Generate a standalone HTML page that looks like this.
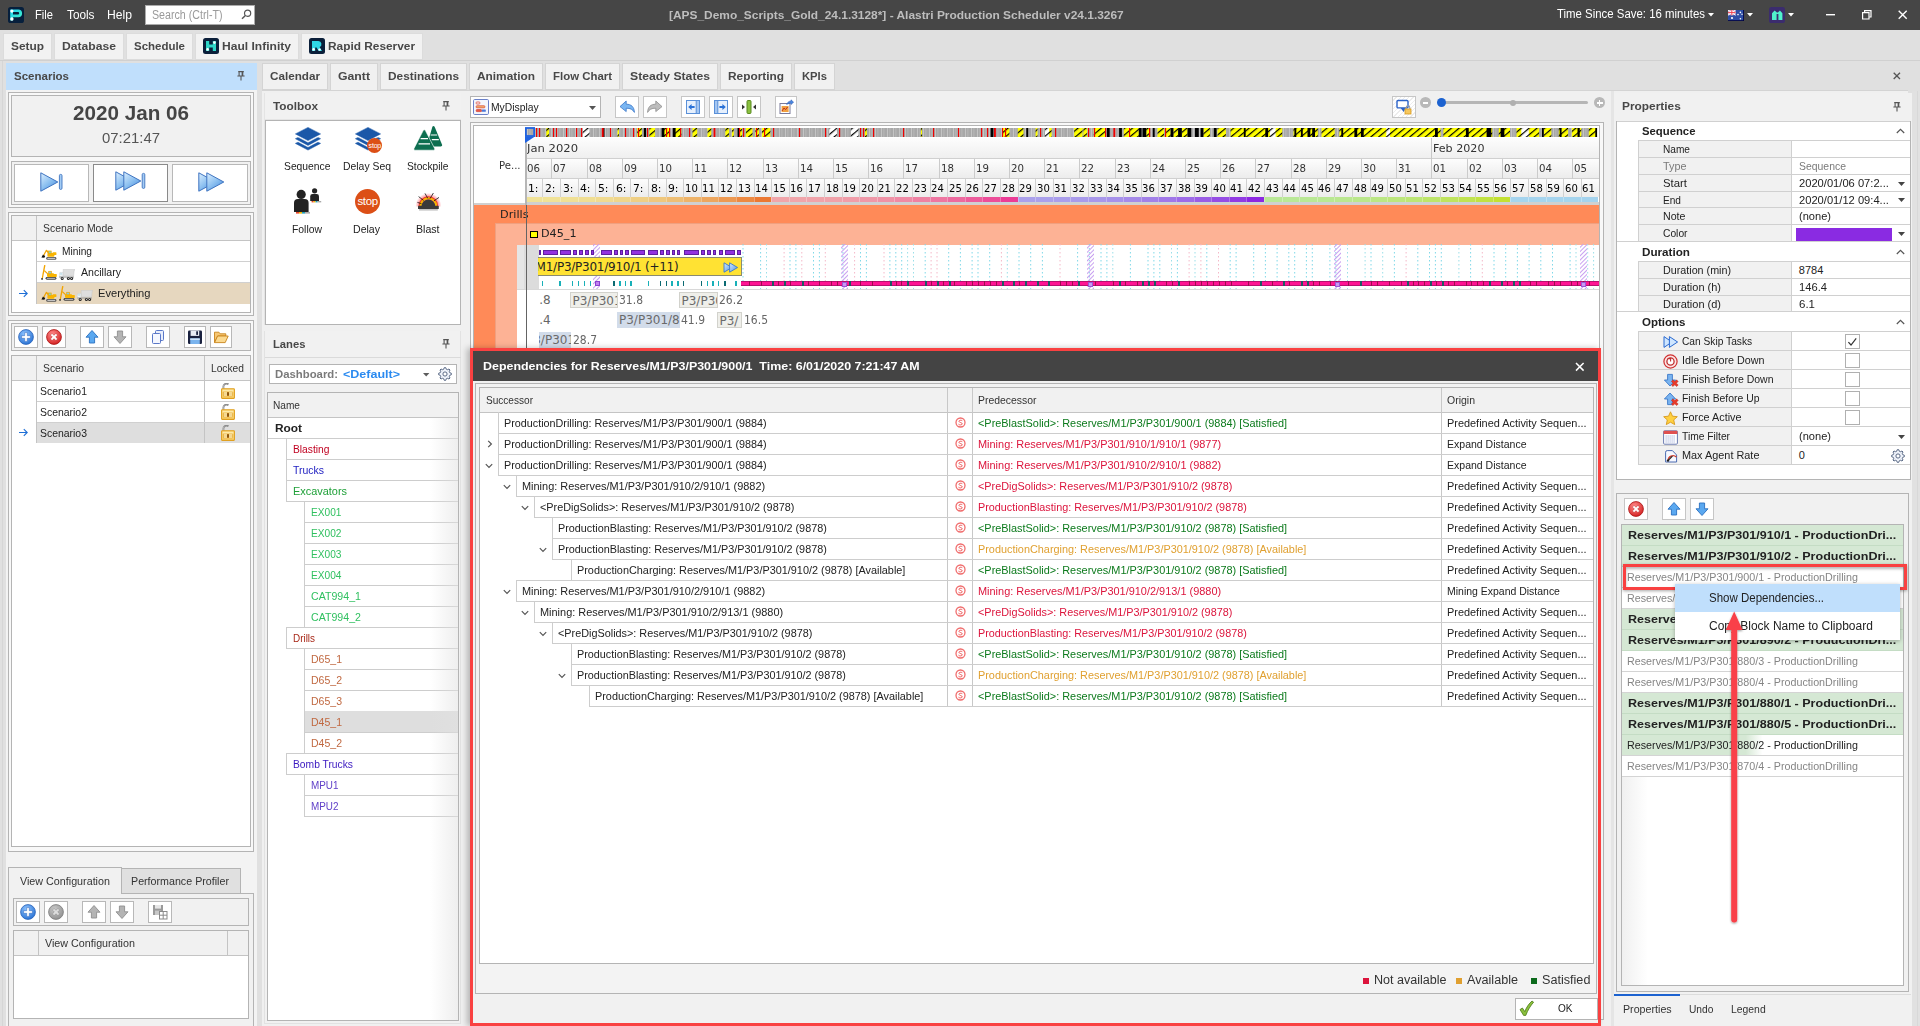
<!DOCTYPE html>
<html><head><meta charset="utf-8"><title>Alastri Production Scheduler</title>
<style>
html,body{margin:0;padding:0;}
body{width:1920px;height:1026px;overflow:hidden;background:#e0e0e0;position:relative;font-family:"Liberation Sans",sans-serif;font-size:11px;color:#222;}
div,span,svg{position:absolute;box-sizing:border-box;}
span{white-space:nowrap;}
</style></head><body>
<div style="left:0px;top:0px;width:1920px;height:30px;background:#464646;"></div>
<svg style="left:8px;top:7px;" width="16" height="16" viewBox="0 0 16 16"><defs><linearGradient id="pg" x1="0" y1="0" x2="1" y2="1"><stop offset="0" stop-color="#20d0f4"/><stop offset="1" stop-color="#44f4c4"/></linearGradient></defs><rect x="0" y="0" width="16" height="16" rx="2.6" fill="#061f3c"/><path d="M2.2 2.4H10.2A3.9 3.9 0 0 1 10.2 10.2H5V13.4H2.2z M5 5.1V7.5H10A1.2 1.2 0 0 0 10 5.1z" fill="url(#pg)" fill-rule="evenodd"/><circle cx="3.9" cy="4.1" r="1.65" fill="#fff"/><circle cx="3.9" cy="12" r="1.7" fill="#fff"/></svg>
<span style="top:4.7px;line-height:19px;font-size:13px;color:#fff;left:35px;transform:scaleX(0.8591);transform-origin:0 50%;">File</span>
<span style="top:4.7px;line-height:19px;font-size:13px;color:#fff;left:66.5px;transform:scaleX(0.9058);transform-origin:0 50%;">Tools</span>
<span style="top:4.7px;line-height:19px;font-size:13px;color:#fff;left:107px;transform:scaleX(0.9346);transform-origin:0 50%;">Help</span>
<div style="left:145px;top:5px;width:110px;height:20px;background:#fff;border:1px solid #ababab;"></div>
<span style="top:5.5px;line-height:18px;font-size:12px;color:#9a9a9a;left:151.5px;transform:scaleX(0.8885);transform-origin:0 50%;">Search (Ctrl-T)</span>
<svg style="left:241px;top:9px;" width="11" height="11" viewBox="0 0 11 11"><circle cx="6.6" cy="4.2" r="3.1" fill="none" stroke="#555" stroke-width="1.2"/><path d="M4.4 6.4L1 9.8" stroke="#555" stroke-width="1.4"/></svg>
<span style="top:6.9px;line-height:17px;font-size:11px;color:#bdbdbd;left:669.3px;font-weight:bold;transform:scaleX(1.0837);transform-origin:0 50%;">[APS_Demo_Scripts_Gold_24.1.3128*] - Alastri Production Scheduler v24.1.3267</span>
<span style="top:5.2px;line-height:18.5px;font-size:12.5px;color:#fff;left:1557px;transform:scaleX(0.9130);transform-origin:0 50%;">Time Since Save: 16 minutes</span>
<svg style="left:1707.5px;top:13px;" width="6" height="4" viewBox="0 0 6 4"><path d="M0 0h6L3 3.4z" fill="#fff"/></svg>
<svg style="left:1746.7px;top:13px;" width="6" height="4" viewBox="0 0 6 4"><path d="M0 0h6L3 3.4z" fill="#fff"/></svg>
<svg style="left:1787.6px;top:13px;" width="6" height="4" viewBox="0 0 6 4"><path d="M0 0h6L3 3.4z" fill="#fff"/></svg>
<svg style="left:1728px;top:10px;" width="16" height="11" viewBox="0 0 16 11"><rect width="16" height="11" fill="#00003c"/><rect width="15.2" height="10.2" fill="#2e4ea6"/><rect width="7.6" height="5.2" fill="#c8a0c0"/><path d="M0 0L7.6 5.2M7.6 0L0 5.2" stroke="#fff" stroke-width="1"/><path d="M3.8 0V5.2M0 2.6H7.6" stroke="#fff" stroke-width="1.8"/><path d="M3.8 0V5.2M0 2.6H7.6" stroke="#f04050" stroke-width="1"/><circle cx="4" cy="8" r="1.1" fill="#fff"/><circle cx="12.4" cy="2.4" r=".8" fill="#fff"/><circle cx="12.4" cy="8.8" r=".8" fill="#fff"/><circle cx="10" cy="4.6" r=".8" fill="#fff"/><circle cx="14" cy="4.2" r=".7" fill="#fff"/></svg>
<svg style="left:1769px;top:7px;" width="16" height="16" viewBox="0 0 16 16"><rect width="16" height="16" rx="2.6" fill="#3b2c6e"/><path d="M3 13V6.2L5.6 3.4 7.9 5.6 8.9 5.6 10.9 3.4 13.4 6.2V13H9.4V7H7.6V13z" fill="#50f2cc"/></svg>
<svg style="left:1826px;top:14px;" width="10" height="2" viewBox="0 0 10 2"><rect width="9" height="1.4" fill="#fff"/></svg>
<svg style="left:1862px;top:10px;" width="10" height="10" viewBox="0 0 10 10"><path d="M0.6 2.6h6.4v6.4h-6.4z" fill="none" stroke="#fff" stroke-width="1.2"/><path d="M2.6 2.4V.6h6.4v6.4H7.2" fill="none" stroke="#fff" stroke-width="1.2"/></svg>
<svg style="left:1898px;top:10px;" width="10" height="10" viewBox="0 0 10 10"><path d="M.7 .7L8.7 8.7M8.7 .7L.7 8.7" stroke="#fff" stroke-width="1.4"/></svg>
<div style="left:0px;top:60px;width:1920px;height:1px;background:#d0d0d0;"></div>
<div style="left:2.6px;top:32.5px;width:49.6px;height:27px;background:#f2f2f2;border:1px solid #dcdcdc;"></div>
<span style="top:37.9px;line-height:17.5px;font-size:11.5px;color:#484848;left:11px;font-weight:bold;transform:scaleX(1.0328);transform-origin:0 50%;">Setup</span>
<div style="left:53.6px;top:32.5px;width:70.6px;height:27px;background:#f2f2f2;border:1px solid #dcdcdc;"></div>
<span style="top:37.9px;line-height:17.5px;font-size:11.5px;color:#484848;left:62px;font-weight:bold;transform:scaleX(1.0562);transform-origin:0 50%;">Database</span>
<div style="left:125.6px;top:32.5px;width:67.6px;height:27px;background:#f2f2f2;border:1px solid #dcdcdc;"></div>
<span style="top:37.9px;line-height:17.5px;font-size:11.5px;color:#484848;left:134px;font-weight:bold;transform:scaleX(0.9976);transform-origin:0 50%;">Schedule</span>
<div style="left:194.6px;top:32.5px;width:104.6px;height:27px;background:#f2f2f2;border:1px solid #dcdcdc;"></div>
<span style="top:37.9px;line-height:17.5px;font-size:11.5px;color:#484848;left:222px;font-weight:bold;transform:scaleX(1.0489);transform-origin:0 50%;">Haul Infinity</span>
<svg style="left:203px;top:38px;" width="16" height="16" viewBox="0 0 16 16"><rect width="16" height="16" rx="2.5" fill="#0b1f3a"/><path d="M3 3h3.2v3.6h3.6V3H13v10H9.8V9.4H6.2V13H3z" fill="#2fd6c8"/><circle cx="4.6" cy="11.4" r="1.3" fill="#fff"/><circle cx="11.4" cy="4.6" r="1.3" fill="#fff"/></svg>
<div style="left:300.6px;top:32.5px;width:122.6px;height:27px;background:#f2f2f2;border:1px solid #dcdcdc;"></div>
<span style="top:37.9px;line-height:17.5px;font-size:11.5px;color:#484848;left:328px;font-weight:bold;transform:scaleX(1.0315);transform-origin:0 50%;">Rapid Reserver</span>
<svg style="left:309px;top:38px;" width="16" height="16" viewBox="0 0 16 16"><rect width="16" height="16" rx="2.5" fill="#0b1f3a"/><path d="M3 3h6.4a3.2 3.2 0 0 1 1.2 6.1L13 13H9.6L7.6 9.6H6.2V13H3z" fill="#2fd6e6"/><circle cx="4.6" cy="11.4" r="1.3" fill="#fff"/><circle cx="10.6" cy="11.6" r="1.2" fill="#fff"/></svg>
<div style="left:262px;top:63px;width:66px;height:27px;background:#f1f1f1;border:1px solid #d4d4d4;"></div>
<span style="top:67.5px;line-height:17.5px;font-size:11.5px;color:#484848;left:270px;font-weight:bold;transform:scaleX(1.0162);transform-origin:0 50%;">Calendar</span>
<div style="left:330px;top:63px;width:48px;height:28px;background:#f0f0f0;border:1px solid #d4d4d4;border-bottom:none;"></div>
<span style="top:67.5px;line-height:17.5px;font-size:11.5px;color:#484848;left:338px;font-weight:bold;transform:scaleX(1.0661);transform-origin:0 50%;">Gantt</span>
<div style="left:380px;top:63px;width:87px;height:27px;background:#f1f1f1;border:1px solid #d4d4d4;"></div>
<span style="top:67.5px;line-height:17.5px;font-size:11.5px;color:#484848;left:388px;font-weight:bold;transform:scaleX(1.0290);transform-origin:0 50%;">Destinations</span>
<div style="left:469px;top:63px;width:74px;height:27px;background:#f1f1f1;border:1px solid #d4d4d4;"></div>
<span style="top:67.5px;line-height:17.5px;font-size:11.5px;color:#484848;left:477px;font-weight:bold;transform:scaleX(1.0317);transform-origin:0 50%;">Animation</span>
<div style="left:545px;top:63px;width:75px;height:27px;background:#f1f1f1;border:1px solid #d4d4d4;"></div>
<span style="top:67.5px;line-height:17.5px;font-size:11.5px;color:#484848;left:553px;font-weight:bold;transform:scaleX(0.9932);transform-origin:0 50%;">Flow Chart</span>
<div style="left:622px;top:63px;width:96px;height:27px;background:#f1f1f1;border:1px solid #d4d4d4;"></div>
<span style="top:67.5px;line-height:17.5px;font-size:11.5px;color:#484848;left:630px;font-weight:bold;transform:scaleX(1.0611);transform-origin:0 50%;">Steady States</span>
<div style="left:720px;top:63px;width:72px;height:27px;background:#f1f1f1;border:1px solid #d4d4d4;"></div>
<span style="top:67.5px;line-height:17.5px;font-size:11.5px;color:#484848;left:728px;font-weight:bold;transform:scaleX(1.0311);transform-origin:0 50%;">Reporting</span>
<div style="left:794px;top:63px;width:41px;height:27px;background:#f1f1f1;border:1px solid #d4d4d4;"></div>
<span style="top:67.5px;line-height:17.5px;font-size:11.5px;color:#484848;left:802px;font-weight:bold;transform:scaleX(0.9780);transform-origin:0 50%;">KPIs</span>
<svg style="left:1893px;top:72px;" width="8" height="8" viewBox="0 0 8 8"><path d="M.7 .7L7 7M7 .7L.7 7" stroke="#555" stroke-width="1.3"/></svg>
<div style="left:2px;top:61px;width:1px;height:965px;background:#d6d6d6;"></div>
<div style="left:6px;top:63px;width:251px;height:963px;background:#f3f3f3;"></div>
<div style="left:6px;top:63px;width:251px;height:27px;background:#c0dffc;"></div>
<span style="top:67.5px;line-height:17.5px;font-size:11.5px;color:#484848;left:14px;font-weight:bold;transform:scaleX(1.0009);transform-origin:0 50%;">Scenarios</span>
<svg style="left:237px;top:71px;" width="8" height="10" viewBox="0 0 8 10"><path d="M1.2 .6h5.6M2.1 .6v4.4M.4 5h7.2M4 5v4.6" stroke="#555" stroke-width="1.1" fill="none"/><rect x="4.6" y=".6" width="1.7" height="4.4" fill="#555"/></svg>
<div style="left:8px;top:92px;width:246px;height:116px;background:#f8f8f8;border:1px solid #b4b4b4;"></div>
<div style="left:11px;top:95px;width:240px;height:62px;background:#f1f1f1;border:1px solid #b4b4b4;"></div>
<span style="top:100.0px;line-height:26px;font-size:20px;color:#454545;left:73px;font-weight:bold;transform:scaleX(1.0325);transform-origin:0 50%;">2020 Jan 06</span>
<span style="top:126.7px;line-height:21px;font-size:15px;color:#555;left:102px;transform:scaleX(0.9930);transform-origin:0 50%;">07:21:47</span>
<div style="left:11px;top:161px;width:240px;height:44px;background:#f1f1f1;border:1px solid #b4b4b4;"></div>
<div style="left:14px;top:164px;width:75px;height:38px;background:#fff;border:1px solid #b8b8b8;"></div>
<svg style="left:40px;top:172.4px;" width="26" height="20" viewBox="0 0 26 20"><defs><linearGradient id="pb" x1="0" y1="0" x2=".8" y2="1"><stop offset="0" stop-color="#dcefff"/><stop offset=".55" stop-color="#8cc0f0"/><stop offset="1" stop-color="#4a8ede"/></linearGradient></defs><path d="M0.8 .8L17.8 10 0.8 19.2z" fill="url(#pb)" stroke="#3f74c0" stroke-width="1" stroke-linejoin="round"/><rect x="19.4" y="2.4" width="2.6" height="15" rx="1.2" fill="#a4ccf4" stroke="#3f74c0" stroke-width=".9"/></svg>
<div style="left:93px;top:164px;width:75px;height:38px;background:#fff;border:1px solid #8a8a8a;"></div>
<svg style="left:115.3px;top:171.4px;" width="32" height="20" viewBox="0 0 32 20"><defs><linearGradient id="pb2" x1="0" y1="0" x2=".8" y2="1"><stop offset="0" stop-color="#dcefff"/><stop offset=".55" stop-color="#8cc0f0"/><stop offset="1" stop-color="#4a8ede"/></linearGradient></defs><path d="M0.8 .8L17.8 10 0.8 19.2z" fill="url(#pb2)" stroke="#3f74c0" stroke-width="1" stroke-linejoin="round"/><path d="M8.8 .8L25.8 10 8.8 19.2z" fill="url(#pb2)" stroke="#3f74c0" stroke-width="1" stroke-linejoin="round"/><rect x="27.2" y="2.4" width="2.6" height="15" rx="1.2" fill="#a4ccf4" stroke="#3f74c0" stroke-width=".9"/></svg>
<div style="left:172px;top:164px;width:76px;height:38px;background:#fff;border:1px solid #b8b8b8;"></div>
<svg style="left:198.3px;top:172.4px;" width="28" height="20" viewBox="0 0 28 20"><defs><linearGradient id="pb3" x1="0" y1="0" x2=".8" y2="1"><stop offset="0" stop-color="#dcefff"/><stop offset=".55" stop-color="#8cc0f0"/><stop offset="1" stop-color="#4a8ede"/></linearGradient></defs><path d="M0.8 .8L17.8 10 0.8 19.2z" fill="url(#pb3)" stroke="#3f74c0" stroke-width="1" stroke-linejoin="round"/><path d="M8.8 .8L25.8 10 8.8 19.2z" fill="url(#pb3)" stroke="#3f74c0" stroke-width="1" stroke-linejoin="round"/></svg>
<div style="left:8px;top:212px;width:246px;height:104px;background:#f8f8f8;border:1px solid #b4b4b4;"></div>
<div style="left:11px;top:215px;width:240px;height:98px;background:#fff;border:1px solid #b4b4b4;"></div>
<div style="left:12px;top:216px;width:238px;height:25px;background:#f1f1f1;border-bottom:1px solid #c4c4c4;"></div>
<div style="left:36px;top:216px;width:1px;height:88px;background:#c4c4c4;"></div>
<span style="top:219.5px;line-height:17px;font-size:11px;color:#333;left:42.5px;transform:scaleX(0.9455);transform-origin:0 50%;">Scenario Mode</span>
<div style="left:37px;top:261px;width:213px;height:1px;background:#d0d0d0;"></div>
<div style="left:37px;top:282px;width:213px;height:1px;background:#d0d0d0;"></div>
<div style="left:37px;top:283px;width:213px;height:21px;background:#e6d7bf;"></div>
<svg style="left:41px;top:248.5px;" width="16" height="11" viewBox="0 0 16 11"><path d="M.4 8.4L2 5.4 4.2 7 3.4 8.8z" fill="#111"/><path d="M2.2 6L5 .7 6.2 .9 8.4 4.4 7.2 4.8 5.4 2.4 3.3 6.6z" fill="#f2a400"/><rect x="6.4" y="4" width="7" height="3.8" rx=".8" fill="#f8b400"/><rect x="11.6" y="3.3" width="3.8" height="2.6" rx=".5" fill="#f8b400"/><rect x="7.4" y="2" width="2.8" height="2.5" fill="#7fd8c0" stroke="#f2a400" stroke-width=".7"/><rect x="5.2" y="8" width="10.2" height="2.8" rx="1.4" fill="#555"/><rect x="6.4" y="8.8" width="7.8" height="1.2" fill="#c4c4c4"/></svg>
<span style="top:242.5px;line-height:17px;font-size:11px;color:#222;left:62px;transform:scaleX(0.9257);transform-origin:0 50%;">Mining</span>
<svg style="left:41px;top:265px;" width="16" height="15" viewBox="0 0 16 15"><path d="M3.1 0L4.5 .2 1.9 13.4 .7 13.2z" fill="#f2a400"/><rect x=".3" y="13" width="1.5" height="1.8" fill="#333"/><path d="M3.5 5L7.2 8.6 6.4 9.2 3.1 6.2z" fill="#f2a400"/><rect x="6" y="8.3" width="7" height="3.6" rx=".8" fill="#f8b400"/><rect x="11.6" y="8.9" width="4.2" height="3" rx=".6" fill="#f8b400"/><rect x="7.7" y="6.3" width="2.7" height="2.5" fill="#7fd0e8" stroke="#f2a400" stroke-width=".7"/><rect x="4.6" y="12" width="10.8" height="2.7" rx="1.35" fill="#444"/><rect x="5.8" y="12.8" width="8.4" height="1.1" fill="#bbb"/></svg>
<svg style="left:58.8px;top:269px;" width="16" height="11" viewBox="0 0 16 11"><path d="M4.2 .3H15.8V1.2H15.2L14.6 7H4.2z" fill="#dedede" stroke="#c6c6c6" stroke-width=".5"/><path d="M.9 3.4H3.9V8H.3V5.2z" fill="#eef3f5" stroke="#c4ccd0" stroke-width=".5"/><rect x="1.1" y="4" width="2" height="1.8" fill="#c8e2ec"/><rect x=".2" y="7.4" width="14.8" height="1.3" fill="#a8a8a8"/><circle cx="3.2" cy="9.4" r="1.5" fill="#222"/><circle cx="9.4" cy="9.4" r="1.5" fill="#222"/><circle cx="12.6" cy="9.4" r="1.5" fill="#222"/><circle cx="3.2" cy="9.4" r=".55" fill="#ddd"/><circle cx="9.4" cy="9.4" r=".55" fill="#ddd"/><circle cx="12.6" cy="9.4" r=".55" fill="#ddd"/></svg>
<span style="top:263.5px;line-height:17px;font-size:11px;color:#222;left:80.5px;transform:scaleX(0.9624);transform-origin:0 50%;">Ancillary</span>
<svg style="left:41px;top:290.5px;" width="16" height="11" viewBox="0 0 16 11"><path d="M.4 8.4L2 5.4 4.2 7 3.4 8.8z" fill="#111"/><path d="M2.2 6L5 .7 6.2 .9 8.4 4.4 7.2 4.8 5.4 2.4 3.3 6.6z" fill="#f2a400"/><rect x="6.4" y="4" width="7" height="3.8" rx=".8" fill="#f8b400"/><rect x="11.6" y="3.3" width="3.8" height="2.6" rx=".5" fill="#f8b400"/><rect x="7.4" y="2" width="2.8" height="2.5" fill="#7fd8c0" stroke="#f2a400" stroke-width=".7"/><rect x="5.2" y="8" width="10.2" height="2.8" rx="1.4" fill="#555"/><rect x="6.4" y="8.8" width="7.8" height="1.2" fill="#c4c4c4"/></svg>
<svg style="left:58.5px;top:286px;" width="16" height="15" viewBox="0 0 16 15"><path d="M3.1 0L4.5 .2 1.9 13.4 .7 13.2z" fill="#f2a400"/><rect x=".3" y="13" width="1.5" height="1.8" fill="#333"/><path d="M3.5 5L7.2 8.6 6.4 9.2 3.1 6.2z" fill="#f2a400"/><rect x="6" y="8.3" width="7" height="3.6" rx=".8" fill="#f8b400"/><rect x="11.6" y="8.9" width="4.2" height="3" rx=".6" fill="#f8b400"/><rect x="7.7" y="6.3" width="2.7" height="2.5" fill="#7fd0e8" stroke="#f2a400" stroke-width=".7"/><rect x="4.6" y="12" width="10.8" height="2.7" rx="1.35" fill="#444"/><rect x="5.8" y="12.8" width="8.4" height="1.1" fill="#bbb"/></svg>
<svg style="left:76.5px;top:290px;" width="16" height="11" viewBox="0 0 16 11"><path d="M4.2 .3H15.8V1.2H15.2L14.6 7H4.2z" fill="#dedede" stroke="#c6c6c6" stroke-width=".5"/><path d="M.9 3.4H3.9V8H.3V5.2z" fill="#eef3f5" stroke="#c4ccd0" stroke-width=".5"/><rect x="1.1" y="4" width="2" height="1.8" fill="#c8e2ec"/><rect x=".2" y="7.4" width="14.8" height="1.3" fill="#a8a8a8"/><circle cx="3.2" cy="9.4" r="1.5" fill="#222"/><circle cx="9.4" cy="9.4" r="1.5" fill="#222"/><circle cx="12.6" cy="9.4" r="1.5" fill="#222"/><circle cx="3.2" cy="9.4" r=".55" fill="#ddd"/><circle cx="9.4" cy="9.4" r=".55" fill="#ddd"/><circle cx="12.6" cy="9.4" r=".55" fill="#ddd"/></svg>
<span style="top:284.5px;line-height:17px;font-size:11px;color:#222;left:98px;transform:scaleX(1.0096);transform-origin:0 50%;">Everything</span>
<svg style="left:18px;top:289px;" width="10" height="9" viewBox="0 0 10 9"><path d="M1 4.5h8M5.8 1.2L9.2 4.5 5.8 7.8" stroke="#1f6fd6" stroke-width="1.1" fill="none"/></svg>
<div style="left:8px;top:320px;width:246px;height:532px;background:#f8f8f8;border:1px solid #b4b4b4;"></div>
<div style="left:11px;top:323px;width:240px;height:28px;background:#f1f1f1;border:1px solid #b4b4b4;"></div>
<div style="left:14px;top:326px;width:24px;height:22px;background:#fff;border:1px solid #b8b8b8;"></div>
<svg style="left:18px;top:329px;" width="16" height="16" viewBox="0 0 16 16"><defs><radialGradient id="gb" cx=".4" cy=".3" r=".8"><stop offset="0" stop-color="#8ec4ff"/><stop offset="1" stop-color="#1f6ad0"/></radialGradient></defs><circle cx="8" cy="8" r="7.4" fill="url(#gb)" stroke="#2a62b8" stroke-width=".8"/><path d="M6.7 3.6h2.6v3.1h3.1v2.6H9.3v3.1H6.7V9.3H3.6V6.7h3.1z" fill="#fff" stroke="#2a62b8" stroke-width=".5"/></svg>
<div style="left:42px;top:326px;width:24px;height:22px;background:#fff;border:1px solid #b8b8b8;"></div>
<svg style="left:46px;top:329px;" width="16" height="16" viewBox="0 0 16 16"><defs><radialGradient id="gr" cx=".4" cy=".3" r=".8"><stop offset="0" stop-color="#ff8a8a"/><stop offset="1" stop-color="#d01818"/></radialGradient></defs><circle cx="8" cy="8" r="7.4" fill="url(#gr)" stroke="#a81010" stroke-width=".8"/><path d="M4.4 6.1L6.1 4.4 8 6.3 9.9 4.4 11.6 6.1 9.7 8 11.6 9.9 9.9 11.6 8 9.7 6.1 11.6 4.4 9.9 6.3 8z" fill="#fff" stroke="#a81010" stroke-width=".4"/></svg>
<div style="left:80px;top:326px;width:24px;height:22px;background:#fff;border:1px solid #b8b8b8;"></div>
<svg style="left:84px;top:329px;" width="16" height="16" viewBox="0 0 16 16"><path d="M8 1.5L14 8.2H10.6V14H5.4V8.2H2z" fill="#5aa8f0" stroke="#2a6fc0" stroke-width=".9" stroke-linejoin="round"/></svg>
<div style="left:108px;top:326px;width:24px;height:22px;background:#fff;border:1px solid #b8b8b8;"></div>
<svg style="left:112px;top:329px;" width="16" height="16" viewBox="0 0 16 16"><path d="M8 14.5L14 7.8H10.6V2H5.4V7.8H2z" fill="#b4b4b4" stroke="#8e8e8e" stroke-width=".9" stroke-linejoin="round"/></svg>
<div style="left:146px;top:326px;width:24px;height:22px;background:#fff;border:1px solid #b8b8b8;"></div>
<svg style="left:150px;top:329px;" width="16" height="16" viewBox="0 0 16 16"><rect x="5.5" y="1.5" width="8" height="10" rx="1" fill="#e8eefc" stroke="#5a78c8" stroke-width="1"/><rect x="2.5" y="4.5" width="8" height="10" rx="1" fill="#f4f7ff" stroke="#5a78c8" stroke-width="1"/></svg>
<div style="left:184px;top:326px;width:22px;height:22px;background:#fff;border:1px solid #b8b8b8;"></div>
<svg style="left:187px;top:329px;" width="16" height="16" viewBox="0 0 16 16"><rect x="1" y="1.5" width="14" height="13.5" rx="1.2" fill="#1a2240"/><rect x="3.6" y="1.5" width="8.6" height="5.4" fill="#e8ecf4"/><rect x="9.2" y="2.3" width="1.8" height="3.6" fill="#1a2240"/><rect x="3.2" y="9.4" width="9.6" height="5.6" fill="#7ab4ee"/><rect x="3.2" y="9.4" width="9.6" height="1.6" fill="#cfe4fb"/></svg>
<div style="left:210px;top:326px;width:22px;height:22px;background:#fff;border:1px solid #b8b8b8;"></div>
<svg style="left:213px;top:329px;" width="16" height="16" viewBox="0 0 16 16"><path d="M1.5 13.5V3.2h4.4l1.3 1.6h5.6v2.2H4.6L1.5 13.5z" fill="#f7c773" stroke="#c8841c" stroke-width=".9" stroke-linejoin="round"/><path d="M1.6 13.6L4.6 7h10.6l-3 6.6z" fill="#fbd98f" stroke="#c8841c" stroke-width=".9" stroke-linejoin="round"/></svg>
<div style="left:11px;top:355px;width:240px;height:492px;background:#fff;border:1px solid #b4b4b4;"></div>
<div style="left:12px;top:356px;width:238px;height:25px;background:#f1f1f1;border-bottom:1px solid #c4c4c4;"></div>
<span style="top:359.5px;line-height:17px;font-size:11px;color:#333;left:42.5px;transform:scaleX(0.9439);transform-origin:0 50%;">Scenario</span>
<span style="top:359.5px;line-height:17px;font-size:11px;color:#333;left:210.5px;transform:scaleX(0.9296);transform-origin:0 50%;">Locked</span>
<div style="left:37px;top:422px;width:213px;height:21px;background:#dedede;"></div>
<div style="left:36px;top:356px;width:1px;height:87px;background:#c4c4c4;"></div>
<div style="left:204px;top:356px;width:1px;height:87px;background:#c4c4c4;"></div>
<div style="left:37px;top:401px;width:213px;height:1px;background:#d0d0d0;"></div>
<div style="left:37px;top:422px;width:213px;height:1px;background:#d0d0d0;"></div>
<span style="top:382.5px;line-height:17px;font-size:11px;color:#222;left:39.5px;transform:scaleX(0.9483);transform-origin:0 50%;">Scenario1</span>
<svg style="left:221px;top:383px;" width="14" height="16" viewBox="0 0 14 16"><path d="M2.4 6.4V3.6a3 3 0 0 1 5-2.2" fill="none" stroke="#8e8e8e" stroke-width="1.9"/><path d="M2.2 6V3.6a2.8 2.8 0 0 1 .8-2" fill="none" stroke="#c8c8c8" stroke-width=".8"/><rect x=".6" y="5.8" width="12.8" height="9.6" rx=".6" fill="#f9d272" stroke="#e0a020" stroke-width="1.1"/><rect x="1.6" y="6.8" width="10.8" height="2" fill="#fde9a8"/><rect x="2.4" y="9" width="9.2" height="4" fill="#fdf0c4" stroke="#e4ac38" stroke-width=".7"/><path d="M2.4 11h9.2" stroke="#e4ac38" stroke-width=".7"/><rect x="6" y="9" width="2" height="4" fill="#c07818"/><rect x="6.5" y="9.6" width="1" height="2.6" fill="#5a3808"/></svg>
<span style="top:403.5px;line-height:17px;font-size:11px;color:#222;left:39.5px;transform:scaleX(0.9483);transform-origin:0 50%;">Scenario2</span>
<svg style="left:221px;top:404px;" width="14" height="16" viewBox="0 0 14 16"><path d="M2.4 6.4V3.6a3 3 0 0 1 5-2.2" fill="none" stroke="#8e8e8e" stroke-width="1.9"/><path d="M2.2 6V3.6a2.8 2.8 0 0 1 .8-2" fill="none" stroke="#c8c8c8" stroke-width=".8"/><rect x=".6" y="5.8" width="12.8" height="9.6" rx=".6" fill="#f9d272" stroke="#e0a020" stroke-width="1.1"/><rect x="1.6" y="6.8" width="10.8" height="2" fill="#fde9a8"/><rect x="2.4" y="9" width="9.2" height="4" fill="#fdf0c4" stroke="#e4ac38" stroke-width=".7"/><path d="M2.4 11h9.2" stroke="#e4ac38" stroke-width=".7"/><rect x="6" y="9" width="2" height="4" fill="#c07818"/><rect x="6.5" y="9.6" width="1" height="2.6" fill="#5a3808"/></svg>
<span style="top:424.5px;line-height:17px;font-size:11px;color:#222;left:39.5px;transform:scaleX(0.9483);transform-origin:0 50%;">Scenario3</span>
<svg style="left:221px;top:425px;" width="14" height="16" viewBox="0 0 14 16"><path d="M2.4 6.4V3.6a3 3 0 0 1 5-2.2" fill="none" stroke="#8e8e8e" stroke-width="1.9"/><path d="M2.2 6V3.6a2.8 2.8 0 0 1 .8-2" fill="none" stroke="#c8c8c8" stroke-width=".8"/><rect x=".6" y="5.8" width="12.8" height="9.6" rx=".6" fill="#f9d272" stroke="#e0a020" stroke-width="1.1"/><rect x="1.6" y="6.8" width="10.8" height="2" fill="#fde9a8"/><rect x="2.4" y="9" width="9.2" height="4" fill="#fdf0c4" stroke="#e4ac38" stroke-width=".7"/><path d="M2.4 11h9.2" stroke="#e4ac38" stroke-width=".7"/><rect x="6" y="9" width="2" height="4" fill="#c07818"/><rect x="6.5" y="9.6" width="1" height="2.6" fill="#5a3808"/></svg>
<svg style="left:18px;top:428px;" width="10" height="9" viewBox="0 0 10 9"><path d="M1 4.5h8M5.8 1.2L9.2 4.5 5.8 7.8" stroke="#1f6fd6" stroke-width="1.1" fill="none"/></svg>
<div style="left:8px;top:893px;width:246px;height:140px;background:#f1f1f1;border:1px solid #b4b4b4;"></div>
<div style="left:121px;top:868px;width:120px;height:26px;background:#e0e0e0;border:1px solid #b4b4b4;"></div>
<div style="left:8px;top:867px;width:114px;height:27px;background:#f1f1f1;border:1px solid #b4b4b4;border-bottom:none;"></div>
<span style="top:872.8px;line-height:17px;font-size:11px;color:#333;left:19.5px;transform:scaleX(0.9764);transform-origin:0 50%;">View Configuration</span>
<span style="top:872.8px;line-height:17px;font-size:11px;color:#333;left:131px;transform:scaleX(0.9712);transform-origin:0 50%;">Performance Profiler</span>
<div style="left:13px;top:898px;width:236px;height:28px;border:1px solid #b4b4b4;"></div>
<div style="left:16px;top:901px;width:24px;height:22px;background:#fff;border:1px solid #b8b8b8;"></div>
<svg style="left:20px;top:904px;" width="16" height="16" viewBox="0 0 16 16"><defs><radialGradient id="gb2" cx=".4" cy=".3" r=".8"><stop offset="0" stop-color="#8ec4ff"/><stop offset="1" stop-color="#1f6ad0"/></radialGradient></defs><circle cx="8" cy="8" r="7.4" fill="url(#gb2)" stroke="#2a62b8" stroke-width=".8"/><path d="M6.7 3.6h2.6v3.1h3.1v2.6H9.3v3.1H6.7V9.3H3.6V6.7h3.1z" fill="#fff" stroke="#2a62b8" stroke-width=".5"/></svg>
<div style="left:44px;top:901px;width:24px;height:22px;background:#fff;border:1px solid #b8b8b8;"></div>
<svg style="left:48px;top:904px;" width="16" height="16" viewBox="0 0 16 16"><defs><radialGradient id="gg" cx=".4" cy=".3" r=".8"><stop offset="0" stop-color="#c8c8c8"/><stop offset="1" stop-color="#8c8c8c"/></radialGradient></defs><circle cx="8" cy="8" r="7.4" fill="url(#gg)" stroke="#7a7a7a" stroke-width=".8"/><path d="M4.4 6.1L6.1 4.4 8 6.3 9.9 4.4 11.6 6.1 9.7 8 11.6 9.9 9.9 11.6 8 9.7 6.1 11.6 4.4 9.9 6.3 8z" fill="#ddd" stroke="#7a7a7a" stroke-width=".4"/></svg>
<div style="left:82px;top:901px;width:24px;height:22px;background:#fff;border:1px solid #b8b8b8;"></div>
<svg style="left:86px;top:904px;" width="16" height="16" viewBox="0 0 16 16"><path d="M8 1.5L14 8.2H10.6V14H5.4V8.2H2z" fill="#b4b4b4" stroke="#8e8e8e" stroke-width=".9" stroke-linejoin="round"/></svg>
<div style="left:110px;top:901px;width:24px;height:22px;background:#fff;border:1px solid #b8b8b8;"></div>
<svg style="left:114px;top:904px;" width="16" height="16" viewBox="0 0 16 16"><path d="M8 14.5L14 7.8H10.6V2H5.4V7.8H2z" fill="#b4b4b4" stroke="#8e8e8e" stroke-width=".9" stroke-linejoin="round"/></svg>
<div style="left:148px;top:901px;width:24px;height:22px;background:#fff;border:1px solid #b8b8b8;"></div>
<svg style="left:152px;top:904px;" width="16" height="16" viewBox="0 0 16 16"><rect x="1" y="1" width="10" height="10" fill="#9a9a9a"/><rect x="3" y="1" width="6" height="3.6" fill="#e6e6e6"/><rect x="3" y="6.6" width="6" height="4.4" fill="#c8c8c8"/><rect x="7.5" y="7.5" width="7.5" height="7.5" fill="#fff" stroke="#8a8a8a" stroke-width="1"/><path d="M7.5 11.2H15M11.2 7.5V15" stroke="#8a8a8a" stroke-width="1"/></svg>
<div style="left:13px;top:930px;width:236px;height:89px;background:#fff;border:1px solid #b4b4b4;"></div>
<div style="left:14px;top:931px;width:234px;height:25px;background:#f1f1f1;border-bottom:1px solid #c4c4c4;"></div>
<div style="left:38px;top:931px;width:1px;height:24px;background:#c4c4c4;"></div>
<div style="left:227px;top:931px;width:1px;height:24px;background:#c4c4c4;"></div>
<span style="top:934.5px;line-height:17px;font-size:11px;color:#333;left:44.5px;transform:scaleX(0.9764);transform-origin:0 50%;">View Configuration</span>
<div style="left:262px;top:90px;width:1646px;height:940px;background:#f0f0f0;border-top:1px solid #d4d4d4;"></div>
<div style="left:264px;top:93px;width:197px;height:232px;background:#e4e4e4;"></div>
<div style="left:265px;top:93px;width:196px;height:26px;background:#f1f1f1;"></div>
<span style="top:97.7px;line-height:17.5px;font-size:11.5px;color:#484848;left:273px;font-weight:bold;transform:scaleX(1.0256);transform-origin:0 50%;">Toolbox</span>
<svg style="left:442px;top:101px;" width="8" height="10" viewBox="0 0 8 10"><path d="M1.2 .6h5.6M2.1 .6v4.4M.4 5h7.2M4 5v4.6" stroke="#555" stroke-width="1.1" fill="none"/><rect x="4.6" y=".6" width="1.7" height="4.4" fill="#555"/></svg>
<div style="left:265px;top:120px;width:196px;height:205px;background:#fff;border:1px solid #b4b4b4;"></div>
<svg style="left:294.6px;top:126.6px;" width="26" height="24" viewBox="0 -0.4 26 24"><path d="M13 9.5L25.6 16.0 13 22.7 .4 16.0z" fill="#1b58a8" stroke="#1b58a8" stroke-width=".5" stroke-linejoin="round"/><path d="M13 6.4L25.6 12.9 13 19.6 .4 12.9z" fill="#fff" stroke="#fff" stroke-width=".5" stroke-linejoin="round"/><path d="M13 4.8L25.6 11.3 13 18.0 .4 11.3z" fill="#1b58a8" stroke="#1b58a8" stroke-width=".5" stroke-linejoin="round"/><path d="M13 1.7L25.6 8.2 13 14.899999999999999 .4 8.2z" fill="#fff" stroke="#fff" stroke-width=".5" stroke-linejoin="round"/><path d="M13 0L25.6 6.5 13 13.2 .4 6.5z" fill="#1b58a8" stroke="#1b58a8" stroke-width=".5" stroke-linejoin="round"/></svg>
<svg style="left:354.6px;top:126.6px;" width="26" height="24" viewBox="0 -0.4 26 24"><path d="M13 9.5L25.6 16.0 13 22.7 .4 16.0z" fill="#1b58a8" stroke="#1b58a8" stroke-width=".5" stroke-linejoin="round"/><path d="M13 6.4L25.6 12.9 13 19.6 .4 12.9z" fill="#fff" stroke="#fff" stroke-width=".5" stroke-linejoin="round"/><path d="M13 4.8L25.6 11.3 13 18.0 .4 11.3z" fill="#1b58a8" stroke="#1b58a8" stroke-width=".5" stroke-linejoin="round"/><path d="M13 1.7L25.6 8.2 13 14.899999999999999 .4 8.2z" fill="#fff" stroke="#fff" stroke-width=".5" stroke-linejoin="round"/><path d="M13 0L25.6 6.5 13 13.2 .4 6.5z" fill="#1b58a8" stroke="#1b58a8" stroke-width=".5" stroke-linejoin="round"/></svg>
<div style="left:367px;top:138px;width:15px;height:15px;border-radius:50%;background:#dc4f16;"></div>
<span style="top:138.7px;line-height:13px;font-size:7px;color:#fff;left:-25.19999999999999px;width:800px;text-align:center;letter-spacing:-.2px;">stop</span>
<svg style="left:413px;top:126px;" width="30" height="25" viewBox="0 0 30 25"><path d="M19.4 .8c.6-1 1.6-1 2.2 0L29 18.6c.4 1-.2 1.8-1.2 1.8H13.6z" fill="#0d6e50"/><path d="M10.2 4.6c.6-1 1.6-1 2.2 0L21.6 22.4c.4 1-.2 1.8-1.2 1.8H2.2C1.2 24.2.6 23.4 1 22.4z" fill="#0d6e50" stroke="#fff" stroke-width=".6"/><path d="M17.6 9h6.6M18.8 13.6h7" stroke="#fff" stroke-width="1.2"/><path d="M7.6 12.6h7.4M5.6 17.8h11.4" stroke="#fff" stroke-width="1.2"/></svg>
<span style="top:157.8px;line-height:17px;font-size:11px;color:#222;left:283.5px;transform:scaleX(0.9376);transform-origin:0 50%;">Sequence</span>
<span style="top:157.8px;line-height:17px;font-size:11px;color:#222;left:343.3px;transform:scaleX(0.9452);transform-origin:0 50%;">Delay Seq</span>
<span style="top:157.8px;line-height:17px;font-size:11px;color:#222;left:406.5px;transform:scaleX(0.9293);transform-origin:0 50%;">Stockpile</span>
<svg style="left:293px;top:187px;" width="30" height="28" viewBox="0 0 30 28"><circle cx="8.2" cy="7.4" r="4.6" fill="#222"/><path d="M1 25V16a4 4 0 0 1 4-4h6.6a4 4 0 0 1 4 4v9z" fill="#222"/><circle cx="21.6" cy="3.8" r="2.6" fill="#222"/><path d="M17.2 14V9.4a2.4 2.4 0 0 1 2.4-2.4h4a2.4 2.4 0 0 1 2.4 2.4V14z" fill="#222"/><rect x="3" y="25" width="3" height="1.6" fill="#e8452c"/><rect x="6" y="25" width="3" height="1.6" fill="#f5b800"/><rect x="9" y="25" width="3" height="1.6" fill="#24a0b8"/><rect x="12" y="25" width="5" height="1.6" fill="#aaa"/><rect x="18.6" y="14" width="2" height="1.4" fill="#e8452c"/><rect x="20.6" y="14" width="2" height="1.4" fill="#f5b800"/><rect x="22.6" y="14" width="2" height="1.4" fill="#24a0b8"/><rect x="24.6" y="14" width="3.6" height="1.4" fill="#aaa"/></svg>
<div style="left:355px;top:189px;width:25px;height:25px;border-radius:50%;background:#dc4f16;"></div>
<span style="top:192.6px;line-height:17.5px;font-size:11.5px;color:#fff;left:-32.30000000000001px;width:800px;text-align:center;letter-spacing:-.3px;">stop</span>
<svg style="left:415px;top:190px;" width="27" height="22" viewBox="0 0 27 22"><defs><radialGradient id="bl" cx="13.4" cy="16" r="13" gradientUnits="userSpaceOnUse"><stop offset="0.6" stop-color="#ff3040" stop-opacity=".75"/><stop offset="1" stop-color="#ff3040" stop-opacity="0"/></radialGradient><clipPath id="blc"><rect x="0" y="0" width="27" height="16.5"/></clipPath></defs><circle cx="13.4" cy="16" r="13" fill="url(#bl)" clip-path="url(#blc)"/><path d="M4.4 16a9 9 0 0 1 18 0" fill="none" stroke="#f03a2a" stroke-width="1.6"/><path d="M5.6 16a7.8 7.8 0 0 1 15.6 0" fill="none" stroke="#f5b400" stroke-width="1.9"/><path d="M6.6 16.2a6.8 6.8 0 0 1 13.6 0z" fill="#3a3a3a"/><rect x="3" y="15.8" width="20.8" height="3.2" rx=".6" fill="#3a3a3a"/><rect x="4" y="19" width="18.8" height="1.6" fill="#c4c4c4"/><path d="M12.8 8.4L10 3.4M15 8.6L18.4 3M8.6 10.4L3.6 6.6M19 10.8L24 7.4M6.4 13.6L2.4 12.4" stroke="#111" stroke-width=".8"/></svg>
<span style="top:220.8px;line-height:17px;font-size:11px;color:#222;left:292px;transform:scaleX(0.9440);transform-origin:0 50%;">Follow</span>
<span style="top:220.8px;line-height:17px;font-size:11px;color:#222;left:353px;transform:scaleX(0.9600);transform-origin:0 50%;">Delay</span>
<span style="top:220.8px;line-height:17px;font-size:11px;color:#222;left:415.5px;transform:scaleX(0.9604);transform-origin:0 50%;">Blast</span>
<div style="left:264px;top:331px;width:197px;height:693px;background:#f1f1f1;border:1px solid #e2e2e2;border-top:none;"></div>
<div style="left:265px;top:357px;width:196px;height:1px;background:#dadada;"></div>
<span style="top:335.6px;line-height:17.5px;font-size:11.5px;color:#484848;left:273.3px;font-weight:bold;transform:scaleX(0.9779);transform-origin:0 50%;">Lanes</span>
<svg style="left:442px;top:339px;" width="8" height="10" viewBox="0 0 8 10"><path d="M1.2 .6h5.6M2.1 .6v4.4M.4 5h7.2M4 5v4.6" stroke="#555" stroke-width="1.1" fill="none"/><rect x="4.6" y=".6" width="1.7" height="4.4" fill="#555"/></svg>
<div style="left:269px;top:364px;width:188px;height:20px;background:#fff;border:1px solid #b4b4b4;"></div>
<span style="top:366.1px;line-height:17.5px;font-size:11.5px;color:#7a7a7a;left:275.3px;font-weight:bold;transform:scaleX(0.9858);transform-origin:0 50%;">Dashboard:</span>
<span style="top:366.1px;line-height:17.5px;font-size:11.5px;color:#2a8af0;left:343px;font-weight:bold;transform:scaleX(1.0877);transform-origin:0 50%;">&lt;Default&gt;</span>
<svg style="left:422.6px;top:372.8px;" width="7" height="4" viewBox="0 0 7 4"><path d="M0 0h6.4L3.2 3.4z" fill="#5c5c5c"/></svg>
<svg style="left:438px;top:367px;" width="14" height="14" viewBox="0 0 14 14"><path d="M13.36 6.30 L13.36 7.70 L11.71 8.37 L11.29 9.36 L11.99 11.00 L11.00 11.99 L9.36 11.29 L8.37 11.71 L7.70 13.36 L6.30 13.36 L5.63 11.71 L4.64 11.29 L3.00 11.99 L2.01 11.00 L2.71 9.36 L2.29 8.37 L0.64 7.70 L0.64 6.30 L2.29 5.63 L2.71 4.64 L2.01 3.00 L3.00 2.01 L4.64 2.71 L5.63 2.29 L6.30 0.64 L7.70 0.64 L8.37 2.29 L9.36 2.71 L11.00 2.01 L11.99 3.00 L11.29 4.64 L11.71 5.63Z" fill="#eef2fa" stroke="#4a5a78" stroke-width=".9" stroke-linejoin="round"/><circle cx="7" cy="7" r="2.1" fill="#fff" stroke="#4a5a78" stroke-width=".9"/></svg>
<div style="left:267px;top:392px;width:192px;height:629px;background:#fff;border:1px solid #b4b4b4;"></div>
<div style="left:268px;top:393px;width:190px;height:25px;background:#f1f1f1;border-bottom:1px solid #c4c4c4;"></div>
<span style="top:396.9px;line-height:17px;font-size:11px;color:#333;left:273.3px;transform:scaleX(0.9201);transform-origin:0 50%;">Name</span>
<div style="left:268px;top:438px;width:190px;height:1px;background:#cdcdcd;"></div>
<span style="top:420.0px;line-height:17px;font-size:11px;color:#222;left:274.5px;font-weight:bold;transform:scaleX(1.0787);transform-origin:0 50%;">Root</span>
<div style="left:286px;top:459px;width:172px;height:1px;background:#cdcdcd;"></div>
<div style="left:286px;top:438px;width:1px;height:22px;background:#cdcdcd;"></div>
<span style="top:440.5px;line-height:17px;font-size:11px;color:#c00020;left:292.5px;transform:scaleX(0.9322);transform-origin:0 50%;">Blasting</span>
<div style="left:286px;top:480px;width:172px;height:1px;background:#cdcdcd;"></div>
<div style="left:286px;top:459px;width:1px;height:22px;background:#cdcdcd;"></div>
<span style="top:461.5px;line-height:17px;font-size:11px;color:#1c1cc0;left:292.5px;transform:scaleX(0.9511);transform-origin:0 50%;">Trucks</span>
<div style="left:286px;top:501px;width:172px;height:1px;background:#cdcdcd;"></div>
<div style="left:286px;top:480px;width:1px;height:22px;background:#cdcdcd;"></div>
<span style="top:482.5px;line-height:17px;font-size:11px;color:#1fa038;left:292.5px;transform:scaleX(0.9920);transform-origin:0 50%;">Excavators</span>
<div style="left:304px;top:522px;width:154px;height:1px;background:#cdcdcd;"></div>
<div style="left:304px;top:501px;width:1px;height:22px;background:#cdcdcd;"></div>
<span style="top:503.5px;line-height:17px;font-size:11px;color:#30c060;left:310.5px;transform:scaleX(0.9225);transform-origin:0 50%;">EX001</span>
<div style="left:304px;top:543px;width:154px;height:1px;background:#cdcdcd;"></div>
<div style="left:304px;top:522px;width:1px;height:22px;background:#cdcdcd;"></div>
<span style="top:524.5px;line-height:17px;font-size:11px;color:#30c060;left:310.5px;transform:scaleX(0.9225);transform-origin:0 50%;">EX002</span>
<div style="left:304px;top:564px;width:154px;height:1px;background:#cdcdcd;"></div>
<div style="left:304px;top:543px;width:1px;height:22px;background:#cdcdcd;"></div>
<span style="top:545.5px;line-height:17px;font-size:11px;color:#30c060;left:310.5px;transform:scaleX(0.9225);transform-origin:0 50%;">EX003</span>
<div style="left:304px;top:585px;width:154px;height:1px;background:#cdcdcd;"></div>
<div style="left:304px;top:564px;width:1px;height:22px;background:#cdcdcd;"></div>
<span style="top:566.5px;line-height:17px;font-size:11px;color:#30c060;left:310.5px;transform:scaleX(0.9225);transform-origin:0 50%;">EX004</span>
<div style="left:304px;top:606px;width:154px;height:1px;background:#cdcdcd;"></div>
<div style="left:304px;top:585px;width:1px;height:22px;background:#cdcdcd;"></div>
<span style="top:587.5px;line-height:17px;font-size:11px;color:#30c060;left:310.5px;transform:scaleX(0.9650);transform-origin:0 50%;">CAT994_1</span>
<div style="left:286px;top:627px;width:172px;height:1px;background:#cdcdcd;"></div>
<div style="left:304px;top:606px;width:1px;height:22px;background:#cdcdcd;"></div>
<span style="top:608.5px;line-height:17px;font-size:11px;color:#30c060;left:310.5px;transform:scaleX(0.9650);transform-origin:0 50%;">CAT994_2</span>
<div style="left:286px;top:648px;width:172px;height:1px;background:#cdcdcd;"></div>
<div style="left:286px;top:627px;width:1px;height:22px;background:#cdcdcd;"></div>
<span style="top:629.5px;line-height:17px;font-size:11px;color:#a82818;left:292.5px;transform:scaleX(0.9014);transform-origin:0 50%;">Drills</span>
<div style="left:304px;top:669px;width:154px;height:1px;background:#cdcdcd;"></div>
<div style="left:304px;top:648px;width:1px;height:22px;background:#cdcdcd;"></div>
<span style="top:650.5px;line-height:17px;font-size:11px;color:#c06840;left:310.5px;transform:scaleX(0.9557);transform-origin:0 50%;">D65_1</span>
<div style="left:304px;top:690px;width:154px;height:1px;background:#cdcdcd;"></div>
<div style="left:304px;top:669px;width:1px;height:22px;background:#cdcdcd;"></div>
<span style="top:671.5px;line-height:17px;font-size:11px;color:#c06840;left:310.5px;transform:scaleX(0.9557);transform-origin:0 50%;">D65_2</span>
<div style="left:304px;top:711px;width:154px;height:1px;background:#cdcdcd;"></div>
<div style="left:304px;top:690px;width:1px;height:22px;background:#cdcdcd;"></div>
<span style="top:692.5px;line-height:17px;font-size:11px;color:#c06840;left:310.5px;transform:scaleX(0.9557);transform-origin:0 50%;">D65_3</span>
<div style="left:304px;top:711px;width:154px;height:21px;background:#dedede;"></div>
<div style="left:304px;top:732px;width:154px;height:1px;background:#cdcdcd;"></div>
<div style="left:304px;top:711px;width:1px;height:22px;background:#cdcdcd;"></div>
<span style="top:713.5px;line-height:17px;font-size:11px;color:#c06840;left:310.5px;transform:scaleX(0.9557);transform-origin:0 50%;">D45_1</span>
<div style="left:286px;top:753px;width:172px;height:1px;background:#cdcdcd;"></div>
<div style="left:304px;top:732px;width:1px;height:22px;background:#cdcdcd;"></div>
<span style="top:734.5px;line-height:17px;font-size:11px;color:#c06840;left:310.5px;transform:scaleX(0.9557);transform-origin:0 50%;">D45_2</span>
<div style="left:286px;top:774px;width:172px;height:1px;background:#cdcdcd;"></div>
<div style="left:286px;top:753px;width:1px;height:22px;background:#cdcdcd;"></div>
<span style="top:755.5px;line-height:17px;font-size:11px;color:#3a18c0;left:292.5px;transform:scaleX(0.9345);transform-origin:0 50%;">Bomb Trucks</span>
<div style="left:304px;top:795px;width:154px;height:1px;background:#cdcdcd;"></div>
<div style="left:304px;top:774px;width:1px;height:22px;background:#cdcdcd;"></div>
<span style="top:776.5px;line-height:17px;font-size:11px;color:#6040c8;left:310.5px;transform:scaleX(0.8998);transform-origin:0 50%;">MPU1</span>
<div style="left:304px;top:816px;width:154px;height:1px;background:#cdcdcd;"></div>
<div style="left:304px;top:795px;width:1px;height:22px;background:#cdcdcd;"></div>
<span style="top:797.5px;line-height:17px;font-size:11px;color:#6040c8;left:310.5px;transform:scaleX(0.8998);transform-origin:0 50%;">MPU2</span>
<div style="left:430px;top:418px;width:28px;height:602px;background:linear-gradient(90deg,rgba(225,225,225,0),rgba(225,225,225,.55));"></div>
<div style="left:470px;top:96px;width:131px;height:22px;background:#fff;border:1px solid #b4b4b4;"></div>
<svg style="left:473px;top:99px;" width="16" height="16" viewBox="0 0 16 16"><rect x=".5" y=".5" width="15" height="15" rx="1.2" fill="#f4f6fd" stroke="#6a80c8"/><rect x="3.2" y="3" width="3.6" height="2" rx=".6" fill="#fff" stroke="#d84838" stroke-width=".8"/><rect x="3.2" y="6.8" width="8.6" height="2" rx=".6" fill="#f8c070" stroke="#d84838" stroke-width=".8"/><rect x="3.2" y="10.6" width="5.4" height="2" rx=".6" fill="#e85848" stroke="#d84838" stroke-width=".8"/><rect x="8.8" y="10.4" width="4" height="2.4" rx=".6" fill="#4a78d8"/></svg>
<span style="top:98.7px;line-height:17px;font-size:11px;color:#222;left:491.3px;transform:scaleX(0.9405);transform-origin:0 50%;">MyDisplay</span>
<svg style="left:589px;top:105.5px;" width="7" height="4" viewBox="0 0 7 4"><path d="M0 0h7L3.5 4z" fill="#555"/></svg>
<div style="left:615px;top:96px;width:24px;height:22px;background:#fff;border:1px solid #c6c6c6;"></div>
<svg style="left:619px;top:99px;" width="16" height="16" viewBox="0 0 16 16"><path d="M1 7.6L7.2 2v3.2c5 0 8 2.6 8.2 8.2-1.6-3-4-4.2-8.2-4.2v3.4z" fill="#7ab6f2" stroke="#3a76c8" stroke-width=".8" stroke-linejoin="round"/></svg>
<div style="left:643px;top:96px;width:24px;height:22px;background:#fff;border:1px solid #c6c6c6;"></div>
<svg style="left:647px;top:99px;" width="16" height="16" viewBox="0 0 16 16"><g transform="translate(16,0) scale(-1,1)"><path d="M1 7.6L7.2 2v3.2c5 0 8 2.6 8.2 8.2-1.6-3-4-4.2-8.2-4.2v3.4z" fill="#bdbdbd" stroke="#8e8e8e" stroke-width=".8" stroke-linejoin="round"/></g></svg>
<div style="left:681px;top:96px;width:24px;height:22px;background:#fff;border:1px solid #c6c6c6;"></div>
<svg style="left:685px;top:99px;" width="16" height="16" viewBox="0 0 16 16"><rect x="1.5" y="1.5" width="13" height="13" fill="#e6f0fd" stroke="#5a90d8"/><rect x="11.2" y="1.5" width="3.3" height="13" fill="#a4c6f2" stroke="#5a90d8"/><path d="M3.2 8l3.4-3v2h3v2h-3v2z" fill="#2a72d8"/></svg>
<div style="left:709px;top:96px;width:24px;height:22px;background:#fff;border:1px solid #c6c6c6;"></div>
<svg style="left:713px;top:99px;" width="16" height="16" viewBox="0 0 16 16"><rect x="1.5" y="1.5" width="13" height="13" fill="#e6f0fd" stroke="#5a90d8"/><rect x="1.5" y="1.5" width="3.3" height="13" fill="#a4c6f2" stroke="#5a90d8"/><path d="M12.8 8l-3.4-3v2h-3v2h3v2z" fill="#2a72d8"/></svg>
<div style="left:737px;top:96px;width:24px;height:22px;background:#fff;border:1px solid #c6c6c6;"></div>
<svg style="left:741px;top:99px;" width="16" height="16" viewBox="0 0 16 16"><rect x="6" y="1.5" width="4" height="13" rx="1" fill="#8ac040" stroke="#5a8a20"/><path d="M1 5.6L4 8 1 10.4zM15 5.6L12 8l3 2.4z" fill="#333"/></svg>
<div style="left:775px;top:96px;width:22px;height:22px;background:#fff;border:1px solid #c6c6c6;"></div>
<svg style="left:778px;top:99px;" width="16" height="16" viewBox="0 0 16 16"><rect x="2" y="4.5" width="10" height="10" fill="#fff" stroke="#7a7a9a"/><rect x="3.6" y="7" width="7" height="6" fill="#f0a040"/><path d="M4 12l2-3 1.6 1.6L9.6 8" stroke="#c03020" fill="none"/><path d="M8.6 5.4c1-2.6 3-3.4 4.4-3.4V.8l2.6 2.4L13 5.6V4.2c-1.4 0-2.6.4-4.4 1.2z" fill="#4a86e0" stroke="#2a5ab0" stroke-width=".5"/></svg>
<div style="left:1392px;top:96px;width:24px;height:22px;background:#f4f4f4;border:1px solid #c6c6c6;background:repeating-linear-gradient(135deg,#fff 0 2px,#ececec 2px 3px);"></div>
<svg style="left:1396px;top:99px;" width="17" height="17" viewBox="0 0 17 17"><rect x="1" y="1.5" width="11" height="7.4" rx="1" fill="#fff" stroke="#2a62c8" stroke-width="1.4"/><path d="M4.6 9l3 4 2-4z" fill="#2a62c8"/><path d="M10.2 10V8.6a1.8 1.8 0 0 1 3.6 0V10" fill="none" stroke="#9a9a9a" stroke-width="1.1"/><rect x="9" y="10" width="6" height="5" fill="#f6c860" stroke="#d89a1c" stroke-width=".8"/></svg>
<div style="left:1420px;top:97px;width:11px;height:11px;border-radius:50%;background:#b8b8b8;"></div>
<div style="left:1423px;top:102px;width:5px;height:1.6px;background:#fff;"></div>
<div style="left:1594px;top:97px;width:11px;height:11px;border-radius:50%;background:#b8b8b8;"></div>
<div style="left:1596.5px;top:102px;width:6px;height:1.6px;background:#fff;"></div>
<div style="left:1598.7px;top:99.8px;width:1.6px;height:6px;background:#fff;"></div>
<div style="left:1441px;top:101px;width:147px;height:3px;background:#b6b6b6;border-radius:1.5px;"></div>
<div style="left:1437px;top:98px;width:9px;height:9px;border-radius:50%;background:#1c62d0;"></div>
<div style="left:1509.5px;top:99.5px;width:6px;height:6px;border-radius:50%;background:#b0b0b0;"></div>
<div style="left:470px;top:122px;width:1134px;height:898px;background:#f8f8f8;border:1px solid #b4b4b4;"></div>
<div style="left:473px;top:125px;width:1127px;height:226px;background:#fff;border:1px solid #b4b4b4;"></div>
<svg style="left:525px;top:128px;" width="1074" height="9" viewBox="0 0 1074 9"><defs><pattern id="gs" width="6" height="9" patternUnits="userSpaceOnUse"><rect width="6" height="9" fill="#a8a8a8"/><rect x="2" width="1" height="9" fill="#c4c4c4"/><rect x="4.5" width=".8" height="9" fill="#bcbcbc"/></pattern><pattern id="yh" width="5" height="5" patternUnits="userSpaceOnUse" patternTransform="rotate(-40)"><rect width="5" height="5" fill="#ffff00"/><rect width="5" height="1.2" fill="#000"/></pattern><pattern id="wh" width="5" height="5" patternUnits="userSpaceOnUse" patternTransform="rotate(-40)"><rect width="5" height="5" fill="#fff"/><rect width="5" height="1.2" fill="#000"/></pattern></defs><rect x="0" y="0" width="1074" height="9" fill="url(#gs)"/><rect x="21.3" y="0" width="2.81" height="9" fill="url(#yh)"/><rect x="92.5" y="0" width="1.50" height="9" fill="url(#yh)"/><rect x="112.2" y="0" width="4.69" height="9" fill="url(#yh)"/><rect x="124.4" y="0" width="5.63" height="9" fill="url(#yh)"/><rect x="138.4" y="0" width="6.56" height="9" fill="url(#yh)"/><rect x="148.8" y="0" width="7.50" height="9" fill="url(#yh)"/><rect x="167.5" y="0" width="4.69" height="9" fill="url(#yh)"/><rect x="182.5" y="0" width="3.75" height="9" fill="url(#yh)"/><rect x="200.3" y="0" width="3.75" height="9" fill="url(#yh)"/><rect x="206.9" y="0" width="1.88" height="9" fill="url(#yh)"/><rect x="213.4" y="0" width="3.75" height="9" fill="url(#yh)"/><rect x="220.9" y="0" width="6.56" height="9" fill="url(#yh)"/><rect x="230.3" y="0" width="3.75" height="9" fill="url(#yh)"/><rect x="236.9" y="0" width="8.44" height="9" fill="url(#yh)"/><rect x="340.0" y="0" width="1.88" height="9" fill="url(#yh)"/><rect x="57.8" y="0" width="6.56" height="9" fill="url(#wh)"/><rect x="304.4" y="0" width="7.50" height="9" fill="url(#wh)"/><rect x="325.9" y="0" width="7.50" height="9" fill="url(#wh)"/><rect x="78.1" y="0" width="1.31" height="9" fill="#000"/><rect x="118.8" y="0" width="2.25" height="9" fill="#000"/><rect x="136.6" y="0" width="2.81" height="9" fill="#000"/><rect x="147.8" y="0" width="2.81" height="9" fill="#000"/><rect x="212.5" y="0" width="1.88" height="9" fill="#000"/><rect x="11.0" y="0" width="1.15" height="9" fill="#f00000"/><rect x="14.0" y="0" width="1.15" height="9" fill="#f00000"/><rect x="28.0" y="0" width="1.15" height="9" fill="#f00000"/><rect x="31.0" y="0" width="1.15" height="9" fill="#f00000"/><rect x="41.0" y="0" width="1.15" height="9" fill="#f00000"/><rect x="51.0" y="0" width="1.15" height="9" fill="#f00000"/><rect x="56.0" y="0" width="1.15" height="9" fill="#f00000"/><rect x="85.0" y="0" width="1.15" height="9" fill="#f00000"/><rect x="100.0" y="0" width="1.15" height="9" fill="#f00000"/><rect x="108.0" y="0" width="1.15" height="9" fill="#f00000"/><rect x="113.0" y="0" width="1.15" height="9" fill="#f00000"/><rect x="122.0" y="0" width="1.15" height="9" fill="#f00000"/><rect x="141.0" y="0" width="1.15" height="9" fill="#f00000"/><rect x="144.0" y="0" width="1.15" height="9" fill="#f00000"/><rect x="155.0" y="0" width="1.15" height="9" fill="#f00000"/><rect x="164.0" y="0" width="1.15" height="9" fill="#f00000"/><rect x="214.0" y="0" width="1.15" height="9" fill="#f00000"/><rect x="218.0" y="0" width="1.15" height="9" fill="#f00000"/><rect x="231.0" y="0" width="1.15" height="9" fill="#f00000"/><rect x="239.0" y="0" width="1.15" height="9" fill="#f00000"/><rect x="248.0" y="0" width="1.15" height="9" fill="#f00000"/><rect x="274.0" y="0" width="1.15" height="9" fill="#f00000"/><rect x="300.0" y="0" width="1.15" height="9" fill="#f00000"/><rect x="314.0" y="0" width="1.15" height="9" fill="#f00000"/><rect x="335.0" y="0" width="1.15" height="9" fill="#f00000"/><rect x="338.0" y="0" width="1.15" height="9" fill="#f00000"/><rect x="348.0" y="0" width="1.15" height="9" fill="#f00000"/><rect x="76.8" y="0" width="1.88" height="9" fill="#f00000"/><rect x="188.5" y="0" width="1.88" height="9" fill="#f00000"/><rect x="395.9" y="0" width="1.13" height="9" fill="url(#yh)"/><rect x="477.8" y="0" width="6.56" height="9" fill="url(#yh)"/><rect x="492.8" y="0" width="5.63" height="9" fill="url(#yh)"/><rect x="510.6" y="0" width="1.88" height="9" fill="url(#yh)"/><rect x="523.8" y="0" width="2.81" height="9" fill="url(#yh)"/><rect x="549.1" y="0" width="8.44" height="9" fill="url(#yh)"/><rect x="558.4" y="0" width="3.75" height="9" fill="url(#yh)"/><rect x="568.8" y="0" width="11.25" height="9" fill="url(#yh)"/><rect x="598.8" y="0" width="15.00" height="9" fill="url(#yh)"/><rect x="621.3" y="0" width="3.75" height="9" fill="url(#yh)"/><rect x="632.5" y="0" width="6.56" height="9" fill="url(#yh)"/><rect x="640.9" y="0" width="4.69" height="9" fill="url(#yh)"/><rect x="648.4" y="0" width="4.69" height="9" fill="url(#yh)"/><rect x="656.9" y="0" width="5.63" height="9" fill="url(#yh)"/><rect x="678.4" y="0" width="6.56" height="9" fill="url(#yh)"/><rect x="692.5" y="0" width="8.44" height="9" fill="url(#yh)"/><rect x="705.6" y="0" width="9.38" height="9" fill="url(#yh)"/><rect x="520.0" y="0" width="4.13" height="9" fill="url(#wh)"/><rect x="465.6" y="0" width="2.81" height="9" fill="#000"/><rect x="501.3" y="0" width="1.88" height="9" fill="#000"/><rect x="581.9" y="0" width="2.81" height="9" fill="#000"/><rect x="594.1" y="0" width="2.81" height="9" fill="#000"/><rect x="613.8" y="0" width="2.81" height="9" fill="#000"/><rect x="617.5" y="0" width="3.75" height="9" fill="#000"/><rect x="627.8" y="0" width="1.88" height="9" fill="#000"/><rect x="645.6" y="0" width="2.81" height="9" fill="#000"/><rect x="653.1" y="0" width="3.75" height="9" fill="#000"/><rect x="662.5" y="0" width="3.75" height="9" fill="#000"/><rect x="670.0" y="0" width="3.75" height="9" fill="#000"/><rect x="675.6" y="0" width="2.81" height="9" fill="#000"/><rect x="688.8" y="0" width="2.81" height="9" fill="#000"/><rect x="378.0" y="0" width="1.15" height="9" fill="#f00000"/><rect x="408.0" y="0" width="1.15" height="9" fill="#f00000"/><rect x="433.0" y="0" width="1.15" height="9" fill="#f00000"/><rect x="456.0" y="0" width="1.15" height="9" fill="#f00000"/><rect x="462.0" y="0" width="1.15" height="9" fill="#f00000"/><rect x="477.0" y="0" width="1.15" height="9" fill="#f00000"/><rect x="480.0" y="0" width="1.15" height="9" fill="#f00000"/><rect x="515.0" y="0" width="1.15" height="9" fill="#f00000"/><rect x="530.0" y="0" width="1.15" height="9" fill="#f00000"/><rect x="563.0" y="0" width="1.15" height="9" fill="#f00000"/><rect x="569.0" y="0" width="1.15" height="9" fill="#f00000"/><rect x="580.0" y="0" width="1.15" height="9" fill="#f00000"/><rect x="604.0" y="0" width="1.15" height="9" fill="#f00000"/><rect x="624.0" y="0" width="1.15" height="9" fill="#f00000"/><rect x="640.0" y="0" width="1.15" height="9" fill="#f00000"/><rect x="469.0" y="0" width="1.88" height="9" fill="#f00000"/><rect x="588.4" y="0" width="1.88" height="9" fill="#f00000"/><rect x="715.0" y="0" width="357.19" height="9" fill="url(#yh)"/><rect x="757.2" y="0" width="11.25" height="9" fill="url(#gs)"/><rect x="792.8" y="0" width="3.75" height="9" fill="url(#gs)"/><rect x="809.7" y="0" width="4.69" height="9" fill="url(#gs)"/><rect x="915.6" y="0" width="2.81" height="9" fill="url(#gs)"/><rect x="967.2" y="0" width="6.56" height="9" fill="url(#gs)"/><rect x="985.0" y="0" width="6.56" height="9" fill="url(#gs)"/><rect x="1014.1" y="0" width="4.69" height="9" fill="url(#gs)"/><rect x="1026.3" y="0" width="7.50" height="9" fill="url(#gs)"/><rect x="1043.1" y="0" width="3.75" height="9" fill="url(#gs)"/><rect x="1056.3" y="0" width="7.50" height="9" fill="url(#gs)"/><rect x="745.0" y="0" width="5.63" height="9" fill="url(#wh)"/><rect x="861.3" y="0" width="3.75" height="9" fill="url(#wh)"/><rect x="996.3" y="0" width="7.50" height="9" fill="url(#wh)"/><rect x="718.8" y="0" width="1.88" height="9" fill="#000"/><rect x="740.3" y="0" width="2.81" height="9" fill="#000"/><rect x="769.4" y="0" width="1.88" height="9" fill="#000"/><rect x="775.9" y="0" width="1.88" height="9" fill="#000"/><rect x="782.5" y="0" width="2.81" height="9" fill="#000"/><rect x="787.2" y="0" width="2.81" height="9" fill="#000"/><rect x="816.3" y="0" width="1.88" height="9" fill="#000"/><rect x="829.4" y="0" width="2.81" height="9" fill="#000"/><rect x="835.9" y="0" width="2.81" height="9" fill="#000"/><rect x="910.0" y="0" width="2.81" height="9" fill="#000"/><rect x="940.9" y="0" width="2.81" height="9" fill="#000"/><rect x="961.6" y="0" width="4.69" height="9" fill="#000"/><rect x="975.6" y="0" width="3.75" height="9" fill="#000"/><rect x="1016.9" y="0" width="1.88" height="9" fill="#000"/><rect x="1034.7" y="0" width="1.88" height="9" fill="#000"/><rect x="1052.5" y="0" width="2.25" height="9" fill="#000"/><rect x="1070.3" y="0" width="1.88" height="9" fill="#000"/><rect x="1072.2" y="0" width="10" height="9" fill="#fff"/></svg>
<div style="left:525px;top:138px;width:1074px;height:21px;background:linear-gradient(#fdfdfd,#efefef);border-bottom:1px solid #d0d0d0;"></div>
<div style="left:1431px;top:138px;width:1px;height:21px;background:#c8c8c8;"></div>
<div style="left:525px;top:159px;width:1074px;height:20px;background:linear-gradient(#fdfdfd,#ececec);border-bottom:1px solid #d0d0d0;"></div>
<div style="left:525px;top:179px;width:1074px;height:18px;background:linear-gradient(#fdfdfd,#ececec);"></div>
<div style="left:525px;top:126px;width:1074px;height:80px;overflow:hidden;">
<span style="top:13.8px;line-height:17px;font-size:11px;color:#333;left:1.5px;font-family:'DejaVu Sans','Liberation Sans',sans-serif;transform:scaleX(1.0526);transform-origin:0 50%;">Jan 2020</span>
<span style="top:13.8px;line-height:17px;font-size:11px;color:#333;left:908px;font-family:'DejaVu Sans','Liberation Sans',sans-serif;transform:scaleX(1.0101);transform-origin:0 50%;">Feb 2020</span>
<span style="top:33.5px;line-height:17px;font-size:11px;color:#333;left:1.7999999999999545px;font-family:'DejaVu Sans','Liberation Sans',sans-serif;transform:scaleX(0.9286);transform-origin:0 50%;">06</span>
<div style="left:26px;top:33px;width:1px;height:20px;background:#cbcbcb;"></div>
<span style="top:33.5px;line-height:17px;font-size:11px;color:#333;left:28.399999999999977px;font-family:'DejaVu Sans','Liberation Sans',sans-serif;transform:scaleX(0.9286);transform-origin:0 50%;">07</span>
<div style="left:62px;top:33px;width:1px;height:20px;background:#cbcbcb;"></div>
<span style="top:33.5px;line-height:17px;font-size:11px;color:#333;left:63.60000000000002px;font-family:'DejaVu Sans','Liberation Sans',sans-serif;transform:scaleX(0.9286);transform-origin:0 50%;">08</span>
<div style="left:97px;top:33px;width:1px;height:20px;background:#cbcbcb;"></div>
<span style="top:33.5px;line-height:17px;font-size:11px;color:#333;left:98.79999999999995px;font-family:'DejaVu Sans','Liberation Sans',sans-serif;transform:scaleX(0.9286);transform-origin:0 50%;">09</span>
<div style="left:132px;top:33px;width:1px;height:20px;background:#cbcbcb;"></div>
<span style="top:33.5px;line-height:17px;font-size:11px;color:#333;left:134.0px;font-family:'DejaVu Sans','Liberation Sans',sans-serif;transform:scaleX(0.9286);transform-origin:0 50%;">10</span>
<div style="left:167px;top:33px;width:1px;height:20px;background:#cbcbcb;"></div>
<span style="top:33.5px;line-height:17px;font-size:11px;color:#333;left:169.20000000000005px;font-family:'DejaVu Sans','Liberation Sans',sans-serif;transform:scaleX(0.9286);transform-origin:0 50%;">11</span>
<div style="left:202px;top:33px;width:1px;height:20px;background:#cbcbcb;"></div>
<span style="top:33.5px;line-height:17px;font-size:11px;color:#333;left:204.39999999999998px;font-family:'DejaVu Sans','Liberation Sans',sans-serif;transform:scaleX(0.9286);transform-origin:0 50%;">12</span>
<div style="left:238px;top:33px;width:1px;height:20px;background:#cbcbcb;"></div>
<span style="top:33.5px;line-height:17px;font-size:11px;color:#333;left:239.60000000000002px;font-family:'DejaVu Sans','Liberation Sans',sans-serif;transform:scaleX(0.9286);transform-origin:0 50%;">13</span>
<div style="left:273px;top:33px;width:1px;height:20px;background:#cbcbcb;"></div>
<span style="top:33.5px;line-height:17px;font-size:11px;color:#333;left:274.79999999999995px;font-family:'DejaVu Sans','Liberation Sans',sans-serif;transform:scaleX(0.9286);transform-origin:0 50%;">14</span>
<div style="left:308px;top:33px;width:1px;height:20px;background:#cbcbcb;"></div>
<span style="top:33.5px;line-height:17px;font-size:11px;color:#333;left:310.0px;font-family:'DejaVu Sans','Liberation Sans',sans-serif;transform:scaleX(0.9286);transform-origin:0 50%;">15</span>
<div style="left:343px;top:33px;width:1px;height:20px;background:#cbcbcb;"></div>
<span style="top:33.5px;line-height:17px;font-size:11px;color:#333;left:345.20000000000005px;font-family:'DejaVu Sans','Liberation Sans',sans-serif;transform:scaleX(0.9286);transform-origin:0 50%;">16</span>
<div style="left:378px;top:33px;width:1px;height:20px;background:#cbcbcb;"></div>
<span style="top:33.5px;line-height:17px;font-size:11px;color:#333;left:380.4px;font-family:'DejaVu Sans','Liberation Sans',sans-serif;transform:scaleX(0.9286);transform-origin:0 50%;">17</span>
<div style="left:414px;top:33px;width:1px;height:20px;background:#cbcbcb;"></div>
<span style="top:33.5px;line-height:17px;font-size:11px;color:#333;left:415.6px;font-family:'DejaVu Sans','Liberation Sans',sans-serif;transform:scaleX(0.9286);transform-origin:0 50%;">18</span>
<div style="left:449px;top:33px;width:1px;height:20px;background:#cbcbcb;"></div>
<span style="top:33.5px;line-height:17px;font-size:11px;color:#333;left:450.79999999999995px;font-family:'DejaVu Sans','Liberation Sans',sans-serif;transform:scaleX(0.9286);transform-origin:0 50%;">19</span>
<div style="left:484px;top:33px;width:1px;height:20px;background:#cbcbcb;"></div>
<span style="top:33.5px;line-height:17px;font-size:11px;color:#333;left:486.0px;font-family:'DejaVu Sans','Liberation Sans',sans-serif;transform:scaleX(0.9286);transform-origin:0 50%;">20</span>
<div style="left:519px;top:33px;width:1px;height:20px;background:#cbcbcb;"></div>
<span style="top:33.5px;line-height:17px;font-size:11px;color:#333;left:521.2px;font-family:'DejaVu Sans','Liberation Sans',sans-serif;transform:scaleX(0.9286);transform-origin:0 50%;">21</span>
<div style="left:554px;top:33px;width:1px;height:20px;background:#cbcbcb;"></div>
<span style="top:33.5px;line-height:17px;font-size:11px;color:#333;left:556.4000000000001px;font-family:'DejaVu Sans','Liberation Sans',sans-serif;transform:scaleX(0.9286);transform-origin:0 50%;">22</span>
<div style="left:590px;top:33px;width:1px;height:20px;background:#cbcbcb;"></div>
<span style="top:33.5px;line-height:17px;font-size:11px;color:#333;left:591.5999999999999px;font-family:'DejaVu Sans','Liberation Sans',sans-serif;transform:scaleX(0.9286);transform-origin:0 50%;">23</span>
<div style="left:625px;top:33px;width:1px;height:20px;background:#cbcbcb;"></div>
<span style="top:33.5px;line-height:17px;font-size:11px;color:#333;left:626.8000000000002px;font-family:'DejaVu Sans','Liberation Sans',sans-serif;transform:scaleX(0.9286);transform-origin:0 50%;">24</span>
<div style="left:660px;top:33px;width:1px;height:20px;background:#cbcbcb;"></div>
<span style="top:33.5px;line-height:17px;font-size:11px;color:#333;left:662.0px;font-family:'DejaVu Sans','Liberation Sans',sans-serif;transform:scaleX(0.9286);transform-origin:0 50%;">25</span>
<div style="left:695px;top:33px;width:1px;height:20px;background:#cbcbcb;"></div>
<span style="top:33.5px;line-height:17px;font-size:11px;color:#333;left:697.2px;font-family:'DejaVu Sans','Liberation Sans',sans-serif;transform:scaleX(0.9286);transform-origin:0 50%;">26</span>
<div style="left:730px;top:33px;width:1px;height:20px;background:#cbcbcb;"></div>
<span style="top:33.5px;line-height:17px;font-size:11px;color:#333;left:732.4000000000001px;font-family:'DejaVu Sans','Liberation Sans',sans-serif;transform:scaleX(0.9286);transform-origin:0 50%;">27</span>
<div style="left:766px;top:33px;width:1px;height:20px;background:#cbcbcb;"></div>
<span style="top:33.5px;line-height:17px;font-size:11px;color:#333;left:767.5999999999999px;font-family:'DejaVu Sans','Liberation Sans',sans-serif;transform:scaleX(0.9286);transform-origin:0 50%;">28</span>
<div style="left:801px;top:33px;width:1px;height:20px;background:#cbcbcb;"></div>
<span style="top:33.5px;line-height:17px;font-size:11px;color:#333;left:802.8000000000002px;font-family:'DejaVu Sans','Liberation Sans',sans-serif;transform:scaleX(0.9286);transform-origin:0 50%;">29</span>
<div style="left:836px;top:33px;width:1px;height:20px;background:#cbcbcb;"></div>
<span style="top:33.5px;line-height:17px;font-size:11px;color:#333;left:838.0px;font-family:'DejaVu Sans','Liberation Sans',sans-serif;transform:scaleX(0.9286);transform-origin:0 50%;">30</span>
<div style="left:871px;top:33px;width:1px;height:20px;background:#cbcbcb;"></div>
<span style="top:33.5px;line-height:17px;font-size:11px;color:#333;left:873.2px;font-family:'DejaVu Sans','Liberation Sans',sans-serif;transform:scaleX(0.9286);transform-origin:0 50%;">31</span>
<div style="left:906px;top:33px;width:1px;height:20px;background:#cbcbcb;"></div>
<span style="top:33.5px;line-height:17px;font-size:11px;color:#333;left:908.4000000000001px;font-family:'DejaVu Sans','Liberation Sans',sans-serif;transform:scaleX(0.9286);transform-origin:0 50%;">01</span>
<div style="left:942px;top:33px;width:1px;height:20px;background:#cbcbcb;"></div>
<span style="top:33.5px;line-height:17px;font-size:11px;color:#333;left:943.5999999999999px;font-family:'DejaVu Sans','Liberation Sans',sans-serif;transform:scaleX(0.9286);transform-origin:0 50%;">02</span>
<div style="left:977px;top:33px;width:1px;height:20px;background:#cbcbcb;"></div>
<span style="top:33.5px;line-height:17px;font-size:11px;color:#333;left:978.8000000000002px;font-family:'DejaVu Sans','Liberation Sans',sans-serif;transform:scaleX(0.9286);transform-origin:0 50%;">03</span>
<div style="left:1012px;top:33px;width:1px;height:20px;background:#cbcbcb;"></div>
<span style="top:33.5px;line-height:17px;font-size:11px;color:#333;left:1014.0px;font-family:'DejaVu Sans','Liberation Sans',sans-serif;transform:scaleX(0.9286);transform-origin:0 50%;">04</span>
<div style="left:1047px;top:33px;width:1px;height:20px;background:#cbcbcb;"></div>
<span style="top:33.5px;line-height:17px;font-size:11px;color:#333;left:1049.2px;font-family:'DejaVu Sans','Liberation Sans',sans-serif;transform:scaleX(0.9286);transform-origin:0 50%;">05</span>
<span style="top:53.5px;line-height:17px;font-size:11px;color:#000;left:2.5px;font-family:'DejaVu Sans','Liberation Sans',sans-serif;transform:scaleX(0.9810);transform-origin:0 50%;">1:</span>
<div style="left:17px;top:53px;width:1px;height:18px;background:#d0d0d0;"></div>
<span style="top:53.5px;line-height:17px;font-size:11px;color:#000;left:20.100000000000023px;font-family:'DejaVu Sans','Liberation Sans',sans-serif;transform:scaleX(0.9810);transform-origin:0 50%;">2:</span>
<div style="left:35px;top:53px;width:1px;height:18px;background:#d0d0d0;"></div>
<span style="top:53.5px;line-height:17px;font-size:11px;color:#000;left:37.700000000000045px;font-family:'DejaVu Sans','Liberation Sans',sans-serif;transform:scaleX(0.9810);transform-origin:0 50%;">3:</span>
<div style="left:53px;top:53px;width:1px;height:18px;background:#d0d0d0;"></div>
<span style="top:53.5px;line-height:17px;font-size:11px;color:#000;left:55.299999999999955px;font-family:'DejaVu Sans','Liberation Sans',sans-serif;transform:scaleX(0.9810);transform-origin:0 50%;">4:</span>
<div style="left:70px;top:53px;width:1px;height:18px;background:#d0d0d0;"></div>
<span style="top:53.5px;line-height:17px;font-size:11px;color:#000;left:72.89999999999998px;font-family:'DejaVu Sans','Liberation Sans',sans-serif;transform:scaleX(0.9810);transform-origin:0 50%;">5:</span>
<div style="left:88px;top:53px;width:1px;height:18px;background:#d0d0d0;"></div>
<span style="top:53.5px;line-height:17px;font-size:11px;color:#000;left:90.5px;font-family:'DejaVu Sans','Liberation Sans',sans-serif;transform:scaleX(0.9810);transform-origin:0 50%;">6:</span>
<div style="left:105px;top:53px;width:1px;height:18px;background:#d0d0d0;"></div>
<span style="top:53.5px;line-height:17px;font-size:11px;color:#000;left:108.10000000000002px;font-family:'DejaVu Sans','Liberation Sans',sans-serif;transform:scaleX(0.9810);transform-origin:0 50%;">7:</span>
<div style="left:123px;top:53px;width:1px;height:18px;background:#d0d0d0;"></div>
<span style="top:53.5px;line-height:17px;font-size:11px;color:#000;left:125.70000000000005px;font-family:'DejaVu Sans','Liberation Sans',sans-serif;transform:scaleX(0.9810);transform-origin:0 50%;">8:</span>
<div style="left:141px;top:53px;width:1px;height:18px;background:#d0d0d0;"></div>
<span style="top:53.5px;line-height:17px;font-size:11px;color:#000;left:143.29999999999995px;font-family:'DejaVu Sans','Liberation Sans',sans-serif;transform:scaleX(0.9810);transform-origin:0 50%;">9:</span>
<div style="left:158px;top:53px;width:1px;height:18px;background:#d0d0d0;"></div>
<span style="top:53.5px;line-height:17px;font-size:11px;color:#000;left:159.70000000000005px;font-family:'DejaVu Sans','Liberation Sans',sans-serif;transform:scaleX(0.9143);transform-origin:0 50%;">10</span>
<div style="left:176px;top:53px;width:1px;height:18px;background:#d0d0d0;"></div>
<span style="top:53.5px;line-height:17px;font-size:11px;color:#000;left:177.30000000000007px;font-family:'DejaVu Sans','Liberation Sans',sans-serif;transform:scaleX(0.9143);transform-origin:0 50%;">11</span>
<div style="left:193px;top:53px;width:1px;height:18px;background:#d0d0d0;"></div>
<span style="top:53.5px;line-height:17px;font-size:11px;color:#000;left:194.9000000000001px;font-family:'DejaVu Sans','Liberation Sans',sans-serif;transform:scaleX(0.9143);transform-origin:0 50%;">12</span>
<div style="left:211px;top:53px;width:1px;height:18px;background:#d0d0d0;"></div>
<span style="top:53.5px;line-height:17px;font-size:11px;color:#000;left:212.5000000000001px;font-family:'DejaVu Sans','Liberation Sans',sans-serif;transform:scaleX(0.9143);transform-origin:0 50%;">13</span>
<div style="left:229px;top:53px;width:1px;height:18px;background:#d0d0d0;"></div>
<span style="top:53.5px;line-height:17px;font-size:11px;color:#000;left:230.10000000000002px;font-family:'DejaVu Sans','Liberation Sans',sans-serif;transform:scaleX(0.9143);transform-origin:0 50%;">14</span>
<div style="left:246px;top:53px;width:1px;height:18px;background:#d0d0d0;"></div>
<span style="top:53.5px;line-height:17px;font-size:11px;color:#000;left:247.70000000000016px;font-family:'DejaVu Sans','Liberation Sans',sans-serif;transform:scaleX(0.9143);transform-origin:0 50%;">15</span>
<div style="left:264px;top:53px;width:1px;height:18px;background:#d0d0d0;"></div>
<span style="top:53.5px;line-height:17px;font-size:11px;color:#000;left:265.30000000000007px;font-family:'DejaVu Sans','Liberation Sans',sans-serif;transform:scaleX(0.9143);transform-origin:0 50%;">16</span>
<div style="left:281px;top:53px;width:1px;height:18px;background:#d0d0d0;"></div>
<span style="top:53.5px;line-height:17px;font-size:11px;color:#000;left:282.9000000000001px;font-family:'DejaVu Sans','Liberation Sans',sans-serif;transform:scaleX(0.9143);transform-origin:0 50%;">17</span>
<div style="left:299px;top:53px;width:1px;height:18px;background:#d0d0d0;"></div>
<span style="top:53.5px;line-height:17px;font-size:11px;color:#000;left:300.5000000000001px;font-family:'DejaVu Sans','Liberation Sans',sans-serif;transform:scaleX(0.9143);transform-origin:0 50%;">18</span>
<div style="left:317px;top:53px;width:1px;height:18px;background:#d0d0d0;"></div>
<span style="top:53.5px;line-height:17px;font-size:11px;color:#000;left:318.1px;font-family:'DejaVu Sans','Liberation Sans',sans-serif;transform:scaleX(0.9143);transform-origin:0 50%;">19</span>
<div style="left:334px;top:53px;width:1px;height:18px;background:#d0d0d0;"></div>
<span style="top:53.5px;line-height:17px;font-size:11px;color:#000;left:335.70000000000016px;font-family:'DejaVu Sans','Liberation Sans',sans-serif;transform:scaleX(0.9143);transform-origin:0 50%;">20</span>
<div style="left:352px;top:53px;width:1px;height:18px;background:#d0d0d0;"></div>
<span style="top:53.5px;line-height:17px;font-size:11px;color:#000;left:353.30000000000007px;font-family:'DejaVu Sans','Liberation Sans',sans-serif;transform:scaleX(0.9143);transform-origin:0 50%;">21</span>
<div style="left:369px;top:53px;width:1px;height:18px;background:#d0d0d0;"></div>
<span style="top:53.5px;line-height:17px;font-size:11px;color:#000;left:370.9000000000001px;font-family:'DejaVu Sans','Liberation Sans',sans-serif;transform:scaleX(0.9143);transform-origin:0 50%;">22</span>
<div style="left:387px;top:53px;width:1px;height:18px;background:#d0d0d0;"></div>
<span style="top:53.5px;line-height:17px;font-size:11px;color:#000;left:388.5000000000001px;font-family:'DejaVu Sans','Liberation Sans',sans-serif;transform:scaleX(0.9143);transform-origin:0 50%;">23</span>
<div style="left:405px;top:53px;width:1px;height:18px;background:#d0d0d0;"></div>
<span style="top:53.5px;line-height:17px;font-size:11px;color:#000;left:406.1px;font-family:'DejaVu Sans','Liberation Sans',sans-serif;transform:scaleX(0.9143);transform-origin:0 50%;">24</span>
<div style="left:422px;top:53px;width:1px;height:18px;background:#d0d0d0;"></div>
<span style="top:53.5px;line-height:17px;font-size:11px;color:#000;left:423.70000000000016px;font-family:'DejaVu Sans','Liberation Sans',sans-serif;transform:scaleX(0.9143);transform-origin:0 50%;">25</span>
<div style="left:440px;top:53px;width:1px;height:18px;background:#d0d0d0;"></div>
<span style="top:53.5px;line-height:17px;font-size:11px;color:#000;left:441.30000000000007px;font-family:'DejaVu Sans','Liberation Sans',sans-serif;transform:scaleX(0.9143);transform-origin:0 50%;">26</span>
<div style="left:457px;top:53px;width:1px;height:18px;background:#d0d0d0;"></div>
<span style="top:53.5px;line-height:17px;font-size:11px;color:#000;left:458.9000000000001px;font-family:'DejaVu Sans','Liberation Sans',sans-serif;transform:scaleX(0.9143);transform-origin:0 50%;">27</span>
<div style="left:475px;top:53px;width:1px;height:18px;background:#d0d0d0;"></div>
<span style="top:53.5px;line-height:17px;font-size:11px;color:#000;left:476.5000000000001px;font-family:'DejaVu Sans','Liberation Sans',sans-serif;transform:scaleX(0.9143);transform-origin:0 50%;">28</span>
<div style="left:493px;top:53px;width:1px;height:18px;background:#d0d0d0;"></div>
<span style="top:53.5px;line-height:17px;font-size:11px;color:#000;left:494.10000000000014px;font-family:'DejaVu Sans','Liberation Sans',sans-serif;transform:scaleX(0.9143);transform-origin:0 50%;">29</span>
<div style="left:510px;top:53px;width:1px;height:18px;background:#d0d0d0;"></div>
<span style="top:53.5px;line-height:17px;font-size:11px;color:#000;left:511.70000000000005px;font-family:'DejaVu Sans','Liberation Sans',sans-serif;transform:scaleX(0.9143);transform-origin:0 50%;">30</span>
<div style="left:528px;top:53px;width:1px;height:18px;background:#d0d0d0;"></div>
<span style="top:53.5px;line-height:17px;font-size:11px;color:#000;left:529.3px;font-family:'DejaVu Sans','Liberation Sans',sans-serif;transform:scaleX(0.9143);transform-origin:0 50%;">31</span>
<div style="left:545px;top:53px;width:1px;height:18px;background:#d0d0d0;"></div>
<span style="top:53.5px;line-height:17px;font-size:11px;color:#000;left:546.9000000000001px;font-family:'DejaVu Sans','Liberation Sans',sans-serif;transform:scaleX(0.9143);transform-origin:0 50%;">32</span>
<div style="left:563px;top:53px;width:1px;height:18px;background:#d0d0d0;"></div>
<span style="top:53.5px;line-height:17px;font-size:11px;color:#000;left:564.5px;font-family:'DejaVu Sans','Liberation Sans',sans-serif;transform:scaleX(0.9143);transform-origin:0 50%;">33</span>
<div style="left:581px;top:53px;width:1px;height:18px;background:#d0d0d0;"></div>
<span style="top:53.5px;line-height:17px;font-size:11px;color:#000;left:582.0999999999999px;font-family:'DejaVu Sans','Liberation Sans',sans-serif;transform:scaleX(0.9143);transform-origin:0 50%;">34</span>
<div style="left:598px;top:53px;width:1px;height:18px;background:#d0d0d0;"></div>
<span style="top:53.5px;line-height:17px;font-size:11px;color:#000;left:599.7px;font-family:'DejaVu Sans','Liberation Sans',sans-serif;transform:scaleX(0.9143);transform-origin:0 50%;">35</span>
<div style="left:616px;top:53px;width:1px;height:18px;background:#d0d0d0;"></div>
<span style="top:53.5px;line-height:17px;font-size:11px;color:#000;left:617.3px;font-family:'DejaVu Sans','Liberation Sans',sans-serif;transform:scaleX(0.9143);transform-origin:0 50%;">36</span>
<div style="left:633px;top:53px;width:1px;height:18px;background:#d0d0d0;"></div>
<span style="top:53.5px;line-height:17px;font-size:11px;color:#000;left:634.9000000000001px;font-family:'DejaVu Sans','Liberation Sans',sans-serif;transform:scaleX(0.9143);transform-origin:0 50%;">37</span>
<div style="left:651px;top:53px;width:1px;height:18px;background:#d0d0d0;"></div>
<span style="top:53.5px;line-height:17px;font-size:11px;color:#000;left:652.5px;font-family:'DejaVu Sans','Liberation Sans',sans-serif;transform:scaleX(0.9143);transform-origin:0 50%;">38</span>
<div style="left:669px;top:53px;width:1px;height:18px;background:#d0d0d0;"></div>
<span style="top:53.5px;line-height:17px;font-size:11px;color:#000;left:670.0999999999999px;font-family:'DejaVu Sans','Liberation Sans',sans-serif;transform:scaleX(0.9143);transform-origin:0 50%;">39</span>
<div style="left:686px;top:53px;width:1px;height:18px;background:#d0d0d0;"></div>
<span style="top:53.5px;line-height:17px;font-size:11px;color:#000;left:687.7px;font-family:'DejaVu Sans','Liberation Sans',sans-serif;transform:scaleX(0.9143);transform-origin:0 50%;">40</span>
<div style="left:704px;top:53px;width:1px;height:18px;background:#d0d0d0;"></div>
<span style="top:53.5px;line-height:17px;font-size:11px;color:#000;left:705.3px;font-family:'DejaVu Sans','Liberation Sans',sans-serif;transform:scaleX(0.9143);transform-origin:0 50%;">41</span>
<div style="left:721px;top:53px;width:1px;height:18px;background:#d0d0d0;"></div>
<span style="top:53.5px;line-height:17px;font-size:11px;color:#000;left:722.9000000000001px;font-family:'DejaVu Sans','Liberation Sans',sans-serif;transform:scaleX(0.9143);transform-origin:0 50%;">42</span>
<div style="left:739px;top:53px;width:1px;height:18px;background:#d0d0d0;"></div>
<span style="top:53.5px;line-height:17px;font-size:11px;color:#000;left:740.5px;font-family:'DejaVu Sans','Liberation Sans',sans-serif;transform:scaleX(0.9143);transform-origin:0 50%;">43</span>
<div style="left:757px;top:53px;width:1px;height:18px;background:#d0d0d0;"></div>
<span style="top:53.5px;line-height:17px;font-size:11px;color:#000;left:758.0999999999999px;font-family:'DejaVu Sans','Liberation Sans',sans-serif;transform:scaleX(0.9143);transform-origin:0 50%;">44</span>
<div style="left:774px;top:53px;width:1px;height:18px;background:#d0d0d0;"></div>
<span style="top:53.5px;line-height:17px;font-size:11px;color:#000;left:775.7px;font-family:'DejaVu Sans','Liberation Sans',sans-serif;transform:scaleX(0.9143);transform-origin:0 50%;">45</span>
<div style="left:792px;top:53px;width:1px;height:18px;background:#d0d0d0;"></div>
<span style="top:53.5px;line-height:17px;font-size:11px;color:#000;left:793.3000000000002px;font-family:'DejaVu Sans','Liberation Sans',sans-serif;transform:scaleX(0.9143);transform-origin:0 50%;">46</span>
<div style="left:809px;top:53px;width:1px;height:18px;background:#d0d0d0;"></div>
<span style="top:53.5px;line-height:17px;font-size:11px;color:#000;left:810.9000000000001px;font-family:'DejaVu Sans','Liberation Sans',sans-serif;transform:scaleX(0.9143);transform-origin:0 50%;">47</span>
<div style="left:827px;top:53px;width:1px;height:18px;background:#d0d0d0;"></div>
<span style="top:53.5px;line-height:17px;font-size:11px;color:#000;left:828.5px;font-family:'DejaVu Sans','Liberation Sans',sans-serif;transform:scaleX(0.9143);transform-origin:0 50%;">48</span>
<div style="left:845px;top:53px;width:1px;height:18px;background:#d0d0d0;"></div>
<span style="top:53.5px;line-height:17px;font-size:11px;color:#000;left:846.0999999999999px;font-family:'DejaVu Sans','Liberation Sans',sans-serif;transform:scaleX(0.9143);transform-origin:0 50%;">49</span>
<div style="left:862px;top:53px;width:1px;height:18px;background:#d0d0d0;"></div>
<span style="top:53.5px;line-height:17px;font-size:11px;color:#000;left:863.7px;font-family:'DejaVu Sans','Liberation Sans',sans-serif;transform:scaleX(0.9143);transform-origin:0 50%;">50</span>
<div style="left:880px;top:53px;width:1px;height:18px;background:#d0d0d0;"></div>
<span style="top:53.5px;line-height:17px;font-size:11px;color:#000;left:881.3000000000002px;font-family:'DejaVu Sans','Liberation Sans',sans-serif;transform:scaleX(0.9143);transform-origin:0 50%;">51</span>
<div style="left:897px;top:53px;width:1px;height:18px;background:#d0d0d0;"></div>
<span style="top:53.5px;line-height:17px;font-size:11px;color:#000;left:898.9000000000001px;font-family:'DejaVu Sans','Liberation Sans',sans-serif;transform:scaleX(0.9143);transform-origin:0 50%;">52</span>
<div style="left:915px;top:53px;width:1px;height:18px;background:#d0d0d0;"></div>
<span style="top:53.5px;line-height:17px;font-size:11px;color:#000;left:916.5px;font-family:'DejaVu Sans','Liberation Sans',sans-serif;transform:scaleX(0.9143);transform-origin:0 50%;">53</span>
<div style="left:933px;top:53px;width:1px;height:18px;background:#d0d0d0;"></div>
<span style="top:53.5px;line-height:17px;font-size:11px;color:#000;left:934.0999999999999px;font-family:'DejaVu Sans','Liberation Sans',sans-serif;transform:scaleX(0.9143);transform-origin:0 50%;">54</span>
<div style="left:950px;top:53px;width:1px;height:18px;background:#d0d0d0;"></div>
<span style="top:53.5px;line-height:17px;font-size:11px;color:#000;left:951.7px;font-family:'DejaVu Sans','Liberation Sans',sans-serif;transform:scaleX(0.9143);transform-origin:0 50%;">55</span>
<div style="left:968px;top:53px;width:1px;height:18px;background:#d0d0d0;"></div>
<span style="top:53.5px;line-height:17px;font-size:11px;color:#000;left:969.3000000000002px;font-family:'DejaVu Sans','Liberation Sans',sans-serif;transform:scaleX(0.9143);transform-origin:0 50%;">56</span>
<div style="left:985px;top:53px;width:1px;height:18px;background:#d0d0d0;"></div>
<span style="top:53.5px;line-height:17px;font-size:11px;color:#000;left:986.9000000000001px;font-family:'DejaVu Sans','Liberation Sans',sans-serif;transform:scaleX(0.9143);transform-origin:0 50%;">57</span>
<div style="left:1003px;top:53px;width:1px;height:18px;background:#d0d0d0;"></div>
<span style="top:53.5px;line-height:17px;font-size:11px;color:#000;left:1004.5px;font-family:'DejaVu Sans','Liberation Sans',sans-serif;transform:scaleX(0.9143);transform-origin:0 50%;">58</span>
<div style="left:1021px;top:53px;width:1px;height:18px;background:#d0d0d0;"></div>
<span style="top:53.5px;line-height:17px;font-size:11px;color:#000;left:1022.0999999999999px;font-family:'DejaVu Sans','Liberation Sans',sans-serif;transform:scaleX(0.9143);transform-origin:0 50%;">59</span>
<div style="left:1038px;top:53px;width:1px;height:18px;background:#d0d0d0;"></div>
<span style="top:53.5px;line-height:17px;font-size:11px;color:#000;left:1039.7px;font-family:'DejaVu Sans','Liberation Sans',sans-serif;transform:scaleX(0.9143);transform-origin:0 50%;">60</span>
<div style="left:1056px;top:53px;width:1px;height:18px;background:#d0d0d0;"></div>
<span style="top:53.5px;line-height:17px;font-size:11px;color:#000;left:1057.3px;font-family:'DejaVu Sans','Liberation Sans',sans-serif;transform:scaleX(0.9143);transform-origin:0 50%;">61</span>
<div style="left:0px;top:71px;width:17px;height:5px;background:#f0e296;"></div>
<div style="left:17px;top:71px;width:18px;height:5px;background:#f0e296;"></div>
<div style="left:17px;top:71px;width:1px;height:5px;background:rgba(255,255,255,.3);"></div>
<div style="left:35px;top:71px;width:18px;height:5px;background:#f0e094;"></div>
<div style="left:35px;top:71px;width:1px;height:5px;background:rgba(255,255,255,.3);"></div>
<div style="left:53px;top:71px;width:17px;height:5px;background:#f0de92;"></div>
<div style="left:53px;top:71px;width:1px;height:5px;background:rgba(255,255,255,.3);"></div>
<div style="left:70px;top:71px;width:18px;height:5px;background:#f0da8f;"></div>
<div style="left:70px;top:71px;width:1px;height:5px;background:rgba(255,255,255,.3);"></div>
<div style="left:88px;top:71px;width:17px;height:5px;background:#efd58a;"></div>
<div style="left:88px;top:71px;width:1px;height:5px;background:rgba(255,255,255,.3);"></div>
<div style="left:105px;top:71px;width:18px;height:5px;background:#efcf84;"></div>
<div style="left:105px;top:71px;width:1px;height:5px;background:rgba(255,255,255,.3);"></div>
<div style="left:123px;top:71px;width:18px;height:5px;background:#efc77c;"></div>
<div style="left:123px;top:71px;width:1px;height:5px;background:rgba(255,255,255,.3);"></div>
<div style="left:141px;top:71px;width:17px;height:5px;background:#eebe74;"></div>
<div style="left:141px;top:71px;width:1px;height:5px;background:rgba(255,255,255,.3);"></div>
<div style="left:158px;top:71px;width:18px;height:5px;background:#eeb369;"></div>
<div style="left:158px;top:71px;width:1px;height:5px;background:rgba(255,255,255,.3);"></div>
<div style="left:176px;top:71px;width:17px;height:5px;background:#eda65e;"></div>
<div style="left:176px;top:71px;width:1px;height:5px;background:rgba(255,255,255,.3);"></div>
<div style="left:193px;top:71px;width:18px;height:5px;background:#ed9951;"></div>
<div style="left:193px;top:71px;width:1px;height:5px;background:rgba(255,255,255,.3);"></div>
<div style="left:211px;top:71px;width:18px;height:5px;background:#ec8942;"></div>
<div style="left:211px;top:71px;width:1px;height:5px;background:rgba(255,255,255,.3);"></div>
<div style="left:229px;top:71px;width:17px;height:5px;background:#eb7832;"></div>
<div style="left:229px;top:71px;width:1px;height:5px;background:rgba(255,255,255,.3);"></div>
<div style="left:246px;top:71px;width:18px;height:5px;background:#f0a5aa;"></div>
<div style="left:246px;top:71px;width:1px;height:5px;background:rgba(255,255,255,.3);"></div>
<div style="left:264px;top:71px;width:17px;height:5px;background:#f0a5aa;"></div>
<div style="left:264px;top:71px;width:1px;height:5px;background:rgba(255,255,255,.3);"></div>
<div style="left:281px;top:71px;width:18px;height:5px;background:#f0a3aa;"></div>
<div style="left:281px;top:71px;width:1px;height:5px;background:rgba(255,255,255,.3);"></div>
<div style="left:299px;top:71px;width:18px;height:5px;background:#f0a1a9;"></div>
<div style="left:299px;top:71px;width:1px;height:5px;background:rgba(255,255,255,.3);"></div>
<div style="left:317px;top:71px;width:17px;height:5px;background:#f09da9;"></div>
<div style="left:317px;top:71px;width:1px;height:5px;background:rgba(255,255,255,.3);"></div>
<div style="left:334px;top:71px;width:18px;height:5px;background:#ef98a8;"></div>
<div style="left:334px;top:71px;width:1px;height:5px;background:rgba(255,255,255,.3);"></div>
<div style="left:352px;top:71px;width:17px;height:5px;background:#ef92a6;"></div>
<div style="left:352px;top:71px;width:1px;height:5px;background:rgba(255,255,255,.3);"></div>
<div style="left:369px;top:71px;width:18px;height:5px;background:#ef8aa5;"></div>
<div style="left:369px;top:71px;width:1px;height:5px;background:rgba(255,255,255,.3);"></div>
<div style="left:387px;top:71px;width:18px;height:5px;background:#ee81a3;"></div>
<div style="left:387px;top:71px;width:1px;height:5px;background:rgba(255,255,255,.3);"></div>
<div style="left:405px;top:71px;width:17px;height:5px;background:#ee76a1;"></div>
<div style="left:405px;top:71px;width:1px;height:5px;background:rgba(255,255,255,.3);"></div>
<div style="left:422px;top:71px;width:18px;height:5px;background:#ed6a9f;"></div>
<div style="left:422px;top:71px;width:1px;height:5px;background:rgba(255,255,255,.3);"></div>
<div style="left:440px;top:71px;width:17px;height:5px;background:#ed5c9c;"></div>
<div style="left:440px;top:71px;width:1px;height:5px;background:rgba(255,255,255,.3);"></div>
<div style="left:457px;top:71px;width:18px;height:5px;background:#ec4d99;"></div>
<div style="left:457px;top:71px;width:1px;height:5px;background:rgba(255,255,255,.3);"></div>
<div style="left:475px;top:71px;width:18px;height:5px;background:#eb3c96;"></div>
<div style="left:475px;top:71px;width:1px;height:5px;background:rgba(255,255,255,.3);"></div>
<div style="left:493px;top:71px;width:17px;height:5px;background:#aaa0eb;"></div>
<div style="left:493px;top:71px;width:1px;height:5px;background:rgba(255,255,255,.3);"></div>
<div style="left:510px;top:71px;width:18px;height:5px;background:#aaa0eb;"></div>
<div style="left:510px;top:71px;width:1px;height:5px;background:rgba(255,255,255,.3);"></div>
<div style="left:528px;top:71px;width:17px;height:5px;background:#aa9eeb;"></div>
<div style="left:528px;top:71px;width:1px;height:5px;background:rgba(255,255,255,.3);"></div>
<div style="left:545px;top:71px;width:18px;height:5px;background:#a99beb;"></div>
<div style="left:545px;top:71px;width:1px;height:5px;background:rgba(255,255,255,.3);"></div>
<div style="left:563px;top:71px;width:18px;height:5px;background:#a897ea;"></div>
<div style="left:563px;top:71px;width:1px;height:5px;background:rgba(255,255,255,.3);"></div>
<div style="left:581px;top:71px;width:17px;height:5px;background:#a691ea;"></div>
<div style="left:581px;top:71px;width:1px;height:5px;background:rgba(255,255,255,.3);"></div>
<div style="left:598px;top:71px;width:18px;height:5px;background:#a58ae9;"></div>
<div style="left:598px;top:71px;width:1px;height:5px;background:rgba(255,255,255,.3);"></div>
<div style="left:616px;top:71px;width:17px;height:5px;background:#a281e8;"></div>
<div style="left:616px;top:71px;width:1px;height:5px;background:rgba(255,255,255,.3);"></div>
<div style="left:633px;top:71px;width:18px;height:5px;background:#a077e8;"></div>
<div style="left:633px;top:71px;width:1px;height:5px;background:rgba(255,255,255,.3);"></div>
<div style="left:651px;top:71px;width:18px;height:5px;background:#9d6be7;"></div>
<div style="left:651px;top:71px;width:1px;height:5px;background:rgba(255,255,255,.3);"></div>
<div style="left:669px;top:71px;width:17px;height:5px;background:#995de5;"></div>
<div style="left:669px;top:71px;width:1px;height:5px;background:rgba(255,255,255,.3);"></div>
<div style="left:686px;top:71px;width:18px;height:5px;background:#954de4;"></div>
<div style="left:686px;top:71px;width:1px;height:5px;background:rgba(255,255,255,.3);"></div>
<div style="left:704px;top:71px;width:17px;height:5px;background:#913be3;"></div>
<div style="left:704px;top:71px;width:1px;height:5px;background:rgba(255,255,255,.3);"></div>
<div style="left:721px;top:71px;width:18px;height:5px;background:#8c28e1;"></div>
<div style="left:721px;top:71px;width:1px;height:5px;background:rgba(255,255,255,.3);"></div>
<div style="left:739px;top:71px;width:18px;height:5px;background:#b9e896;"></div>
<div style="left:739px;top:71px;width:1px;height:5px;background:rgba(255,255,255,.3);"></div>
<div style="left:757px;top:71px;width:17px;height:5px;background:#b9e896;"></div>
<div style="left:757px;top:71px;width:1px;height:5px;background:rgba(255,255,255,.3);"></div>
<div style="left:774px;top:71px;width:18px;height:5px;background:#b9e894;"></div>
<div style="left:774px;top:71px;width:1px;height:5px;background:rgba(255,255,255,.3);"></div>
<div style="left:792px;top:71px;width:17px;height:5px;background:#b9e892;"></div>
<div style="left:792px;top:71px;width:1px;height:5px;background:rgba(255,255,255,.3);"></div>
<div style="left:809px;top:71px;width:18px;height:5px;background:#bae78f;"></div>
<div style="left:809px;top:71px;width:1px;height:5px;background:rgba(255,255,255,.3);"></div>
<div style="left:827px;top:71px;width:18px;height:5px;background:#bae78a;"></div>
<div style="left:827px;top:71px;width:1px;height:5px;background:rgba(255,255,255,.3);"></div>
<div style="left:845px;top:71px;width:17px;height:5px;background:#bbe784;"></div>
<div style="left:845px;top:71px;width:1px;height:5px;background:rgba(255,255,255,.3);"></div>
<div style="left:862px;top:71px;width:18px;height:5px;background:#bce67c;"></div>
<div style="left:862px;top:71px;width:1px;height:5px;background:rgba(255,255,255,.3);"></div>
<div style="left:880px;top:71px;width:17px;height:5px;background:#bce674;"></div>
<div style="left:880px;top:71px;width:1px;height:5px;background:rgba(255,255,255,.3);"></div>
<div style="left:897px;top:71px;width:18px;height:5px;background:#bde569;"></div>
<div style="left:897px;top:71px;width:1px;height:5px;background:rgba(255,255,255,.3);"></div>
<div style="left:915px;top:71px;width:18px;height:5px;background:#bfe45e;"></div>
<div style="left:915px;top:71px;width:1px;height:5px;background:rgba(255,255,255,.3);"></div>
<div style="left:933px;top:71px;width:17px;height:5px;background:#c0e351;"></div>
<div style="left:933px;top:71px;width:1px;height:5px;background:rgba(255,255,255,.3);"></div>
<div style="left:950px;top:71px;width:18px;height:5px;background:#c1e242;"></div>
<div style="left:950px;top:71px;width:1px;height:5px;background:rgba(255,255,255,.3);"></div>
<div style="left:968px;top:71px;width:17px;height:5px;background:#c3e132;"></div>
<div style="left:968px;top:71px;width:1px;height:5px;background:rgba(255,255,255,.3);"></div>
<div style="left:985px;top:71px;width:18px;height:5px;background:#a5d4ee;"></div>
<div style="left:985px;top:71px;width:1px;height:5px;background:rgba(255,255,255,.3);"></div>
<div style="left:1003px;top:71px;width:18px;height:5px;background:#a5d4ee;"></div>
<div style="left:1003px;top:71px;width:1px;height:5px;background:rgba(255,255,255,.3);"></div>
<div style="left:1021px;top:71px;width:17px;height:5px;background:#a5d4ee;"></div>
<div style="left:1021px;top:71px;width:1px;height:5px;background:rgba(255,255,255,.3);"></div>
<div style="left:1038px;top:71px;width:18px;height:5px;background:#a4d4ee;"></div>
<div style="left:1038px;top:71px;width:1px;height:5px;background:rgba(255,255,255,.3);"></div>
<div style="left:1056px;top:71px;width:17px;height:5px;background:#a4d3ee;"></div>
<div style="left:1056px;top:71px;width:1px;height:5px;background:rgba(255,255,255,.3);"></div>
</div>
<div style="left:474px;top:202px;width:1125px;height:3px;background:#d0d0d0;"></div>
<div style="left:474px;top:126px;width:51px;height:77px;background:#fff;"></div>
<span style="top:156.5px;line-height:17px;font-size:11px;color:#333;left:498.8px;font-family:'DejaVu Sans','Liberation Sans',sans-serif;transform:scaleX(0.9185);transform-origin:0 50%;">Pe...</span>
<div style="left:474px;top:205px;width:1125px;height:145px;background:#ff8a58;"></div>
<div style="left:495px;top:223px;width:1104px;height:127px;background:#fdb295;border-top:1px solid #f0a080;border-left:1px solid #f0a080;"></div>
<span style="top:205.7px;line-height:17px;font-size:11px;color:#222;left:499.7px;font-family:'DejaVu Sans','Liberation Sans',sans-serif;transform:scaleX(1.0213);transform-origin:0 50%;">Drills</span>
<div style="left:530px;top:230.5px;width:7.5px;height:7px;background:#ffff00;border:1px solid #000;"></div>
<span style="top:225.3px;line-height:17px;font-size:11px;color:#222;left:540.5px;font-family:'DejaVu Sans','Liberation Sans',sans-serif;transform:scaleX(1.0152);transform-origin:0 50%;">D45_1</span>
<div style="left:517px;top:244.5px;width:1082px;height:105.5px;background:#fff;"></div>
<div style="left:517px;top:244.5px;width:7px;height:44.5px;background:#e6e6e6;"></div>
<div style="left:524px;top:244.5px;width:15px;height:44.5px;background:#dcdcdc;"></div>
<div style="left:517px;top:289px;width:1082px;height:1px;background:#d8d8d8;"></div>
<svg style="left:539px;top:244px;" width="1060" height="45" viewBox="0 0 1060 45"><defs><pattern id="ph" width="3" height="3" patternUnits="userSpaceOnUse" patternTransform="rotate(-45)"><rect width="3" height="1" fill="#c8a0f0"/></pattern></defs><path d="M204.0 0V45" stroke="#7fd8e8" stroke-width="1" stroke-dasharray="1.5 2.5"/><path d="M221.6 0V45" stroke="#7fd8e8" stroke-width="1" stroke-dasharray="1.5 2.5"/><path d="M227.5 0V45" stroke="#9adfe8" stroke-width="1" stroke-dasharray="1.5 2.5"/><path d="M245.1 0V45" stroke="#f4b8c8" stroke-width="1" stroke-dasharray="1.5 2.5"/><path d="M251.0 0V45" stroke="#7fd8e8" stroke-width="1" stroke-dasharray="1.5 2.5"/><path d="M256.9 0V45" stroke="#7fd8e8" stroke-width="1" stroke-dasharray="1.5 2.5"/><path d="M262.8 0V45" stroke="#f4b8c8" stroke-width="1" stroke-dasharray="1.5 2.5"/><path d="M274.5 0V45" stroke="#7fd8e8" stroke-width="1" stroke-dasharray="1.5 2.5"/><path d="M280.4 0V45" stroke="#7fd8e8" stroke-width="1" stroke-dasharray="1.5 2.5"/><path d="M286.3 0V45" stroke="#f4b8c8" stroke-width="1" stroke-dasharray="1.5 2.5"/><path d="M303.9 0V45" stroke="#7fd8e8" stroke-width="1" stroke-dasharray="1.5 2.5"/><path d="M315.6 0V45" stroke="#f4b8c8" stroke-width="1" stroke-dasharray="1.5 2.5"/><path d="M321.5 0V45" stroke="#7fd8e8" stroke-width="1" stroke-dasharray="1.5 2.5"/><path d="M327.4 0V45" stroke="#7fd8e8" stroke-width="1" stroke-dasharray="1.5 2.5"/><path d="M345.0 0V45" stroke="#f4b8c8" stroke-width="1" stroke-dasharray="1.5 2.5"/><path d="M350.9 0V45" stroke="#7fd8e8" stroke-width="1" stroke-dasharray="1.5 2.5"/><path d="M356.8 0V45" stroke="#7fd8e8" stroke-width="1" stroke-dasharray="1.5 2.5"/><path d="M362.7 0V45" stroke="#7fd8e8" stroke-width="1" stroke-dasharray="1.5 2.5"/><path d="M368.6 0V45" stroke="#9adfe8" stroke-width="1" stroke-dasharray="1.5 2.5"/><path d="M374.5 0V45" stroke="#9adfe8" stroke-width="1" stroke-dasharray="1.5 2.5"/><path d="M386.2 0V45" stroke="#7fd8e8" stroke-width="1" stroke-dasharray="1.5 2.5"/><path d="M392.1 0V45" stroke="#f4b8c8" stroke-width="1" stroke-dasharray="1.5 2.5"/><path d="M398.0 0V45" stroke="#f4b8c8" stroke-width="1" stroke-dasharray="1.5 2.5"/><path d="M409.7 0V45" stroke="#7fd8e8" stroke-width="1" stroke-dasharray="1.5 2.5"/><path d="M421.4 0V45" stroke="#7fd8e8" stroke-width="1" stroke-dasharray="1.5 2.5"/><path d="M433.1 0V45" stroke="#7fd8e8" stroke-width="1" stroke-dasharray="1.5 2.5"/><path d="M439.0 0V45" stroke="#7fd8e8" stroke-width="1" stroke-dasharray="1.5 2.5"/><path d="M450.7 0V45" stroke="#7fd8e8" stroke-width="1" stroke-dasharray="1.5 2.5"/><path d="M462.4 0V45" stroke="#f4b8c8" stroke-width="1" stroke-dasharray="1.5 2.5"/><path d="M468.3 0V45" stroke="#9adfe8" stroke-width="1" stroke-dasharray="1.5 2.5"/><path d="M480.0 0V45" stroke="#7fd8e8" stroke-width="1" stroke-dasharray="1.5 2.5"/><path d="M491.7 0V45" stroke="#7fd8e8" stroke-width="1" stroke-dasharray="1.5 2.5"/><path d="M503.4 0V45" stroke="#7fd8e8" stroke-width="1" stroke-dasharray="1.5 2.5"/><path d="M521.0 0V45" stroke="#f4b8c8" stroke-width="1" stroke-dasharray="1.5 2.5"/><path d="M538.6 0V45" stroke="#7fd8e8" stroke-width="1" stroke-dasharray="1.5 2.5"/><path d="M550.3 0V45" stroke="#7fd8e8" stroke-width="1" stroke-dasharray="1.5 2.5"/><path d="M562.0 0V45" stroke="#7fd8e8" stroke-width="1" stroke-dasharray="1.5 2.5"/><path d="M567.9 0V45" stroke="#7fd8e8" stroke-width="1" stroke-dasharray="1.5 2.5"/><path d="M573.8 0V45" stroke="#9adfe8" stroke-width="1" stroke-dasharray="1.5 2.5"/><path d="M591.4 0V45" stroke="#7fd8e8" stroke-width="1" stroke-dasharray="1.5 2.5"/><path d="M609.0 0V45" stroke="#7fd8e8" stroke-width="1" stroke-dasharray="1.5 2.5"/><path d="M614.9 0V45" stroke="#7fd8e8" stroke-width="1" stroke-dasharray="1.5 2.5"/><path d="M620.8 0V45" stroke="#7fd8e8" stroke-width="1" stroke-dasharray="1.5 2.5"/><path d="M632.5 0V45" stroke="#9adfe8" stroke-width="1" stroke-dasharray="1.5 2.5"/><path d="M638.4 0V45" stroke="#7fd8e8" stroke-width="1" stroke-dasharray="1.5 2.5"/><path d="M650.1 0V45" stroke="#f4b8c8" stroke-width="1" stroke-dasharray="1.5 2.5"/><path d="M656.0 0V45" stroke="#9adfe8" stroke-width="1" stroke-dasharray="1.5 2.5"/><path d="M661.9 0V45" stroke="#f4b8c8" stroke-width="1" stroke-dasharray="1.5 2.5"/><path d="M667.8 0V45" stroke="#7fd8e8" stroke-width="1" stroke-dasharray="1.5 2.5"/><path d="M679.5 0V45" stroke="#f4b8c8" stroke-width="1" stroke-dasharray="1.5 2.5"/><path d="M691.2 0V45" stroke="#7fd8e8" stroke-width="1" stroke-dasharray="1.5 2.5"/><path d="M697.1 0V45" stroke="#7fd8e8" stroke-width="1" stroke-dasharray="1.5 2.5"/><path d="M714.7 0V45" stroke="#7fd8e8" stroke-width="1" stroke-dasharray="1.5 2.5"/><path d="M726.4 0V45" stroke="#7fd8e8" stroke-width="1" stroke-dasharray="1.5 2.5"/><path d="M738.1 0V45" stroke="#7fd8e8" stroke-width="1" stroke-dasharray="1.5 2.5"/><path d="M749.8 0V45" stroke="#7fd8e8" stroke-width="1" stroke-dasharray="1.5 2.5"/><path d="M755.7 0V45" stroke="#7fd8e8" stroke-width="1" stroke-dasharray="1.5 2.5"/><path d="M767.4 0V45" stroke="#7fd8e8" stroke-width="1" stroke-dasharray="1.5 2.5"/><path d="M773.3 0V45" stroke="#7fd8e8" stroke-width="1" stroke-dasharray="1.5 2.5"/><path d="M790.9 0V45" stroke="#7fd8e8" stroke-width="1" stroke-dasharray="1.5 2.5"/><path d="M796.8 0V45" stroke="#7fd8e8" stroke-width="1" stroke-dasharray="1.5 2.5"/><path d="M808.5 0V45" stroke="#9adfe8" stroke-width="1" stroke-dasharray="1.5 2.5"/><path d="M826.1 0V45" stroke="#9adfe8" stroke-width="1" stroke-dasharray="1.5 2.5"/><path d="M832.0 0V45" stroke="#7fd8e8" stroke-width="1" stroke-dasharray="1.5 2.5"/><path d="M843.7 0V45" stroke="#9adfe8" stroke-width="1" stroke-dasharray="1.5 2.5"/><path d="M855.4 0V45" stroke="#7fd8e8" stroke-width="1" stroke-dasharray="1.5 2.5"/><path d="M867.1 0V45" stroke="#f4b8c8" stroke-width="1" stroke-dasharray="1.5 2.5"/><path d="M878.8 0V45" stroke="#7fd8e8" stroke-width="1" stroke-dasharray="1.5 2.5"/><path d="M890.5 0V45" stroke="#7fd8e8" stroke-width="1" stroke-dasharray="1.5 2.5"/><path d="M896.4 0V45" stroke="#7fd8e8" stroke-width="1" stroke-dasharray="1.5 2.5"/><path d="M902.3 0V45" stroke="#7fd8e8" stroke-width="1" stroke-dasharray="1.5 2.5"/><path d="M919.9 0V45" stroke="#9adfe8" stroke-width="1" stroke-dasharray="1.5 2.5"/><path d="M931.6 0V45" stroke="#7fd8e8" stroke-width="1" stroke-dasharray="1.5 2.5"/><path d="M943.3 0V45" stroke="#f4b8c8" stroke-width="1" stroke-dasharray="1.5 2.5"/><path d="M955.0 0V45" stroke="#7fd8e8" stroke-width="1" stroke-dasharray="1.5 2.5"/><path d="M966.7 0V45" stroke="#7fd8e8" stroke-width="1" stroke-dasharray="1.5 2.5"/><path d="M978.4 0V45" stroke="#7fd8e8" stroke-width="1" stroke-dasharray="1.5 2.5"/><path d="M990.1 0V45" stroke="#7fd8e8" stroke-width="1" stroke-dasharray="1.5 2.5"/><path d="M1001.8 0V45" stroke="#7fd8e8" stroke-width="1" stroke-dasharray="1.5 2.5"/><path d="M1013.5 0V45" stroke="#7fd8e8" stroke-width="1" stroke-dasharray="1.5 2.5"/><path d="M1031.1 0V45" stroke="#7fd8e8" stroke-width="1" stroke-dasharray="1.5 2.5"/><path d="M1037.0 0V45" stroke="#9adfe8" stroke-width="1" stroke-dasharray="1.5 2.5"/><path d="M1048.7 0V45" stroke="#9adfe8" stroke-width="1" stroke-dasharray="1.5 2.5"/><path d="M1054.6 0V45" stroke="#9adfe8" stroke-width="1" stroke-dasharray="1.5 2.5"/><rect x="54" y="0" width="7" height="45" fill="url(#ph)"/><rect x="302" y="0" width="7" height="45" fill="url(#ph)"/><rect x="548" y="0" width="7" height="45" fill="url(#ph)"/><rect x="795" y="0" width="7" height="45" fill="url(#ph)"/><rect x="1041" y="0" width="7" height="45" fill="url(#ph)"/></svg>
<div style="left:539.3px;top:250.2px;width:1.7000000000000455px;height:5px;background:#9232e0;border:1px solid #5e1ea0;"></div>
<div style="left:543px;top:250.2px;width:15px;height:5px;background:#9232e0;border:1px solid #5e1ea0;"></div>
<div style="left:560px;top:250.2px;width:11px;height:5px;background:#9232e0;border:1px solid #5e1ea0;"></div>
<div style="left:573px;top:250.2px;width:4px;height:5px;background:#9232e0;border:1px solid #5e1ea0;"></div>
<div style="left:579px;top:250.2px;width:4px;height:5px;background:#9232e0;border:1px solid #5e1ea0;"></div>
<div style="left:585px;top:250.2px;width:4px;height:5px;background:#9232e0;border:1px solid #5e1ea0;"></div>
<div style="left:591px;top:250.2px;width:3px;height:5px;background:#9232e0;border:1px solid #5e1ea0;"></div>
<div style="left:601px;top:250.2px;width:11px;height:5px;background:#9232e0;border:1px solid #5e1ea0;"></div>
<div style="left:614px;top:250.2px;width:4px;height:5px;background:#9232e0;border:1px solid #5e1ea0;"></div>
<div style="left:620px;top:250.2px;width:3px;height:5px;background:#9232e0;border:1px solid #5e1ea0;"></div>
<div style="left:625px;top:250.2px;width:4px;height:5px;background:#9232e0;border:1px solid #5e1ea0;"></div>
<div style="left:631px;top:250.2px;width:14px;height:5px;background:#9232e0;border:1px solid #5e1ea0;"></div>
<div style="left:648px;top:250.2px;width:10px;height:5px;background:#9232e0;border:1px solid #5e1ea0;"></div>
<div style="left:660px;top:250.2px;width:4px;height:5px;background:#9232e0;border:1px solid #5e1ea0;"></div>
<div style="left:666px;top:250.2px;width:4px;height:5px;background:#9232e0;border:1px solid #5e1ea0;"></div>
<div style="left:672px;top:250.2px;width:3px;height:5px;background:#9232e0;border:1px solid #5e1ea0;"></div>
<div style="left:677px;top:250.2px;width:3px;height:5px;background:#9232e0;border:1px solid #5e1ea0;"></div>
<div style="left:684px;top:250.2px;width:15px;height:5px;background:#9232e0;border:1px solid #5e1ea0;"></div>
<div style="left:701px;top:250.2px;width:4px;height:5px;background:#9232e0;border:1px solid #5e1ea0;"></div>
<div style="left:707px;top:250.2px;width:4px;height:5px;background:#9232e0;border:1px solid #5e1ea0;"></div>
<div style="left:713px;top:250.2px;width:3px;height:5px;background:#9232e0;border:1px solid #5e1ea0;"></div>
<div style="left:719px;top:250.2px;width:4px;height:5px;background:#9232e0;border:1px solid #5e1ea0;"></div>
<div style="left:725px;top:250.2px;width:10px;height:5px;background:#9232e0;border:1px solid #5e1ea0;"></div>
<div style="left:737px;top:250.2px;width:4px;height:5px;background:#9232e0;border:1px solid #5e1ea0;"></div>
<div style="left:538px;top:257px;width:204px;height:19px;background:#ffe233;border:1px solid #8a8a70;border-left:none;overflow:hidden;"><span style="top:0.0px;line-height:18px;font-size:12px;color:#222;left:-2.4139880952380963px;font-family:'DejaVu Sans','Liberation Sans',sans-serif;letter-spacing:-0.245px;">M1/P3/P301/910/1 (+11)</span></div>
<svg style="left:723px;top:262px;" width="16" height="11" viewBox="0 0 16 11"><defs><linearGradient id="ff" x1="0" y1="0" x2="1" y2="1"><stop offset="0" stop-color="#d6ebff"/><stop offset="1" stop-color="#4a90e0"/></linearGradient></defs><path d="M1 .8L9 5.5 1 10.2z" fill="url(#ff)" stroke="#3a78c8" stroke-width=".9" stroke-linejoin="round"/><path d="M6.6 .8l8 4.7-8 4.7z" fill="url(#ff)" stroke="#3a78c8" stroke-width=".9" stroke-linejoin="round"/></svg>
<div style="left:541.5px;top:281px;width:1.6px;height:5px;background:#18b0b8;"></div>
<div style="left:559px;top:281px;width:1.6px;height:5px;background:#18b0b8;"></div>
<div style="left:571.5px;top:281px;width:1.6px;height:5px;background:#18b0b8;"></div>
<div style="left:577.5px;top:281px;width:1.6px;height:5px;background:#18b0b8;"></div>
<div style="left:583.5px;top:281px;width:1.6px;height:5px;background:#18b0b8;"></div>
<div style="left:589.5px;top:281px;width:1.6px;height:5px;background:#18b0b8;"></div>
<div style="left:595px;top:281px;width:1.6px;height:5px;background:#0c6a72;"></div>
<div style="left:613px;top:281px;width:1.6px;height:5px;background:#0c6a72;"></div>
<div style="left:619px;top:281px;width:1.6px;height:5px;background:#18b0b8;"></div>
<div style="left:624.5px;top:281px;width:1.6px;height:5px;background:#18b0b8;"></div>
<div style="left:630px;top:281px;width:1.6px;height:5px;background:#18b0b8;"></div>
<div style="left:647.5px;top:281px;width:1.6px;height:5px;background:#18b0b8;"></div>
<div style="left:659.5px;top:281px;width:1.6px;height:5px;background:#0c6a72;"></div>
<div style="left:665.5px;top:281px;width:1.6px;height:5px;background:#0c6a72;"></div>
<div style="left:671px;top:281px;width:1.6px;height:5px;background:#18b0b8;"></div>
<div style="left:677px;top:281px;width:1.6px;height:5px;background:#18b0b8;"></div>
<div style="left:682.5px;top:281px;width:1.6px;height:5px;background:#0c6a72;"></div>
<div style="left:700.5px;top:281px;width:1.6px;height:5px;background:#0c6a72;"></div>
<div style="left:706.5px;top:281px;width:1.6px;height:5px;background:#18b0b8;"></div>
<div style="left:712px;top:281px;width:1.6px;height:5px;background:#18b0b8;"></div>
<div style="left:717.5px;top:281px;width:1.6px;height:5px;background:#18b0b8;"></div>
<div style="left:724px;top:281px;width:1.6px;height:5px;background:#0c6a72;"></div>
<div style="left:735px;top:281px;width:1.6px;height:5px;background:#18b0b8;"></div>
<div style="left:595px;top:281px;width:5px;height:5px;background:#c080f0;border:1px solid #8a40d0;"></div>
<div style="left:741px;top:281px;width:858px;height:5px;background:#ff1493;border-top:1px solid #b81070;border-bottom:1px solid #b81070;"></div>
<div style="left:749px;top:281px;width:1px;height:5px;background:#98104e;"></div>
<div style="left:761px;top:281px;width:1px;height:5px;background:#98104e;"></div>
<div style="left:772px;top:281px;width:1px;height:5px;background:#98104e;"></div>
<div style="left:772px;top:281px;width:2px;height:5px;background:#1c5a62;"></div>
<div style="left:778px;top:281px;width:1px;height:5px;background:#98104e;"></div>
<div style="left:784px;top:281px;width:1px;height:5px;background:#98104e;"></div>
<div style="left:784px;top:281px;width:2px;height:5px;background:#1c5a62;"></div>
<div style="left:790px;top:281px;width:1px;height:5px;background:#98104e;"></div>
<div style="left:802px;top:281px;width:1px;height:5px;background:#98104e;"></div>
<div style="left:802px;top:281px;width:2px;height:5px;background:#1c5a62;"></div>
<div style="left:808px;top:281px;width:1px;height:5px;background:#98104e;"></div>
<div style="left:819px;top:281px;width:1px;height:5px;background:#98104e;"></div>
<div style="left:831px;top:281px;width:1px;height:5px;background:#98104e;"></div>
<div style="left:837px;top:281px;width:1px;height:5px;background:#98104e;"></div>
<div style="left:849px;top:281px;width:1px;height:5px;background:#98104e;"></div>
<div style="left:849px;top:281px;width:2px;height:5px;background:#1c5a62;"></div>
<div style="left:860px;top:281px;width:1px;height:5px;background:#98104e;"></div>
<div style="left:872px;top:281px;width:1px;height:5px;background:#98104e;"></div>
<div style="left:890px;top:281px;width:1px;height:5px;background:#98104e;"></div>
<div style="left:890px;top:281px;width:2px;height:5px;background:#1c5a62;"></div>
<div style="left:896px;top:281px;width:1px;height:5px;background:#98104e;"></div>
<div style="left:901px;top:281px;width:1px;height:5px;background:#98104e;"></div>
<div style="left:907px;top:281px;width:1px;height:5px;background:#98104e;"></div>
<div style="left:907px;top:281px;width:2px;height:5px;background:#1c5a62;"></div>
<div style="left:925px;top:281px;width:1px;height:5px;background:#98104e;"></div>
<div style="left:925px;top:281px;width:2px;height:5px;background:#1c5a62;"></div>
<div style="left:931px;top:281px;width:1px;height:5px;background:#98104e;"></div>
<div style="left:937px;top:281px;width:1px;height:5px;background:#98104e;"></div>
<div style="left:937px;top:281px;width:2px;height:5px;background:#1c5a62;"></div>
<div style="left:943px;top:281px;width:1px;height:5px;background:#98104e;"></div>
<div style="left:949px;top:281px;width:1px;height:5px;background:#98104e;"></div>
<div style="left:949px;top:281px;width:2px;height:5px;background:#1c5a62;"></div>
<div style="left:954px;top:281px;width:1px;height:5px;background:#98104e;"></div>
<div style="left:966px;top:281px;width:1px;height:5px;background:#98104e;"></div>
<div style="left:972px;top:281px;width:1px;height:5px;background:#98104e;"></div>
<div style="left:978px;top:281px;width:1px;height:5px;background:#98104e;"></div>
<div style="left:984px;top:281px;width:1px;height:5px;background:#98104e;"></div>
<div style="left:990px;top:281px;width:1px;height:5px;background:#98104e;"></div>
<div style="left:996px;top:281px;width:1px;height:5px;background:#98104e;"></div>
<div style="left:1002px;top:281px;width:1px;height:5px;background:#98104e;"></div>
<div style="left:1002px;top:281px;width:2px;height:5px;background:#1c5a62;"></div>
<div style="left:1013px;top:281px;width:1px;height:5px;background:#98104e;"></div>
<div style="left:1013px;top:281px;width:2px;height:5px;background:#1c5a62;"></div>
<div style="left:1019px;top:281px;width:1px;height:5px;background:#98104e;"></div>
<div style="left:1025px;top:281px;width:1px;height:5px;background:#98104e;"></div>
<div style="left:1025px;top:281px;width:2px;height:5px;background:#1c5a62;"></div>
<div style="left:1037px;top:281px;width:1px;height:5px;background:#98104e;"></div>
<div style="left:1037px;top:281px;width:2px;height:5px;background:#1c5a62;"></div>
<div style="left:1048px;top:281px;width:1px;height:5px;background:#98104e;"></div>
<div style="left:1048px;top:281px;width:2px;height:5px;background:#1c5a62;"></div>
<div style="left:1060px;top:281px;width:1px;height:5px;background:#98104e;"></div>
<div style="left:1066px;top:281px;width:1px;height:5px;background:#98104e;"></div>
<div style="left:1072px;top:281px;width:1px;height:5px;background:#98104e;"></div>
<div style="left:1078px;top:281px;width:1px;height:5px;background:#98104e;"></div>
<div style="left:1078px;top:281px;width:2px;height:5px;background:#1c5a62;"></div>
<div style="left:1095px;top:281px;width:1px;height:5px;background:#98104e;"></div>
<div style="left:1113px;top:281px;width:1px;height:5px;background:#98104e;"></div>
<div style="left:1119px;top:281px;width:1px;height:5px;background:#98104e;"></div>
<div style="left:1119px;top:281px;width:2px;height:5px;background:#1c5a62;"></div>
<div style="left:1125px;top:281px;width:1px;height:5px;background:#98104e;"></div>
<div style="left:1137px;top:281px;width:1px;height:5px;background:#98104e;"></div>
<div style="left:1142px;top:281px;width:1px;height:5px;background:#98104e;"></div>
<div style="left:1142px;top:281px;width:2px;height:5px;background:#1c5a62;"></div>
<div style="left:1148px;top:281px;width:1px;height:5px;background:#98104e;"></div>
<div style="left:1148px;top:281px;width:2px;height:5px;background:#1c5a62;"></div>
<div style="left:1154px;top:281px;width:1px;height:5px;background:#98104e;"></div>
<div style="left:1154px;top:281px;width:2px;height:5px;background:#1c5a62;"></div>
<div style="left:1166px;top:281px;width:1px;height:5px;background:#98104e;"></div>
<div style="left:1172px;top:281px;width:1px;height:5px;background:#98104e;"></div>
<div style="left:1178px;top:281px;width:1px;height:5px;background:#98104e;"></div>
<div style="left:1178px;top:281px;width:2px;height:5px;background:#1c5a62;"></div>
<div style="left:1189px;top:281px;width:1px;height:5px;background:#98104e;"></div>
<div style="left:1195px;top:281px;width:1px;height:5px;background:#98104e;"></div>
<div style="left:1201px;top:281px;width:1px;height:5px;background:#98104e;"></div>
<div style="left:1207px;top:281px;width:1px;height:5px;background:#98104e;"></div>
<div style="left:1213px;top:281px;width:1px;height:5px;background:#98104e;"></div>
<div style="left:1219px;top:281px;width:1px;height:5px;background:#98104e;"></div>
<div style="left:1225px;top:281px;width:1px;height:5px;background:#98104e;"></div>
<div style="left:1231px;top:281px;width:1px;height:5px;background:#98104e;"></div>
<div style="left:1248px;top:281px;width:1px;height:5px;background:#98104e;"></div>
<div style="left:1260px;top:281px;width:1px;height:5px;background:#98104e;"></div>
<div style="left:1260px;top:281px;width:2px;height:5px;background:#1c5a62;"></div>
<div style="left:1272px;top:281px;width:1px;height:5px;background:#98104e;"></div>
<div style="left:1283px;top:281px;width:1px;height:5px;background:#98104e;"></div>
<div style="left:1283px;top:281px;width:2px;height:5px;background:#1c5a62;"></div>
<div style="left:1289px;top:281px;width:1px;height:5px;background:#98104e;"></div>
<div style="left:1301px;top:281px;width:1px;height:5px;background:#98104e;"></div>
<div style="left:1301px;top:281px;width:2px;height:5px;background:#1c5a62;"></div>
<div style="left:1307px;top:281px;width:1px;height:5px;background:#98104e;"></div>
<div style="left:1307px;top:281px;width:2px;height:5px;background:#1c5a62;"></div>
<div style="left:1313px;top:281px;width:1px;height:5px;background:#98104e;"></div>
<div style="left:1319px;top:281px;width:1px;height:5px;background:#98104e;"></div>
<div style="left:1330px;top:281px;width:1px;height:5px;background:#98104e;"></div>
<div style="left:1336px;top:281px;width:1px;height:5px;background:#98104e;"></div>
<div style="left:1348px;top:281px;width:1px;height:5px;background:#98104e;"></div>
<div style="left:1360px;top:281px;width:1px;height:5px;background:#98104e;"></div>
<div style="left:1360px;top:281px;width:2px;height:5px;background:#1c5a62;"></div>
<div style="left:1371px;top:281px;width:1px;height:5px;background:#98104e;"></div>
<div style="left:1377px;top:281px;width:1px;height:5px;background:#98104e;"></div>
<div style="left:1389px;top:281px;width:1px;height:5px;background:#98104e;"></div>
<div style="left:1401px;top:281px;width:1px;height:5px;background:#98104e;"></div>
<div style="left:1407px;top:281px;width:1px;height:5px;background:#98104e;"></div>
<div style="left:1407px;top:281px;width:2px;height:5px;background:#1c5a62;"></div>
<div style="left:1413px;top:281px;width:1px;height:5px;background:#98104e;"></div>
<div style="left:1418px;top:281px;width:1px;height:5px;background:#98104e;"></div>
<div style="left:1424px;top:281px;width:1px;height:5px;background:#98104e;"></div>
<div style="left:1430px;top:281px;width:1px;height:5px;background:#98104e;"></div>
<div style="left:1430px;top:281px;width:2px;height:5px;background:#1c5a62;"></div>
<div style="left:1436px;top:281px;width:1px;height:5px;background:#98104e;"></div>
<div style="left:1442px;top:281px;width:1px;height:5px;background:#98104e;"></div>
<div style="left:1442px;top:281px;width:2px;height:5px;background:#1c5a62;"></div>
<div style="left:1448px;top:281px;width:1px;height:5px;background:#98104e;"></div>
<div style="left:1454px;top:281px;width:1px;height:5px;background:#98104e;"></div>
<div style="left:1466px;top:281px;width:1px;height:5px;background:#98104e;"></div>
<div style="left:1471px;top:281px;width:1px;height:5px;background:#98104e;"></div>
<div style="left:1477px;top:281px;width:1px;height:5px;background:#98104e;"></div>
<div style="left:1483px;top:281px;width:1px;height:5px;background:#98104e;"></div>
<div style="left:1489px;top:281px;width:1px;height:5px;background:#98104e;"></div>
<div style="left:1489px;top:281px;width:2px;height:5px;background:#1c5a62;"></div>
<div style="left:1501px;top:281px;width:1px;height:5px;background:#98104e;"></div>
<div style="left:1501px;top:281px;width:2px;height:5px;background:#1c5a62;"></div>
<div style="left:1507px;top:281px;width:1px;height:5px;background:#98104e;"></div>
<div style="left:1513px;top:281px;width:1px;height:5px;background:#98104e;"></div>
<div style="left:1513px;top:281px;width:2px;height:5px;background:#1c5a62;"></div>
<div style="left:1519px;top:281px;width:1px;height:5px;background:#98104e;"></div>
<div style="left:1519px;top:281px;width:2px;height:5px;background:#1c5a62;"></div>
<div style="left:1530px;top:281px;width:1px;height:5px;background:#98104e;"></div>
<div style="left:1536px;top:281px;width:1px;height:5px;background:#98104e;"></div>
<div style="left:1548px;top:281px;width:1px;height:5px;background:#98104e;"></div>
<div style="left:1554px;top:281px;width:1px;height:5px;background:#98104e;"></div>
<div style="left:1560px;top:281px;width:1px;height:5px;background:#98104e;"></div>
<div style="left:1571px;top:281px;width:1px;height:5px;background:#98104e;"></div>
<div style="left:1577px;top:281px;width:1px;height:5px;background:#98104e;"></div>
<div style="left:1583px;top:281px;width:1px;height:5px;background:#98104e;"></div>
<div style="left:1589px;top:281px;width:1px;height:5px;background:#98104e;"></div>
<div style="left:842px;top:281.5px;width:5px;height:5px;background:#c89af0;border:1px solid #9a58d8;"></div>
<div style="left:1088px;top:281.5px;width:5px;height:5px;background:#c89af0;border:1px solid #9a58d8;"></div>
<div style="left:1335px;top:281.5px;width:5px;height:5px;background:#c89af0;border:1px solid #9a58d8;"></div>
<div style="left:1581px;top:281.5px;width:5px;height:5px;background:#c89af0;border:1px solid #9a58d8;"></div>
<div style="left:539px;top:290px;width:200px;height:60px;overflow:hidden;"><span style="top:1.0px;line-height:18px;font-size:12px;color:#666;left:-7.5px;font-family:'DejaVu Sans','Liberation Sans',sans-serif;">1.8</span><span style="top:21.0px;line-height:18px;font-size:12px;color:#666;left:-7.5px;font-family:'DejaVu Sans','Liberation Sans',sans-serif;">1.4</span></div>
<div style="left:570px;top:292px;width:48px;height:16px;background:#efefea;overflow:hidden;border:1px solid #d2d2cc;"><span style="top:-1.0px;line-height:18px;font-size:12px;color:#6a6a6a;left:1.5px;font-family:'DejaVu Sans','Liberation Sans',sans-serif;">P3/P301</span></div>
<span style="top:291.0px;line-height:18px;font-size:12px;color:#666;left:619.3px;font-family:'DejaVu Sans','Liberation Sans',sans-serif;transform:scaleX(0.8977);transform-origin:0 50%;">31.8</span>
<div style="left:679px;top:292px;width:39px;height:16px;background:#efefea;overflow:hidden;border:1px solid #d2d2cc;"><span style="top:-1.0px;line-height:18px;font-size:12px;color:#6a6a6a;left:1.5px;font-family:'DejaVu Sans','Liberation Sans',sans-serif;">P3/P30</span></div>
<span style="top:291.0px;line-height:18px;font-size:12px;color:#666;left:719.3px;font-family:'DejaVu Sans','Liberation Sans',sans-serif;transform:scaleX(0.8977);transform-origin:0 50%;">26.2</span>
<div style="left:617px;top:312px;width:63px;height:16px;background:#d2dcea;overflow:hidden;"><span style="top:-1.0px;line-height:18px;font-size:12px;color:#6a6a6a;left:2px;font-family:'DejaVu Sans','Liberation Sans',sans-serif;">P3/P301/8</span></div>
<span style="top:311.0px;line-height:18px;font-size:12px;color:#666;left:681.3px;font-family:'DejaVu Sans','Liberation Sans',sans-serif;transform:scaleX(0.8977);transform-origin:0 50%;">41.9</span>
<div style="left:717px;top:312px;width:25px;height:16px;background:#efefea;overflow:hidden;border:1px solid #d2d2cc;"><span style="top:-1.0px;line-height:18px;font-size:12px;color:#6a6a6a;left:1.5px;font-family:'DejaVu Sans','Liberation Sans',sans-serif;">P3/</span></div>
<span style="top:311.0px;line-height:18px;font-size:12px;color:#666;left:743.5px;font-family:'DejaVu Sans','Liberation Sans',sans-serif;transform:scaleX(0.8977);transform-origin:0 50%;">16.5</span>
<div style="left:539px;top:332px;width:32px;height:16px;background:#d2dcea;overflow:hidden;"><span style="top:-1.0px;line-height:18px;font-size:12px;color:#6a6a6a;left:-13px;font-family:'DejaVu Sans','Liberation Sans',sans-serif;">P3/P301</span></div>
<span style="top:331.0px;line-height:18px;font-size:12px;color:#666;left:572.7px;font-family:'DejaVu Sans','Liberation Sans',sans-serif;transform:scaleX(0.8977);transform-origin:0 50%;">28.7</span>
<div style="left:524.8px;top:137px;width:1.8px;height:68px;background:#b6b6b6;"></div>
<div style="left:526px;top:205px;width:1px;height:145px;background:#646464;"></div>
<svg style="left:525px;top:127px;" width="11" height="17" viewBox="0 0 11 17"><rect x=".9" y="1" width="8.2" height="8" fill="none" stroke="#1f62e0" stroke-width="1.8"/><path d="M0 9.4h10L0 16z" fill="#1f62e0"/></svg>
<div style="left:470px;top:348px;width:1131.1px;height:678px;background:#f1f1f1;border:3.3px solid #f94141;box-shadow:-3px 0 6px rgba(0,0,0,.25);"></div>
<div style="left:473.3px;top:351px;width:1124.8px;height:29.5px;background:#444444;"></div>
<span style="top:358.3px;line-height:17px;font-size:11px;color:#fff;left:483.2px;font-weight:bold;transform:scaleX(1.1300);transform-origin:0 50%;white-space:pre;">Dependencies for Reserves/M1/P3/P301/900/1  Time: 6/01/2020 7:21:47 AM</span>
<svg style="left:1575px;top:361.5px;" width="10" height="10" viewBox="0 0 10 10"><path d="M1 1L8.6 8.6M8.6 1L1 8.6" stroke="#fff" stroke-width="1.5"/></svg>
<div style="left:475px;top:383px;width:1122px;height:611px;background:#f3f3f3;border:1px solid #b4b4b4;"></div>
<div style="left:479px;top:387px;width:1115px;height:577px;background:#fff;border:1px solid #b4b4b4;"></div>
<div style="left:480px;top:388px;width:1113px;height:25px;background:#f1f1f1;border-bottom:1px solid #c4c4c4;"></div>
<div style="left:947px;top:388px;width:1px;height:318px;background:#c8c8c8;"></div>
<div style="left:972px;top:388px;width:1px;height:318px;background:#c8c8c8;"></div>
<div style="left:1441px;top:388px;width:1px;height:318px;background:#c8c8c8;"></div>
<span style="top:391.8px;line-height:17px;font-size:11px;color:#333;left:485.7px;transform:scaleX(0.9148);transform-origin:0 50%;">Successor</span>
<span style="top:391.8px;line-height:17px;font-size:11px;color:#333;left:978.1px;transform:scaleX(0.9469);transform-origin:0 50%;">Predecessor</span>
<span style="top:391.8px;line-height:17px;font-size:11px;color:#333;left:1447.4px;transform:scaleX(0.9542);transform-origin:0 50%;">Origin</span>
<div style="left:498px;top:433px;width:1095px;height:1px;background:#cdcdcd;"></div>
<div style="left:498px;top:412px;width:1px;height:22px;background:#cdcdcd;"></div>
<span style="top:414.5px;line-height:17px;font-size:11px;color:#222;left:504px;transform:scaleX(0.9807);transform-origin:0 50%;">ProductionDrilling: Reserves/M1/P3/P301/900/1 (9884)</span>
<svg style="left:955.2px;top:417.1px;" width="11" height="11" viewBox="0 0 11 11"><circle cx="5.5" cy="5.5" r="4.5" fill="#fff" stroke="#f06c6c" stroke-width="1.3"/><path d="M7.3 3.7C6.2 2.9 3.9 3.1 4 4.5 4.1 5.7 7.2 5.3 7.2 6.8 7.2 8.2 4.4 8.2 3.5 7.2" stroke="#ee5a5a" stroke-width="1" fill="none"/></svg>
<span style="top:414.5px;line-height:17px;font-size:11px;color:#0c7a1c;left:978.1px;transform:scaleX(0.9911);transform-origin:0 50%;">&lt;PreBlastSolid&gt;: Reserves/M1/P3/P301/900/1 (9884) [Satisfied]</span>
<span style="top:414.5px;line-height:17px;font-size:11px;color:#222;left:1447.4px;transform:scaleX(0.9917);transform-origin:0 50%;">Predefined Activity Sequen...</span>
<div style="left:498px;top:454px;width:1095px;height:1px;background:#cdcdcd;"></div>
<div style="left:498px;top:433px;width:1px;height:22px;background:#cdcdcd;"></div>
<span style="top:435.5px;line-height:17px;font-size:11px;color:#222;left:504px;transform:scaleX(0.9807);transform-origin:0 50%;">ProductionDrilling: Reserves/M1/P3/P301/900/1 (9884)</span>
<svg style="left:487px;top:440px;" width="6" height="8" viewBox="0 0 6 8"><path d="M1.2 .8L4.4 4 1.2 7.2" stroke="#555" stroke-width="1.2" fill="none"/></svg>
<svg style="left:955.2px;top:438.1px;" width="11" height="11" viewBox="0 0 11 11"><circle cx="5.5" cy="5.5" r="4.5" fill="#fff" stroke="#f06c6c" stroke-width="1.3"/><path d="M7.3 3.7C6.2 2.9 3.9 3.1 4 4.5 4.1 5.7 7.2 5.3 7.2 6.8 7.2 8.2 4.4 8.2 3.5 7.2" stroke="#ee5a5a" stroke-width="1" fill="none"/></svg>
<span style="top:435.5px;line-height:17px;font-size:11px;color:#dc143c;left:978.1px;transform:scaleX(0.9939);transform-origin:0 50%;">Mining: Reserves/M1/P3/P301/910/1/910/1 (9877)</span>
<span style="top:435.5px;line-height:17px;font-size:11px;color:#222;left:1447.4px;transform:scaleX(0.9565);transform-origin:0 50%;">Expand Distance</span>
<div style="left:498px;top:475px;width:1095px;height:1px;background:#cdcdcd;"></div>
<div style="left:498px;top:454px;width:1px;height:22px;background:#cdcdcd;"></div>
<span style="top:456.5px;line-height:17px;font-size:11px;color:#222;left:504px;transform:scaleX(0.9807);transform-origin:0 50%;">ProductionDrilling: Reserves/M1/P3/P301/900/1 (9884)</span>
<svg style="left:485px;top:463px;" width="8" height="6" viewBox="0 0 8 6"><path d="M.8 1.2L4 4.4 7.2 1.2" stroke="#555" stroke-width="1.2" fill="none"/></svg>
<svg style="left:955.2px;top:459.1px;" width="11" height="11" viewBox="0 0 11 11"><circle cx="5.5" cy="5.5" r="4.5" fill="#fff" stroke="#f06c6c" stroke-width="1.3"/><path d="M7.3 3.7C6.2 2.9 3.9 3.1 4 4.5 4.1 5.7 7.2 5.3 7.2 6.8 7.2 8.2 4.4 8.2 3.5 7.2" stroke="#ee5a5a" stroke-width="1" fill="none"/></svg>
<span style="top:456.5px;line-height:17px;font-size:11px;color:#dc143c;left:978.1px;transform:scaleX(0.9939);transform-origin:0 50%;">Mining: Reserves/M1/P3/P301/910/2/910/1 (9882)</span>
<span style="top:456.5px;line-height:17px;font-size:11px;color:#222;left:1447.4px;transform:scaleX(0.9565);transform-origin:0 50%;">Expand Distance</span>
<div style="left:516px;top:496px;width:1077px;height:1px;background:#cdcdcd;"></div>
<div style="left:516px;top:475px;width:1px;height:22px;background:#cdcdcd;"></div>
<span style="top:477.5px;line-height:17px;font-size:11px;color:#222;left:522px;transform:scaleX(0.9939);transform-origin:0 50%;">Mining: Reserves/M1/P3/P301/910/2/910/1 (9882)</span>
<svg style="left:503px;top:484px;" width="8" height="6" viewBox="0 0 8 6"><path d="M.8 1.2L4 4.4 7.2 1.2" stroke="#555" stroke-width="1.2" fill="none"/></svg>
<svg style="left:955.2px;top:480.1px;" width="11" height="11" viewBox="0 0 11 11"><circle cx="5.5" cy="5.5" r="4.5" fill="#fff" stroke="#f06c6c" stroke-width="1.3"/><path d="M7.3 3.7C6.2 2.9 3.9 3.1 4 4.5 4.1 5.7 7.2 5.3 7.2 6.8 7.2 8.2 4.4 8.2 3.5 7.2" stroke="#ee5a5a" stroke-width="1" fill="none"/></svg>
<span style="top:477.5px;line-height:17px;font-size:11px;color:#dc143c;left:978.1px;transform:scaleX(0.9857);transform-origin:0 50%;">&lt;PreDigSolids&gt;: Reserves/M1/P3/P301/910/2 (9878)</span>
<span style="top:477.5px;line-height:17px;font-size:11px;color:#222;left:1447.4px;transform:scaleX(0.9917);transform-origin:0 50%;">Predefined Activity Sequen...</span>
<div style="left:534px;top:517px;width:1059px;height:1px;background:#cdcdcd;"></div>
<div style="left:534px;top:496px;width:1px;height:22px;background:#cdcdcd;"></div>
<span style="top:498.5px;line-height:17px;font-size:11px;color:#222;left:540px;transform:scaleX(0.9857);transform-origin:0 50%;">&lt;PreDigSolids&gt;: Reserves/M1/P3/P301/910/2 (9878)</span>
<svg style="left:521px;top:505px;" width="8" height="6" viewBox="0 0 8 6"><path d="M.8 1.2L4 4.4 7.2 1.2" stroke="#555" stroke-width="1.2" fill="none"/></svg>
<svg style="left:955.2px;top:501.1px;" width="11" height="11" viewBox="0 0 11 11"><circle cx="5.5" cy="5.5" r="4.5" fill="#fff" stroke="#f06c6c" stroke-width="1.3"/><path d="M7.3 3.7C6.2 2.9 3.9 3.1 4 4.5 4.1 5.7 7.2 5.3 7.2 6.8 7.2 8.2 4.4 8.2 3.5 7.2" stroke="#ee5a5a" stroke-width="1" fill="none"/></svg>
<span style="top:498.5px;line-height:17px;font-size:11px;color:#dc143c;left:978.1px;transform:scaleX(0.9834);transform-origin:0 50%;">ProductionBlasting: Reserves/M1/P3/P301/910/2 (9878)</span>
<span style="top:498.5px;line-height:17px;font-size:11px;color:#222;left:1447.4px;transform:scaleX(0.9917);transform-origin:0 50%;">Predefined Activity Sequen...</span>
<div style="left:552px;top:538px;width:1041px;height:1px;background:#cdcdcd;"></div>
<div style="left:552px;top:517px;width:1px;height:22px;background:#cdcdcd;"></div>
<span style="top:519.5px;line-height:17px;font-size:11px;color:#222;left:558px;transform:scaleX(0.9834);transform-origin:0 50%;">ProductionBlasting: Reserves/M1/P3/P301/910/2 (9878)</span>
<svg style="left:955.2px;top:522.1px;" width="11" height="11" viewBox="0 0 11 11"><circle cx="5.5" cy="5.5" r="4.5" fill="#fff" stroke="#f06c6c" stroke-width="1.3"/><path d="M7.3 3.7C6.2 2.9 3.9 3.1 4 4.5 4.1 5.7 7.2 5.3 7.2 6.8 7.2 8.2 4.4 8.2 3.5 7.2" stroke="#ee5a5a" stroke-width="1" fill="none"/></svg>
<span style="top:519.5px;line-height:17px;font-size:11px;color:#0c7a1c;left:978.1px;transform:scaleX(0.9911);transform-origin:0 50%;">&lt;PreBlastSolid&gt;: Reserves/M1/P3/P301/910/2 (9878) [Satisfied]</span>
<span style="top:519.5px;line-height:17px;font-size:11px;color:#222;left:1447.4px;transform:scaleX(0.9917);transform-origin:0 50%;">Predefined Activity Sequen...</span>
<div style="left:552px;top:559px;width:1041px;height:1px;background:#cdcdcd;"></div>
<div style="left:552px;top:538px;width:1px;height:22px;background:#cdcdcd;"></div>
<span style="top:540.5px;line-height:17px;font-size:11px;color:#222;left:558px;transform:scaleX(0.9834);transform-origin:0 50%;">ProductionBlasting: Reserves/M1/P3/P301/910/2 (9878)</span>
<svg style="left:539px;top:547px;" width="8" height="6" viewBox="0 0 8 6"><path d="M.8 1.2L4 4.4 7.2 1.2" stroke="#555" stroke-width="1.2" fill="none"/></svg>
<svg style="left:955.2px;top:543.1px;" width="11" height="11" viewBox="0 0 11 11"><circle cx="5.5" cy="5.5" r="4.5" fill="#fff" stroke="#f06c6c" stroke-width="1.3"/><path d="M7.3 3.7C6.2 2.9 3.9 3.1 4 4.5 4.1 5.7 7.2 5.3 7.2 6.8 7.2 8.2 4.4 8.2 3.5 7.2" stroke="#ee5a5a" stroke-width="1" fill="none"/></svg>
<span style="top:540.5px;line-height:17px;font-size:11px;color:#e0a030;left:978.1px;transform:scaleX(0.9878);transform-origin:0 50%;">ProductionCharging: Reserves/M1/P3/P301/910/2 (9878) [Available]</span>
<span style="top:540.5px;line-height:17px;font-size:11px;color:#222;left:1447.4px;transform:scaleX(0.9917);transform-origin:0 50%;">Predefined Activity Sequen...</span>
<div style="left:516px;top:580px;width:1077px;height:1px;background:#cdcdcd;"></div>
<div style="left:571px;top:559px;width:1px;height:22px;background:#cdcdcd;"></div>
<span style="top:561.5px;line-height:17px;font-size:11px;color:#222;left:577px;transform:scaleX(0.9878);transform-origin:0 50%;">ProductionCharging: Reserves/M1/P3/P301/910/2 (9878) [Available]</span>
<svg style="left:955.2px;top:564.1px;" width="11" height="11" viewBox="0 0 11 11"><circle cx="5.5" cy="5.5" r="4.5" fill="#fff" stroke="#f06c6c" stroke-width="1.3"/><path d="M7.3 3.7C6.2 2.9 3.9 3.1 4 4.5 4.1 5.7 7.2 5.3 7.2 6.8 7.2 8.2 4.4 8.2 3.5 7.2" stroke="#ee5a5a" stroke-width="1" fill="none"/></svg>
<span style="top:561.5px;line-height:17px;font-size:11px;color:#0c7a1c;left:978.1px;transform:scaleX(0.9911);transform-origin:0 50%;">&lt;PreBlastSolid&gt;: Reserves/M1/P3/P301/910/2 (9878) [Satisfied]</span>
<span style="top:561.5px;line-height:17px;font-size:11px;color:#222;left:1447.4px;transform:scaleX(0.9917);transform-origin:0 50%;">Predefined Activity Sequen...</span>
<div style="left:516px;top:601px;width:1077px;height:1px;background:#cdcdcd;"></div>
<div style="left:516px;top:580px;width:1px;height:22px;background:#cdcdcd;"></div>
<span style="top:582.5px;line-height:17px;font-size:11px;color:#222;left:522px;transform:scaleX(0.9939);transform-origin:0 50%;">Mining: Reserves/M1/P3/P301/910/2/910/1 (9882)</span>
<svg style="left:503px;top:589px;" width="8" height="6" viewBox="0 0 8 6"><path d="M.8 1.2L4 4.4 7.2 1.2" stroke="#555" stroke-width="1.2" fill="none"/></svg>
<svg style="left:955.2px;top:585.1px;" width="11" height="11" viewBox="0 0 11 11"><circle cx="5.5" cy="5.5" r="4.5" fill="#fff" stroke="#f06c6c" stroke-width="1.3"/><path d="M7.3 3.7C6.2 2.9 3.9 3.1 4 4.5 4.1 5.7 7.2 5.3 7.2 6.8 7.2 8.2 4.4 8.2 3.5 7.2" stroke="#ee5a5a" stroke-width="1" fill="none"/></svg>
<span style="top:582.5px;line-height:17px;font-size:11px;color:#dc143c;left:978.1px;transform:scaleX(0.9939);transform-origin:0 50%;">Mining: Reserves/M1/P3/P301/910/2/913/1 (9880)</span>
<span style="top:582.5px;line-height:17px;font-size:11px;color:#222;left:1447.4px;transform:scaleX(0.9521);transform-origin:0 50%;">Mining Expand Distance</span>
<div style="left:534px;top:622px;width:1059px;height:1px;background:#cdcdcd;"></div>
<div style="left:534px;top:601px;width:1px;height:22px;background:#cdcdcd;"></div>
<span style="top:603.5px;line-height:17px;font-size:11px;color:#222;left:540px;transform:scaleX(0.9939);transform-origin:0 50%;">Mining: Reserves/M1/P3/P301/910/2/913/1 (9880)</span>
<svg style="left:521px;top:610px;" width="8" height="6" viewBox="0 0 8 6"><path d="M.8 1.2L4 4.4 7.2 1.2" stroke="#555" stroke-width="1.2" fill="none"/></svg>
<svg style="left:955.2px;top:606.1px;" width="11" height="11" viewBox="0 0 11 11"><circle cx="5.5" cy="5.5" r="4.5" fill="#fff" stroke="#f06c6c" stroke-width="1.3"/><path d="M7.3 3.7C6.2 2.9 3.9 3.1 4 4.5 4.1 5.7 7.2 5.3 7.2 6.8 7.2 8.2 4.4 8.2 3.5 7.2" stroke="#ee5a5a" stroke-width="1" fill="none"/></svg>
<span style="top:603.5px;line-height:17px;font-size:11px;color:#dc143c;left:978.1px;transform:scaleX(0.9857);transform-origin:0 50%;">&lt;PreDigSolids&gt;: Reserves/M1/P3/P301/910/2 (9878)</span>
<span style="top:603.5px;line-height:17px;font-size:11px;color:#222;left:1447.4px;transform:scaleX(0.9917);transform-origin:0 50%;">Predefined Activity Sequen...</span>
<div style="left:552px;top:643px;width:1041px;height:1px;background:#cdcdcd;"></div>
<div style="left:552px;top:622px;width:1px;height:22px;background:#cdcdcd;"></div>
<span style="top:624.5px;line-height:17px;font-size:11px;color:#222;left:558px;transform:scaleX(0.9857);transform-origin:0 50%;">&lt;PreDigSolids&gt;: Reserves/M1/P3/P301/910/2 (9878)</span>
<svg style="left:539px;top:631px;" width="8" height="6" viewBox="0 0 8 6"><path d="M.8 1.2L4 4.4 7.2 1.2" stroke="#555" stroke-width="1.2" fill="none"/></svg>
<svg style="left:955.2px;top:627.1px;" width="11" height="11" viewBox="0 0 11 11"><circle cx="5.5" cy="5.5" r="4.5" fill="#fff" stroke="#f06c6c" stroke-width="1.3"/><path d="M7.3 3.7C6.2 2.9 3.9 3.1 4 4.5 4.1 5.7 7.2 5.3 7.2 6.8 7.2 8.2 4.4 8.2 3.5 7.2" stroke="#ee5a5a" stroke-width="1" fill="none"/></svg>
<span style="top:624.5px;line-height:17px;font-size:11px;color:#dc143c;left:978.1px;transform:scaleX(0.9834);transform-origin:0 50%;">ProductionBlasting: Reserves/M1/P3/P301/910/2 (9878)</span>
<span style="top:624.5px;line-height:17px;font-size:11px;color:#222;left:1447.4px;transform:scaleX(0.9917);transform-origin:0 50%;">Predefined Activity Sequen...</span>
<div style="left:571px;top:664px;width:1022px;height:1px;background:#cdcdcd;"></div>
<div style="left:571px;top:643px;width:1px;height:22px;background:#cdcdcd;"></div>
<span style="top:645.5px;line-height:17px;font-size:11px;color:#222;left:577px;transform:scaleX(0.9834);transform-origin:0 50%;">ProductionBlasting: Reserves/M1/P3/P301/910/2 (9878)</span>
<svg style="left:955.2px;top:648.1px;" width="11" height="11" viewBox="0 0 11 11"><circle cx="5.5" cy="5.5" r="4.5" fill="#fff" stroke="#f06c6c" stroke-width="1.3"/><path d="M7.3 3.7C6.2 2.9 3.9 3.1 4 4.5 4.1 5.7 7.2 5.3 7.2 6.8 7.2 8.2 4.4 8.2 3.5 7.2" stroke="#ee5a5a" stroke-width="1" fill="none"/></svg>
<span style="top:645.5px;line-height:17px;font-size:11px;color:#0c7a1c;left:978.1px;transform:scaleX(0.9911);transform-origin:0 50%;">&lt;PreBlastSolid&gt;: Reserves/M1/P3/P301/910/2 (9878) [Satisfied]</span>
<span style="top:645.5px;line-height:17px;font-size:11px;color:#222;left:1447.4px;transform:scaleX(0.9917);transform-origin:0 50%;">Predefined Activity Sequen...</span>
<div style="left:571px;top:685px;width:1022px;height:1px;background:#cdcdcd;"></div>
<div style="left:571px;top:664px;width:1px;height:22px;background:#cdcdcd;"></div>
<span style="top:666.5px;line-height:17px;font-size:11px;color:#222;left:577px;transform:scaleX(0.9834);transform-origin:0 50%;">ProductionBlasting: Reserves/M1/P3/P301/910/2 (9878)</span>
<svg style="left:558px;top:673px;" width="8" height="6" viewBox="0 0 8 6"><path d="M.8 1.2L4 4.4 7.2 1.2" stroke="#555" stroke-width="1.2" fill="none"/></svg>
<svg style="left:955.2px;top:669.1px;" width="11" height="11" viewBox="0 0 11 11"><circle cx="5.5" cy="5.5" r="4.5" fill="#fff" stroke="#f06c6c" stroke-width="1.3"/><path d="M7.3 3.7C6.2 2.9 3.9 3.1 4 4.5 4.1 5.7 7.2 5.3 7.2 6.8 7.2 8.2 4.4 8.2 3.5 7.2" stroke="#ee5a5a" stroke-width="1" fill="none"/></svg>
<span style="top:666.5px;line-height:17px;font-size:11px;color:#e0a030;left:978.1px;transform:scaleX(0.9878);transform-origin:0 50%;">ProductionCharging: Reserves/M1/P3/P301/910/2 (9878) [Available]</span>
<span style="top:666.5px;line-height:17px;font-size:11px;color:#222;left:1447.4px;transform:scaleX(0.9917);transform-origin:0 50%;">Predefined Activity Sequen...</span>
<div style="left:589px;top:706px;width:1004px;height:1px;background:#cdcdcd;"></div>
<div style="left:589px;top:685px;width:1px;height:22px;background:#cdcdcd;"></div>
<span style="top:687.5px;line-height:17px;font-size:11px;color:#222;left:595px;transform:scaleX(0.9878);transform-origin:0 50%;">ProductionCharging: Reserves/M1/P3/P301/910/2 (9878) [Available]</span>
<svg style="left:955.2px;top:690.1px;" width="11" height="11" viewBox="0 0 11 11"><circle cx="5.5" cy="5.5" r="4.5" fill="#fff" stroke="#f06c6c" stroke-width="1.3"/><path d="M7.3 3.7C6.2 2.9 3.9 3.1 4 4.5 4.1 5.7 7.2 5.3 7.2 6.8 7.2 8.2 4.4 8.2 3.5 7.2" stroke="#ee5a5a" stroke-width="1" fill="none"/></svg>
<span style="top:687.5px;line-height:17px;font-size:11px;color:#0c7a1c;left:978.1px;transform:scaleX(0.9911);transform-origin:0 50%;">&lt;PreBlastSolid&gt;: Reserves/M1/P3/P301/910/2 (9878) [Satisfied]</span>
<span style="top:687.5px;line-height:17px;font-size:11px;color:#222;left:1447.4px;transform:scaleX(0.9917);transform-origin:0 50%;">Predefined Activity Sequen...</span>
<div style="left:1363px;top:978px;width:6px;height:6px;background:#dc143c;"></div>
<div style="left:1456px;top:978px;width:6px;height:6px;background:#e0a030;"></div>
<div style="left:1531px;top:978px;width:6px;height:6px;background:#0c6a1c;"></div>
<span style="top:970.5px;line-height:18px;font-size:12px;color:#333;left:1374.3px;transform:scaleX(1.0465);transform-origin:0 50%;">Not available</span>
<span style="top:970.5px;line-height:18px;font-size:12px;color:#333;left:1467px;transform:scaleX(1.0519);transform-origin:0 50%;">Available</span>
<span style="top:970.5px;line-height:18px;font-size:12px;color:#333;left:1542.2px;transform:scaleX(1.0518);transform-origin:0 50%;">Satisfied</span>
<div style="left:1515px;top:998px;width:83px;height:22px;background:#fff;border:1px solid #b4b4b4;"></div>
<svg style="left:1518px;top:1000px;" width="17" height="17" viewBox="0 0 17 17"><path d="M2 9.6L4.4 8l2.4 3.6C8.6 7 11 3.6 14 1l1.6 1.2C12.6 5.6 9.8 10 7.8 15.4H5.6z" fill="#8abf3c" stroke="#4a7a18" stroke-width=".8" stroke-linejoin="round"/></svg>
<span style="top:1000.3px;line-height:17px;font-size:11px;color:#222;left:1558.3px;transform:scaleX(0.9116);transform-origin:0 50%;">OK</span>
<div style="left:1610.5px;top:91px;width:3.5px;height:935px;background:#e5e5e5;"></div>
<div style="left:1614px;top:93px;width:298px;height:933px;background:#f1f1f1;"></div>
<div style="left:1911.5px;top:91px;width:8.5px;height:935px;background:#e1e1e1;"></div>
<div style="left:1917px;top:91px;width:1px;height:935px;background:#d8d8d8;"></div>
<span style="top:97.8px;line-height:17.5px;font-size:11.5px;color:#484848;left:1622.2px;font-weight:bold;transform:scaleX(1.0341);transform-origin:0 50%;">Properties</span>
<svg style="left:1892.6px;top:101.6px;" width="8" height="10" viewBox="0 0 8 10"><path d="M1.2 .6h5.6M2.1 .6v4.4M.4 5h7.2M4 5v4.6" stroke="#555" stroke-width="1.1" fill="none"/><rect x="4.6" y=".6" width="1.7" height="4.4" fill="#555"/></svg>
<div style="left:1616px;top:121px;width:295px;height:359px;background:#fff;border:1px solid #b4b4b4;"></div>
<span style="top:123.0px;line-height:17px;font-size:11px;color:#222;left:1642.2px;font-weight:bold;transform:scaleX(1.0288);transform-origin:0 50%;">Sequence</span>
<svg style="left:1896px;top:128.2px;" width="9" height="6" viewBox="0 0 9 6"><path d="M.8 5L4.5 1.4 8.2 5" stroke="#555" stroke-width="1.2" fill="none"/></svg>
<div style="left:1638px;top:139.7px;width:272px;height:1px;background:#d0d0d0;"></div>
<div style="left:1617px;top:121px;width:293px;height:1px;background:#d0d0d0;"></div>
<div style="left:1638px;top:141px;width:154px;height:17px;background:#f1f1f1;border-left:1px solid #d0d0d0;border-right:1px solid #d0d0d0;"></div>
<div style="left:1638px;top:157px;width:272px;height:1px;background:#d0d0d0;"></div>
<span style="top:141.0px;line-height:17px;font-size:11px;color:#222;left:1662.5px;transform:scaleX(0.9201);transform-origin:0 50%;">Name</span>
<div style="left:1638px;top:158px;width:154px;height:17px;background:#f1f1f1;border-left:1px solid #d0d0d0;border-right:1px solid #d0d0d0;"></div>
<div style="left:1638px;top:174px;width:272px;height:1px;background:#d0d0d0;"></div>
<span style="top:158.0px;line-height:17px;font-size:11px;color:#7a7a7a;left:1662.5px;transform:scaleX(0.9849);transform-origin:0 50%;">Type</span>
<span style="top:158.0px;line-height:17px;font-size:11px;color:#7a7a7a;left:1798.8px;transform:scaleX(0.9477);transform-origin:0 50%;">Sequence</span>
<div style="left:1638px;top:175px;width:154px;height:17px;background:#f1f1f1;border-left:1px solid #d0d0d0;border-right:1px solid #d0d0d0;"></div>
<div style="left:1638px;top:191px;width:272px;height:1px;background:#d0d0d0;"></div>
<span style="top:175.0px;line-height:17px;font-size:11px;color:#222;left:1662.5px;transform:scaleX(1.0323);transform-origin:0 50%;">Start</span>
<span style="top:175.0px;line-height:17px;font-size:11px;color:#222;left:1798.8px;transform:scaleX(1.0134);transform-origin:0 50%;">2020/01/06 07:2...</span>
<svg style="left:1897.5px;top:181.5px;" width="7" height="4" viewBox="0 0 7 4"><path d="M0 0h7L3.5 4z" fill="#444"/></svg>
<div style="left:1638px;top:192px;width:154px;height:16px;background:#f1f1f1;border-left:1px solid #d0d0d0;border-right:1px solid #d0d0d0;"></div>
<div style="left:1638px;top:207px;width:272px;height:1px;background:#d0d0d0;"></div>
<span style="top:191.5px;line-height:17px;font-size:11px;color:#222;left:1662.5px;transform:scaleX(0.9187);transform-origin:0 50%;">End</span>
<span style="top:191.5px;line-height:17px;font-size:11px;color:#222;left:1798.8px;transform:scaleX(1.0134);transform-origin:0 50%;">2020/01/12 09:4...</span>
<svg style="left:1897.5px;top:198.0px;" width="7" height="4" viewBox="0 0 7 4"><path d="M0 0h7L3.5 4z" fill="#444"/></svg>
<div style="left:1638px;top:208px;width:154px;height:17px;background:#f1f1f1;border-left:1px solid #d0d0d0;border-right:1px solid #d0d0d0;"></div>
<div style="left:1638px;top:224px;width:272px;height:1px;background:#d0d0d0;"></div>
<span style="top:208.0px;line-height:17px;font-size:11px;color:#222;left:1662.5px;transform:scaleX(0.9677);transform-origin:0 50%;">Note</span>
<span style="top:208.0px;line-height:17px;font-size:11px;color:#222;left:1798.8px;transform:scaleX(1.0059);transform-origin:0 50%;">(none)</span>
<div style="left:1638px;top:225px;width:154px;height:17px;background:#f1f1f1;border-left:1px solid #d0d0d0;border-right:1px solid #d0d0d0;"></div>
<div style="left:1638px;top:241px;width:272px;height:1px;background:#d0d0d0;"></div>
<span style="top:225.0px;line-height:17px;font-size:11px;color:#222;left:1662.5px;transform:scaleX(0.9322);transform-origin:0 50%;">Color</span>
<svg style="left:1897.5px;top:231.5px;" width="7" height="4" viewBox="0 0 7 4"><path d="M0 0h7L3.5 4z" fill="#444"/></svg>
<div style="left:1796px;top:228px;width:96px;height:12.5px;background:#8a2be2;"></div>
<span style="top:243.8px;line-height:17px;font-size:11px;color:#222;left:1642.2px;font-weight:bold;transform:scaleX(1.0615);transform-origin:0 50%;">Duration</span>
<svg style="left:1896px;top:248.95000000000002px;" width="9" height="6" viewBox="0 0 9 6"><path d="M.8 5L4.5 1.4 8.2 5" stroke="#555" stroke-width="1.2" fill="none"/></svg>
<div style="left:1638px;top:260.6px;width:272px;height:1px;background:#d0d0d0;"></div>
<div style="left:1617px;top:241px;width:293px;height:1px;background:#d0d0d0;"></div>
<div style="left:1638px;top:262px;width:154px;height:17px;background:#f1f1f1;border-left:1px solid #d0d0d0;border-right:1px solid #d0d0d0;"></div>
<div style="left:1638px;top:278px;width:272px;height:1px;background:#d0d0d0;"></div>
<span style="top:262.0px;line-height:17px;font-size:11px;color:#222;left:1662.5px;transform:scaleX(0.9758);transform-origin:0 50%;">Duration (min)</span>
<span style="top:262.0px;line-height:17px;font-size:11px;color:#222;left:1798.8px;transform:scaleX(1.0000);transform-origin:0 50%;">8784</span>
<div style="left:1638px;top:279px;width:154px;height:17px;background:#f1f1f1;border-left:1px solid #d0d0d0;border-right:1px solid #d0d0d0;"></div>
<div style="left:1638px;top:295px;width:272px;height:1px;background:#d0d0d0;"></div>
<span style="top:279.0px;line-height:17px;font-size:11px;color:#222;left:1662.5px;transform:scaleX(0.9984);transform-origin:0 50%;">Duration (h)</span>
<span style="top:279.0px;line-height:17px;font-size:11px;color:#222;left:1798.8px;transform:scaleX(1.0159);transform-origin:0 50%;">146.4</span>
<div style="left:1638px;top:296px;width:154px;height:16px;background:#f1f1f1;border-left:1px solid #d0d0d0;border-right:1px solid #d0d0d0;"></div>
<div style="left:1638px;top:311px;width:272px;height:1px;background:#d0d0d0;"></div>
<span style="top:295.5px;line-height:17px;font-size:11px;color:#222;left:1662.5px;transform:scaleX(0.9984);transform-origin:0 50%;">Duration (d)</span>
<span style="top:295.5px;line-height:17px;font-size:11px;color:#222;left:1798.8px;transform:scaleX(1.0449);transform-origin:0 50%;">6.1</span>
<span style="top:313.8px;line-height:17px;font-size:11px;color:#222;left:1642.2px;font-weight:bold;transform:scaleX(1.0466);transform-origin:0 50%;">Options</span>
<svg style="left:1896px;top:318.95px;" width="9" height="6" viewBox="0 0 9 6"><path d="M.8 5L4.5 1.4 8.2 5" stroke="#555" stroke-width="1.2" fill="none"/></svg>
<div style="left:1638px;top:330.6px;width:272px;height:1px;background:#d0d0d0;"></div>
<div style="left:1617px;top:311px;width:293px;height:1px;background:#d0d0d0;"></div>
<div style="left:1638px;top:332px;width:154px;height:19px;background:#f1f1f1;border-left:1px solid #d0d0d0;border-right:1px solid #d0d0d0;"></div>
<div style="left:1638px;top:350px;width:272px;height:1px;background:#d0d0d0;"></div>
<span style="top:333.0px;line-height:17px;font-size:11px;color:#222;left:1681.7px;transform:scaleX(0.9281);transform-origin:0 50%;">Can Skip Tasks</span>
<div style="left:1844.5px;top:334.0px;width:15px;height:15px;background:#fff;border:1px solid #b0b0b0;"></div>
<svg style="left:1847px;top:336.5px;" width="11" height="10" viewBox="0 0 11 10"><path d="M1.4 5.2L4 8 9.2 1.4" stroke="#333" stroke-width="1.2" fill="none"/></svg>
<svg style="left:1663px;top:334.5px;" width="16" height="14" viewBox="0 0 16 14"><path d="M1 1.6L9 7 1 12.4z" fill="#cfe6ff" stroke="#2a6ad0" stroke-width="1" stroke-linejoin="round"/><path d="M6.4 1.6L14.6 7 6.4 12.4z" fill="#cfe6ff" stroke="#2a6ad0" stroke-width="1" stroke-linejoin="round"/></svg>
<div style="left:1638px;top:351px;width:154px;height:19px;background:#f1f1f1;border-left:1px solid #d0d0d0;border-right:1px solid #d0d0d0;"></div>
<div style="left:1638px;top:369px;width:272px;height:1px;background:#d0d0d0;"></div>
<span style="top:352.0px;line-height:17px;font-size:11px;color:#222;left:1681.7px;transform:scaleX(0.9771);transform-origin:0 50%;">Idle Before Down</span>
<div style="left:1844.5px;top:353.0px;width:15px;height:15px;background:#fff;border:1px solid #b0b0b0;"></div>
<svg style="left:1663px;top:353.5px;" width="15" height="15" viewBox="0 0 15 15"><circle cx="7.5" cy="7.5" r="6.6" fill="#fbe4e4" stroke="#d03030" stroke-width="1.2"/><circle cx="7.5" cy="7.5" r="3.6" fill="#fff" stroke="#c03030" stroke-width="1.3"/><path d="M4 4h4v4" fill="#fff" stroke="none"/><path d="M4.4 4.6H7.6V7.6" stroke="#c03030" stroke-width="1.1" fill="none"/></svg>
<div style="left:1638px;top:370px;width:154px;height:19px;background:#f1f1f1;border-left:1px solid #d0d0d0;border-right:1px solid #d0d0d0;"></div>
<div style="left:1638px;top:388px;width:272px;height:1px;background:#d0d0d0;"></div>
<span style="top:371.0px;line-height:17px;font-size:11px;color:#222;left:1681.7px;transform:scaleX(0.9528);transform-origin:0 50%;">Finish Before Down</span>
<div style="left:1844.5px;top:372.0px;width:15px;height:15px;background:#fff;border:1px solid #b0b0b0;"></div>
<svg style="left:1663px;top:372.5px;" width="16" height="15" viewBox="0 0 16 15"><path d="M7 13L1.4 7H4.6V1.4H9.4V7H12.6z" fill="#7ab4f0" stroke="#3a78c8" stroke-width=".9" stroke-linejoin="round"/><path d="M8.4 8.4L10 6.8 11.8 8.6 13.6 6.8 15.2 8.4 13.4 10.2 15.2 12 13.6 13.6 11.8 11.8 10 13.6 8.4 12 10.2 10.2z" fill="#e83a2a" stroke="#b01c10" stroke-width=".4"/></svg>
<div style="left:1638px;top:389px;width:154px;height:19px;background:#f1f1f1;border-left:1px solid #d0d0d0;border-right:1px solid #d0d0d0;"></div>
<div style="left:1638px;top:407px;width:272px;height:1px;background:#d0d0d0;"></div>
<span style="top:390.0px;line-height:17px;font-size:11px;color:#222;left:1681.7px;transform:scaleX(0.9455);transform-origin:0 50%;">Finish Before Up</span>
<div style="left:1844.5px;top:391.0px;width:15px;height:15px;background:#fff;border:1px solid #b0b0b0;"></div>
<svg style="left:1663px;top:391.5px;" width="16" height="15" viewBox="0 0 16 15"><path d="M7 1L12.6 7H9.4V12.6H4.6V7H1.4z" fill="#7ab4f0" stroke="#3a78c8" stroke-width=".9" stroke-linejoin="round"/><path d="M8.4 8.4L10 6.8 11.8 8.6 13.6 6.8 15.2 8.4 13.4 10.2 15.2 12 13.6 13.6 11.8 11.8 10 13.6 8.4 12 10.2 10.2z" fill="#e83a2a" stroke="#b01c10" stroke-width=".4"/></svg>
<div style="left:1638px;top:408px;width:154px;height:19px;background:#f1f1f1;border-left:1px solid #d0d0d0;border-right:1px solid #d0d0d0;"></div>
<div style="left:1638px;top:426px;width:272px;height:1px;background:#d0d0d0;"></div>
<span style="top:409.0px;line-height:17px;font-size:11px;color:#222;left:1681.7px;transform:scaleX(0.9827);transform-origin:0 50%;">Force Active</span>
<div style="left:1844.5px;top:410.0px;width:15px;height:15px;background:#fff;border:1px solid #b0b0b0;"></div>
<svg style="left:1663px;top:410.5px;" width="15" height="15" viewBox="0 0 15 15"><path d="M7.5 .8l2 4.4 4.8.5-3.6 3.2 1 4.7-4.2-2.4-4.2 2.4 1-4.7L.7 5.7l4.8-.5z" fill="#ffd040" stroke="#d89a1c" stroke-width=".9" stroke-linejoin="round"/></svg>
<div style="left:1638px;top:427px;width:154px;height:19px;background:#f1f1f1;border-left:1px solid #d0d0d0;border-right:1px solid #d0d0d0;"></div>
<div style="left:1638px;top:445px;width:272px;height:1px;background:#d0d0d0;"></div>
<span style="top:428.0px;line-height:17px;font-size:11px;color:#222;left:1681.7px;transform:scaleX(0.9315);transform-origin:0 50%;">Time Filter</span>
<span style="top:428.0px;line-height:17px;font-size:11px;color:#222;left:1798.8px;transform:scaleX(1.0059);transform-origin:0 50%;">(none)</span>
<svg style="left:1897.5px;top:434.5px;" width="7" height="4" viewBox="0 0 7 4"><path d="M0 0h7L3.5 4z" fill="#444"/></svg>
<svg style="left:1663px;top:429.5px;" width="15" height="15" viewBox="0 0 15 15"><rect x=".6" y=".8" width="13.8" height="13.4" rx="1" fill="#fff" stroke="#6a7ab0"/><rect x=".6" y=".8" width="13.8" height="3.2" fill="#e05050"/><path d="M2.6 6h10M2.6 8h10M2.6 10h10M2.6 12h10" stroke="#8a9ad0" stroke-width="1" stroke-dasharray="1 1"/></svg>
<div style="left:1638px;top:446px;width:154px;height:19px;background:#f1f1f1;border-left:1px solid #d0d0d0;border-right:1px solid #d0d0d0;"></div>
<div style="left:1638px;top:464px;width:272px;height:1px;background:#d0d0d0;"></div>
<span style="top:447.0px;line-height:17px;font-size:11px;color:#222;left:1681.7px;transform:scaleX(0.9894);transform-origin:0 50%;">Max Agent Rate</span>
<span style="top:447.0px;line-height:17px;font-size:11px;color:#222;left:1798.8px;">0</span>
<svg style="left:1891px;top:448.5px;" width="14" height="14" viewBox="0 0 14 14"><path d="M13.36 6.30 L13.36 7.70 L11.71 8.37 L11.29 9.36 L11.99 11.00 L11.00 11.99 L9.36 11.29 L8.37 11.71 L7.70 13.36 L6.30 13.36 L5.63 11.71 L4.64 11.29 L3.00 11.99 L2.01 11.00 L2.71 9.36 L2.29 8.37 L0.64 7.70 L0.64 6.30 L2.29 5.63 L2.71 4.64 L2.01 3.00 L3.00 2.01 L4.64 2.71 L5.63 2.29 L6.30 0.64 L7.70 0.64 L8.37 2.29 L9.36 2.71 L11.00 2.01 L11.99 3.00 L11.29 4.64 L11.71 5.63Z" fill="#eef2fa" stroke="#4a5a78" stroke-width=".9" stroke-linejoin="round"/><circle cx="7" cy="7" r="2.1" fill="#fff" stroke="#4a5a78" stroke-width=".9"/></svg>
<svg style="left:1664px;top:448.5px;" width="14" height="14" viewBox="0 0 14 14"><path d="M1.6 13V3.2a1.6 1.6 0 0 1 1.6-1.6h5.2L12.6 6v7z" fill="#f6f8ff" stroke="#4a6ab0" stroke-width="1"/><path d="M4 11.6a5 5 0 0 1 8.4-3.6" stroke="#d04030" stroke-width="1.3" fill="none"/><path d="M4 11.6L8.4 7.2" stroke="#222" stroke-width="1.2"/><circle cx="4" cy="11.6" r="1.2" fill="#222"/></svg>
<div style="left:1616px;top:493px;width:293px;height:499px;background:#f1f1f1;border:1px solid #b4b4b4;"></div>
<div style="left:1624px;top:498px;width:24px;height:22px;background:#fff;border:1px solid #c6c6c6;"></div>
<svg style="left:1628px;top:501px;" width="16" height="16" viewBox="0 0 16 16"><defs><radialGradient id="gr2" cx=".4" cy=".3" r=".8"><stop offset="0" stop-color="#ff8a8a"/><stop offset="1" stop-color="#d01818"/></radialGradient></defs><circle cx="8" cy="8" r="7.4" fill="url(#gr2)" stroke="#a81010" stroke-width=".8"/><path d="M4.4 6.1L6.1 4.4 8 6.3 9.9 4.4 11.6 6.1 9.7 8 11.6 9.9 9.9 11.6 8 9.7 6.1 11.6 4.4 9.9 6.3 8z" fill="#fff" stroke="#a81010" stroke-width=".4"/></svg>
<div style="left:1662px;top:498px;width:24px;height:22px;background:#fff;border:1px solid #c6c6c6;"></div>
<svg style="left:1666px;top:501px;" width="16" height="16" viewBox="0 0 16 16"><path d="M8 1.5L14 8.2H10.6V14H5.4V8.2H2z" fill="#5aa8f0" stroke="#2a6fc0" stroke-width=".9" stroke-linejoin="round"/></svg>
<div style="left:1690px;top:498px;width:24px;height:22px;background:#fff;border:1px solid #c6c6c6;"></div>
<svg style="left:1694px;top:501px;" width="16" height="16" viewBox="0 0 16 16"><path d="M8 14.5L14 7.8H10.6V2H5.4V7.8H2z" fill="#5aa8f0" stroke="#2a6fc0" stroke-width=".9" stroke-linejoin="round"/></svg>
<div style="left:1621px;top:524px;width:283px;height:462px;background:#fff;border:1px solid #b4b4b4;"></div>
<div style="left:1622px;top:525px;width:281px;height:21px;background:#d5e8d4;"></div>
<div style="left:1622px;top:545px;width:281px;height:1px;background:#c4dcc4;"></div>
<span style="top:526.7px;line-height:17px;font-size:11px;color:#222;left:1628.3px;font-weight:bold;transform:scaleX(1.1398);transform-origin:0 50%;">Reserves/M1/P3/P301/910/1 - ProductionDri...</span>
<div style="left:1622px;top:546px;width:281px;height:21px;background:#d5e8d4;"></div>
<div style="left:1622px;top:566px;width:281px;height:1px;background:#c4dcc4;"></div>
<span style="top:547.7px;line-height:17px;font-size:11px;color:#222;left:1628.3px;font-weight:bold;transform:scaleX(1.1398);transform-origin:0 50%;">Reserves/M1/P3/P301/910/2 - ProductionDri...</span>
<div style="left:1622px;top:587px;width:281px;height:1px;background:#d4d4d4;"></div>
<span style="top:568.5px;line-height:17px;font-size:11px;color:#858585;left:1627.4px;transform:scaleX(0.9757);transform-origin:0 50%;">Reserves/M1/P3/P301/900/1 - ProductionDrilling</span>
<div style="left:1622px;top:608px;width:281px;height:1px;background:#d4d4d4;"></div>
<span style="top:589.5px;line-height:17px;font-size:11px;color:#858585;left:1627.4px;transform:scaleX(0.9757);transform-origin:0 50%;">Reserves/M1/P3/P301/900/2 - ProductionDrilling</span>
<div style="left:1622px;top:609px;width:281px;height:21px;background:#d5e8d4;"></div>
<div style="left:1622px;top:629px;width:281px;height:1px;background:#c4dcc4;"></div>
<span style="top:610.7px;line-height:17px;font-size:11px;color:#222;left:1628.3px;font-weight:bold;transform:scaleX(1.1398);transform-origin:0 50%;">Reserves/M1/P3/P301/890/1 - ProductionDri...</span>
<div style="left:1622px;top:630px;width:281px;height:21px;background:#d5e8d4;"></div>
<div style="left:1622px;top:650px;width:281px;height:1px;background:#c4dcc4;"></div>
<span style="top:631.7px;line-height:17px;font-size:11px;color:#222;left:1628.3px;font-weight:bold;transform:scaleX(1.1398);transform-origin:0 50%;">Reserves/M1/P3/P301/890/2 - ProductionDri...</span>
<div style="left:1622px;top:671px;width:281px;height:1px;background:#d4d4d4;"></div>
<span style="top:652.5px;line-height:17px;font-size:11px;color:#858585;left:1627.4px;transform:scaleX(0.9757);transform-origin:0 50%;">Reserves/M1/P3/P301/880/3 - ProductionDrilling</span>
<div style="left:1622px;top:692px;width:281px;height:1px;background:#d4d4d4;"></div>
<span style="top:673.5px;line-height:17px;font-size:11px;color:#858585;left:1627.4px;transform:scaleX(0.9757);transform-origin:0 50%;">Reserves/M1/P3/P301/880/4 - ProductionDrilling</span>
<div style="left:1622px;top:693px;width:281px;height:21px;background:#d5e8d4;"></div>
<div style="left:1622px;top:713px;width:281px;height:1px;background:#c4dcc4;"></div>
<span style="top:694.7px;line-height:17px;font-size:11px;color:#222;left:1628.3px;font-weight:bold;transform:scaleX(1.1398);transform-origin:0 50%;">Reserves/M1/P3/P301/880/1 - ProductionDri...</span>
<div style="left:1622px;top:714px;width:281px;height:21px;background:#d5e8d4;"></div>
<div style="left:1622px;top:734px;width:281px;height:1px;background:#c4dcc4;"></div>
<span style="top:715.7px;line-height:17px;font-size:11px;color:#222;left:1628.3px;font-weight:bold;transform:scaleX(1.1398);transform-origin:0 50%;">Reserves/M1/P3/P301/880/5 - ProductionDri...</span>
<div style="left:1622px;top:735px;width:281px;height:21px;background:linear-gradient(90deg,#d5e8d4 0,#d5e8d4 44%,#fff 50%);"></div>
<div style="left:1622px;top:755px;width:281px;height:1px;background:#d4d4d4;"></div>
<span style="top:736.5px;line-height:17px;font-size:11px;color:#222;left:1627.4px;transform:scaleX(0.9757);transform-origin:0 50%;">Reserves/M1/P3/P301/880/2 - ProductionDrilling</span>
<div style="left:1622px;top:776px;width:281px;height:1px;background:#d4d4d4;"></div>
<span style="top:757.5px;line-height:17px;font-size:11px;color:#858585;left:1627.4px;transform:scaleX(0.9757);transform-origin:0 50%;">Reserves/M1/P3/P301/870/4 - ProductionDrilling</span>
<div style="left:1622px;top:777px;width:26px;height:208px;background:linear-gradient(90deg,rgba(225,225,225,.5),rgba(225,225,225,0));"></div>
<div style="left:1622.8px;top:564px;width:1286px;height:26px;width:284.2px;border:3px solid #f94141;box-shadow:0 1px 3px rgba(0,0,0,.35),inset 0 2px 3px rgba(0,0,0,.28);"></div>
<div style="left:1675px;top:584px;width:225px;height:56px;background:#fff;box-shadow:0 1px 4px rgba(0,0,0,.3);"></div>
<div style="left:1675px;top:584px;width:225px;height:27.5px;background:#c0dffc;"></div>
<span style="top:588.9px;line-height:18px;font-size:12px;color:#222;left:1708.8px;transform:scaleX(0.9580);transform-origin:0 50%;">Show Dependencies...</span>
<span style="top:617.0px;line-height:18px;font-size:12px;color:#222;left:1708.8px;transform:scaleX(0.9984);transform-origin:0 50%;">Copy Block Name to Clipboard</span>
<svg style="left:1720px;top:608px;" width="30" height="320" viewBox="0 0 30 320"><g filter="url(#sh)"><path d="M14.2 3.6L22.6 22H17.2V311.5a3 3 0 0 1-6 0V22H5.8z" fill="#f94148"/></g><defs><filter id="sh" x="-50%" y="-5%" width="200%" height="110%"><feDropShadow dx="0" dy="1" stdDeviation="1.2" flood-color="#000" flood-opacity=".4"/></filter></defs></svg>
<div style="left:1614px;top:994px;width:297px;height:1px;background:#dcdcdc;"></div>
<div style="left:1614px;top:994px;width:66px;height:2px;background:#1c62d0;"></div>
<span style="top:1000.5px;line-height:17px;font-size:11px;color:#333;left:1622.5px;transform:scaleX(0.9710);transform-origin:0 50%;">Properties</span>
<span style="top:1000.5px;line-height:17px;font-size:11px;color:#333;left:1688.6px;transform:scaleX(0.9273);transform-origin:0 50%;">Undo</span>
<span style="top:1000.5px;line-height:17px;font-size:11px;color:#333;left:1730.6px;transform:scaleX(0.9442);transform-origin:0 50%;">Legend</span>
</body></html>
